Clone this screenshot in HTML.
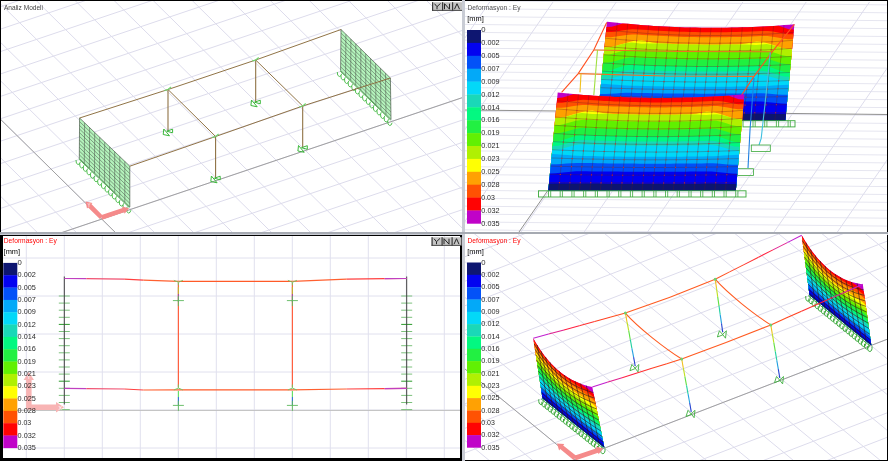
<!DOCTYPE html>
<html><head><meta charset="utf-8"><style>
html,body{margin:0;padding:0;background:#000;}
svg{display:block;}
text{font-family:"Liberation Sans",sans-serif;}
.tx{opacity:0.99;will-change:transform;}
</style></head><body>
<svg width="888" height="461" viewBox="0 0 888 461">
<rect x="0" y="0" width="888" height="461" fill="#000"/>
<rect x="462" y="0" width="3" height="461" fill="#c9ccd4"/>
<rect x="0" y="232" width="888" height="2" fill="#a6aab2"/>
<rect x="0" y="234" width="888" height="1" fill="#c9ccd4"/>
<rect x="1" y="1" width="461" height="231" fill="#fff"/>
<rect x="465" y="1" width="422" height="231" fill="#fff"/>
<rect x="3" y="236" width="457" height="222" fill="#fff"/>
<rect x="465" y="234" width="422" height="226" fill="#fff"/>
<defs><clipPath id="cTL"><rect x="1" y="1" width="461" height="231"/></clipPath><clipPath id="cTR"><rect x="465" y="1" width="422" height="231"/></clipPath><clipPath id="cBL"><rect x="3" y="236" width="457" height="222"/></clipPath><clipPath id="cBR"><rect x="465" y="234" width="422" height="226"/></clipPath></defs>
<g clip-path="url(#cTL)">
<line x1="-819" y1="81.1" x2="-141" y2="749.1" stroke="#dddcec" stroke-width="1" />
<line x1="-789.9" y1="71.3" x2="-111.9" y2="739.3" stroke="#dddcec" stroke-width="1" />
<line x1="-760.8" y1="61.5" x2="-82.8" y2="729.5" stroke="#dddcec" stroke-width="1" />
<line x1="-731.7" y1="51.7" x2="-53.7" y2="719.7" stroke="#dddcec" stroke-width="1" />
<line x1="-702.6" y1="41.9" x2="-24.6" y2="709.9" stroke="#dddcec" stroke-width="1" />
<line x1="-673.5" y1="32.1" x2="4.4" y2="700.1" stroke="#dddcec" stroke-width="1" />
<line x1="-644.5" y1="22.3" x2="33.5" y2="690.3" stroke="#dddcec" stroke-width="1" />
<line x1="-615.4" y1="12.5" x2="62.6" y2="680.5" stroke="#dddcec" stroke-width="1" />
<line x1="-586.3" y1="2.7" x2="91.7" y2="670.7" stroke="#dddcec" stroke-width="1" />
<line x1="-557.2" y1="-7.1" x2="120.8" y2="660.9" stroke="#dddcec" stroke-width="1" />
<line x1="-528.1" y1="-16.9" x2="149.9" y2="651.1" stroke="#dddcec" stroke-width="1" />
<line x1="-499" y1="-26.7" x2="179" y2="641.3" stroke="#dddcec" stroke-width="1" />
<line x1="-469.9" y1="-36.5" x2="208.1" y2="631.5" stroke="#dddcec" stroke-width="1" />
<line x1="-440.8" y1="-46.3" x2="237.2" y2="621.7" stroke="#dddcec" stroke-width="1" />
<line x1="-411.7" y1="-56.1" x2="266.3" y2="611.9" stroke="#dddcec" stroke-width="1" />
<line x1="-382.6" y1="-65.9" x2="295.4" y2="602.1" stroke="#dddcec" stroke-width="1" />
<line x1="-353.6" y1="-75.7" x2="324.4" y2="592.3" stroke="#dddcec" stroke-width="1" />
<line x1="-324.5" y1="-85.5" x2="353.5" y2="582.5" stroke="#dddcec" stroke-width="1" />
<line x1="-295.4" y1="-95.3" x2="382.6" y2="572.7" stroke="#dddcec" stroke-width="1" />
<line x1="-266.3" y1="-105.1" x2="411.7" y2="562.9" stroke="#dddcec" stroke-width="1" />
<line x1="-237.2" y1="-114.9" x2="440.8" y2="553.1" stroke="#dddcec" stroke-width="1" />
<line x1="-208.1" y1="-124.7" x2="469.9" y2="543.3" stroke="#dddcec" stroke-width="1" />
<line x1="-179" y1="-134.5" x2="499" y2="533.5" stroke="#dddcec" stroke-width="1" />
<line x1="-149.9" y1="-144.3" x2="528.1" y2="523.7" stroke="#dddcec" stroke-width="1" />
<line x1="-120.8" y1="-154.1" x2="557.2" y2="513.9" stroke="#dddcec" stroke-width="1" />
<line x1="-91.8" y1="-163.9" x2="586.2" y2="504.1" stroke="#dddcec" stroke-width="1" />
<line x1="-62.7" y1="-173.7" x2="615.3" y2="494.3" stroke="#dddcec" stroke-width="1" />
<line x1="-33.6" y1="-183.5" x2="644.4" y2="484.5" stroke="#dddcec" stroke-width="1" />
<line x1="-4.5" y1="-193.3" x2="673.5" y2="474.7" stroke="#dddcec" stroke-width="1" />
<line x1="24.6" y1="-203.1" x2="702.6" y2="464.9" stroke="#dddcec" stroke-width="1" />
<line x1="53.7" y1="-212.9" x2="731.7" y2="455.1" stroke="#dddcec" stroke-width="1" />
<line x1="82.8" y1="-222.7" x2="760.8" y2="445.3" stroke="#dddcec" stroke-width="1" />
<line x1="111.9" y1="-232.5" x2="789.9" y2="435.5" stroke="#dddcec" stroke-width="1" />
<line x1="141" y1="-242.3" x2="819" y2="425.7" stroke="#dddcec" stroke-width="1" />
<line x1="170.1" y1="-252.1" x2="848.1" y2="415.9" stroke="#dddcec" stroke-width="1" />
<line x1="199.1" y1="-261.9" x2="877.1" y2="406.1" stroke="#dddcec" stroke-width="1" />
<line x1="228.2" y1="-271.7" x2="906.2" y2="396.3" stroke="#dddcec" stroke-width="1" />
<line x1="257.3" y1="-281.5" x2="935.3" y2="386.5" stroke="#dddcec" stroke-width="1" />
<line x1="286.4" y1="-291.3" x2="964.4" y2="376.7" stroke="#dddcec" stroke-width="1" />
<line x1="315.5" y1="-301.1" x2="993.5" y2="366.9" stroke="#dddcec" stroke-width="1" />
<line x1="344.6" y1="-310.9" x2="1022.6" y2="357.1" stroke="#dddcec" stroke-width="1" />
<line x1="373.7" y1="-320.7" x2="1051.7" y2="347.3" stroke="#dddcec" stroke-width="1" />
<line x1="402.8" y1="-330.5" x2="1080.8" y2="337.5" stroke="#dddcec" stroke-width="1" />
<line x1="431.9" y1="-340.3" x2="1109.9" y2="327.7" stroke="#dddcec" stroke-width="1" />
<line x1="461" y1="-350.1" x2="1139" y2="317.9" stroke="#dddcec" stroke-width="1" />
<line x1="490" y1="-359.9" x2="1168" y2="308.1" stroke="#dddcec" stroke-width="1" />
<line x1="519.1" y1="-369.7" x2="1197.1" y2="298.3" stroke="#dddcec" stroke-width="1" />
<line x1="548.2" y1="-379.5" x2="1226.2" y2="288.5" stroke="#dddcec" stroke-width="1" />
<line x1="577.3" y1="-389.3" x2="1255.3" y2="278.7" stroke="#dddcec" stroke-width="1" />
<line x1="606.4" y1="-399.1" x2="1284.4" y2="268.9" stroke="#dddcec" stroke-width="1" />
<line x1="-988.5" y1="-85.9" x2="466" y2="-575.9" stroke="#dddcec" stroke-width="1" />
<line x1="-971.5" y1="-69.2" x2="483" y2="-559.2" stroke="#dddcec" stroke-width="1" />
<line x1="-954.6" y1="-52.5" x2="499.9" y2="-542.5" stroke="#dddcec" stroke-width="1" />
<line x1="-937.6" y1="-35.8" x2="516.9" y2="-525.8" stroke="#dddcec" stroke-width="1" />
<line x1="-920.7" y1="-19.1" x2="533.8" y2="-509.1" stroke="#dddcec" stroke-width="1" />
<line x1="-903.8" y1="-2.4" x2="550.8" y2="-492.4" stroke="#dddcec" stroke-width="1" />
<line x1="-886.8" y1="14.3" x2="567.7" y2="-475.7" stroke="#dddcec" stroke-width="1" />
<line x1="-869.8" y1="31" x2="584.7" y2="-459" stroke="#dddcec" stroke-width="1" />
<line x1="-852.9" y1="47.7" x2="601.6" y2="-442.3" stroke="#dddcec" stroke-width="1" />
<line x1="-835.9" y1="64.4" x2="618.5" y2="-425.6" stroke="#dddcec" stroke-width="1" />
<line x1="-819" y1="81.1" x2="635.5" y2="-408.9" stroke="#dddcec" stroke-width="1" />
<line x1="-802" y1="97.8" x2="652.5" y2="-392.2" stroke="#dddcec" stroke-width="1" />
<line x1="-785.1" y1="114.5" x2="669.4" y2="-375.5" stroke="#dddcec" stroke-width="1" />
<line x1="-768.1" y1="131.2" x2="686.4" y2="-358.8" stroke="#dddcec" stroke-width="1" />
<line x1="-751.2" y1="147.9" x2="703.3" y2="-342.1" stroke="#dddcec" stroke-width="1" />
<line x1="-734.2" y1="164.6" x2="720.2" y2="-325.4" stroke="#dddcec" stroke-width="1" />
<line x1="-717.3" y1="181.3" x2="737.2" y2="-308.7" stroke="#dddcec" stroke-width="1" />
<line x1="-700.3" y1="198" x2="754.1" y2="-292" stroke="#dddcec" stroke-width="1" />
<line x1="-683.4" y1="214.7" x2="771.1" y2="-275.3" stroke="#dddcec" stroke-width="1" />
<line x1="-666.4" y1="231.4" x2="788" y2="-258.6" stroke="#dddcec" stroke-width="1" />
<line x1="-649.5" y1="248.1" x2="805" y2="-241.9" stroke="#dddcec" stroke-width="1" />
<line x1="-632.5" y1="264.8" x2="822" y2="-225.2" stroke="#dddcec" stroke-width="1" />
<line x1="-615.6" y1="281.5" x2="838.9" y2="-208.5" stroke="#dddcec" stroke-width="1" />
<line x1="-598.6" y1="298.2" x2="855.9" y2="-191.8" stroke="#dddcec" stroke-width="1" />
<line x1="-581.7" y1="314.9" x2="872.8" y2="-175.1" stroke="#dddcec" stroke-width="1" />
<line x1="-564.8" y1="331.6" x2="889.8" y2="-158.4" stroke="#dddcec" stroke-width="1" />
<line x1="-547.8" y1="348.3" x2="906.7" y2="-141.7" stroke="#dddcec" stroke-width="1" />
<line x1="-530.8" y1="365" x2="923.6" y2="-125" stroke="#dddcec" stroke-width="1" />
<line x1="-513.9" y1="381.7" x2="940.6" y2="-108.3" stroke="#dddcec" stroke-width="1" />
<line x1="-496.9" y1="398.4" x2="957.5" y2="-91.6" stroke="#dddcec" stroke-width="1" />
<line x1="-480" y1="415.1" x2="974.5" y2="-74.9" stroke="#dddcec" stroke-width="1" />
<line x1="-463" y1="431.8" x2="991.5" y2="-58.2" stroke="#dddcec" stroke-width="1" />
<line x1="-446.1" y1="448.5" x2="1008.4" y2="-41.5" stroke="#dddcec" stroke-width="1" />
<line x1="-429.1" y1="465.2" x2="1025.3" y2="-24.8" stroke="#dddcec" stroke-width="1" />
<line x1="-412.2" y1="481.9" x2="1042.3" y2="-8.1" stroke="#dddcec" stroke-width="1" />
<line x1="-395.2" y1="498.6" x2="1059.2" y2="8.6" stroke="#dddcec" stroke-width="1" />
<line x1="-378.3" y1="515.3" x2="1076.2" y2="25.3" stroke="#dddcec" stroke-width="1" />
<line x1="-361.3" y1="532" x2="1093.2" y2="42" stroke="#dddcec" stroke-width="1" />
<line x1="-344.4" y1="548.7" x2="1110.1" y2="58.7" stroke="#dddcec" stroke-width="1" />
<line x1="-327.4" y1="565.4" x2="1127" y2="75.4" stroke="#dddcec" stroke-width="1" />
<line x1="-310.5" y1="582.1" x2="1144" y2="92.1" stroke="#dddcec" stroke-width="1" />
<line x1="-293.5" y1="598.8" x2="1161" y2="108.8" stroke="#dddcec" stroke-width="1" />
<line x1="-276.6" y1="615.5" x2="1177.9" y2="125.5" stroke="#dddcec" stroke-width="1" />
<line x1="-259.6" y1="632.2" x2="1194.8" y2="142.2" stroke="#dddcec" stroke-width="1" />
<line x1="-242.7" y1="648.9" x2="1211.8" y2="158.9" stroke="#dddcec" stroke-width="1" />
<line x1="-225.7" y1="665.6" x2="1228.8" y2="175.6" stroke="#dddcec" stroke-width="1" />
<line x1="-208.8" y1="682.3" x2="1245.7" y2="192.3" stroke="#dddcec" stroke-width="1" />
<line x1="-191.8" y1="699" x2="1262.7" y2="209" stroke="#dddcec" stroke-width="1" />
<line x1="-174.9" y1="715.7" x2="1279.6" y2="225.7" stroke="#dddcec" stroke-width="1" />
<line x1="-157.9" y1="732.4" x2="1296.5" y2="242.4" stroke="#dddcec" stroke-width="1" />
<line x1="-141" y1="749.1" x2="1313.5" y2="259.1" stroke="#dddcec" stroke-width="1" />
<line x1="-124" y1="765.8" x2="1330.5" y2="275.8" stroke="#dddcec" stroke-width="1" />
<line x1="-107.1" y1="782.5" x2="1347.4" y2="292.5" stroke="#dddcec" stroke-width="1" />
<line x1="-90.1" y1="799.2" x2="1364.3" y2="309.2" stroke="#dddcec" stroke-width="1" />
<line x1="-73.2" y1="815.9" x2="1381.3" y2="325.9" stroke="#dddcec" stroke-width="1" />
<line x1="-56.2" y1="832.6" x2="1398.2" y2="342.6" stroke="#dddcec" stroke-width="1" />
<line x1="-39.3" y1="849.3" x2="1415.2" y2="359.3" stroke="#dddcec" stroke-width="1" />
<line x1="-22.3" y1="866" x2="1432.2" y2="376" stroke="#dddcec" stroke-width="1" />
<line x1="-5.4" y1="882.7" x2="1449.1" y2="392.7" stroke="#dddcec" stroke-width="1" />
<line x1="11.6" y1="899.4" x2="1466" y2="409.4" stroke="#dddcec" stroke-width="1" />
<line x1="-480" y1="415.1" x2="974.5" y2="-74.9" stroke="#a0a0a0" stroke-width="1" />
<line x1="-237.2" y1="-114.9" x2="440.8" y2="553.1" stroke="#a0a0a0" stroke-width="1" />
<polygon points="79.6,118 129.8,166.2 129.8,207 79.3,158.5" fill="#b4f4bc" stroke="none" stroke-width="1" />
<path d="M79.6,121.7L129.8,169.9M79.5,125.4L129.8,173.6M79.5,129L129.8,177.3M79.5,132.7L129.8,181M79.5,136.4L129.8,184.7M79.4,140.1L129.8,188.5M79.4,143.8L129.8,192.2M79.4,147.5L129.8,195.9M79.4,151.1L129.8,199.6M79.3,154.8L129.8,203.3M84.6,122.8L84.3,163.3M89.6,127.6L89.4,168.2M94.7,132.5L94.5,173.1M99.7,137.3L99.5,177.9M104.7,142.1L104.6,182.8M109.7,146.9L109.6,187.6M114.7,151.7L114.7,192.4M119.8,156.6L119.7,197.3M124.8,161.4L124.8,202.2" stroke="#4a544a" stroke-width="0.6" fill="none" opacity="0.9"/>
<polygon points="79.6,118 129.8,166.2 129.8,207 79.3,158.5" fill="none" stroke="#4a5a4a" stroke-width="0.7" />
<path d="M76,160q-0.2,4.2 2,4.5q1.8,0.2 2.4,-2.8M79.6,163.5q-0.2,4.2 2,4.5q1.8,0.2 2.4,-2.8M83.2,166.9q-0.2,4.2 2,4.5q1.8,0.2 2.4,-2.8M86.8,170.4q-0.2,4.2 2,4.5q1.8,0.2 2.4,-2.8M90.4,173.9q-0.2,4.2 2,4.5q1.8,0.2 2.4,-2.8M94,177.3q-0.2,4.2 2,4.5q1.8,0.2 2.4,-2.8M97.6,180.8q-0.2,4.2 2,4.5q1.8,0.2 2.4,-2.8M101.3,184.2q-0.2,4.2 2,4.5q1.8,0.2 2.4,-2.8M104.9,187.7q-0.2,4.2 2,4.5q1.8,0.2 2.4,-2.8M108.5,191.2q-0.2,4.2 2,4.5q1.8,0.2 2.4,-2.8M112.1,194.6q-0.2,4.2 2,4.5q1.8,0.2 2.4,-2.8M115.7,198.1q-0.2,4.2 2,4.5q1.8,0.2 2.4,-2.8M119.3,201.6q-0.2,4.2 2,4.5q1.8,0.2 2.4,-2.8M122.9,205q-0.2,4.2 2,4.5q1.8,0.2 2.4,-2.8M126.5,208.5q-0.2,4.2 2,4.5q1.8,0.2 2.4,-2.8" stroke="#40b840" stroke-width="0.9" fill="none"/>
<line x1="78.8" y1="159" x2="129.3" y2="207.5" stroke="#40b840" stroke-width="0.9" />
<polygon points="341,29.5 390.4,78 391,119.5 340.6,70.5" fill="#b4f4bc" stroke="none" stroke-width="1" />
<path d="M341,33.2L390.5,81.8M340.9,37L390.5,85.5M340.9,40.7L390.6,89.3M340.9,44.4L390.6,93.1M340.8,48.1L390.7,96.9M340.8,51.9L390.7,100.6M340.7,55.6L390.8,104.4M340.7,59.3L390.8,108.2M340.7,63L390.9,112M340.6,66.8L390.9,115.7M345.9,34.4L345.6,75.4M350.9,39.2L350.7,80.3M355.8,44L355.7,85.2M360.8,48.9L360.8,90.1M365.7,53.8L365.8,95M370.6,58.6L370.8,99.9M375.6,63.4L375.9,104.8M380.5,68.3L380.9,109.7M385.5,73.2L386,114.6" stroke="#4a544a" stroke-width="0.6" fill="none" opacity="0.9"/>
<polygon points="341,29.5 390.4,78 391,119.5 340.6,70.5" fill="none" stroke="#4a5a4a" stroke-width="0.7" />
<path d="M337.3,72q-0.2,4.2 2,4.5q1.8,0.2 2.4,-2.8M340.9,75.5q-0.2,4.2 2,4.5q1.8,0.2 2.4,-2.8M344.5,79q-0.2,4.2 2,4.5q1.8,0.2 2.4,-2.8M348.1,82.5q-0.2,4.2 2,4.5q1.8,0.2 2.4,-2.8M351.7,86q-0.2,4.2 2,4.5q1.8,0.2 2.4,-2.8M355.3,89.5q-0.2,4.2 2,4.5q1.8,0.2 2.4,-2.8M358.9,93q-0.2,4.2 2,4.5q1.8,0.2 2.4,-2.8M362.5,96.5q-0.2,4.2 2,4.5q1.8,0.2 2.4,-2.8M366.1,100q-0.2,4.2 2,4.5q1.8,0.2 2.4,-2.8M369.7,103.5q-0.2,4.2 2,4.5q1.8,0.2 2.4,-2.8M373.3,107q-0.2,4.2 2,4.5q1.8,0.2 2.4,-2.8M376.9,110.5q-0.2,4.2 2,4.5q1.8,0.2 2.4,-2.8M380.5,114q-0.2,4.2 2,4.5q1.8,0.2 2.4,-2.8M384.1,117.5q-0.2,4.2 2,4.5q1.8,0.2 2.4,-2.8M387.7,121q-0.2,4.2 2,4.5q1.8,0.2 2.4,-2.8" stroke="#40b840" stroke-width="0.9" fill="none"/>
<line x1="340.1" y1="71" x2="390.5" y2="120" stroke="#40b840" stroke-width="0.9" />
<polyline points="79.6,118 168,89.5 255.7,60 341,29.5" fill="none" stroke="#8a6c3c" stroke-width="0.95" />
<polyline points="129.8,166.2 215.6,136.5 302.7,106 390.4,78" fill="none" stroke="#8a6c3c" stroke-width="0.95" />
<line x1="168" y1="89.5" x2="215.6" y2="136.5" stroke="#8a6c3c" stroke-width="0.95" />
<line x1="255.7" y1="60" x2="302.7" y2="106" stroke="#8a6c3c" stroke-width="0.95" />
<line x1="168" y1="89.5" x2="168" y2="131" stroke="#8a6c3c" stroke-width="1.05" />
<polygon points="163.8,129 163.2,134.5 169.5,135.8" fill="none" stroke="#3cb83c" stroke-width="1.0" />
<polygon points="172.6,129.2 172.6,132.8 166.8,131.2" fill="none" stroke="#3cb83c" stroke-width="1.0" />
<path d="M164.5,90.5 L168,89.5 L171,87" stroke="#70d870" stroke-width="1.2" fill="none"/>
<line x1="215.6" y1="136.5" x2="215.6" y2="178" stroke="#8a6c3c" stroke-width="1.05" />
<polygon points="211.4,176 210.8,181.5 217.1,182.8" fill="none" stroke="#3cb83c" stroke-width="1.0" />
<polygon points="220.2,176.2 220.2,179.8 214.4,178.2" fill="none" stroke="#3cb83c" stroke-width="1.0" />
<path d="M212.1,137.5 L215.6,136.5 L218.6,134" stroke="#70d870" stroke-width="1.2" fill="none"/>
<line x1="255.7" y1="60" x2="255.7" y2="102" stroke="#8a6c3c" stroke-width="1.05" />
<polygon points="251.5,100 250.9,105.5 257.2,106.8" fill="none" stroke="#3cb83c" stroke-width="1.0" />
<polygon points="260.3,100.2 260.3,103.8 254.5,102.2" fill="none" stroke="#3cb83c" stroke-width="1.0" />
<path d="M252.2,61 L255.7,60 L258.7,57.5" stroke="#70d870" stroke-width="1.2" fill="none"/>
<line x1="302.7" y1="106" x2="302.7" y2="147.5" stroke="#8a6c3c" stroke-width="1.05" />
<polygon points="298.5,145.5 297.9,151 304.2,152.3" fill="none" stroke="#3cb83c" stroke-width="1.0" />
<polygon points="307.3,145.7 307.3,149.3 301.5,147.7" fill="none" stroke="#3cb83c" stroke-width="1.0" />
<path d="M299.2,107 L302.7,106 L305.7,103.5" stroke="#70d870" stroke-width="1.2" fill="none"/>
<polygon points="102.2,219.7 124.1,212.3 124.6,213.8 129,208.2 122.1,206.4 122.6,207.9 100.8,215.3" fill="#f58a8a" stroke="none" stroke-width="1" />
<polygon points="103.1,215.9 91.4,204.1 92.5,203 85.5,201.5 87,208.5 88.1,207.4 99.9,219.1" fill="#f58a8a" stroke="none" stroke-width="1" />
<text x="87.6" y="206.5" font-size="4.5" fill="#ffffff" text-anchor="start" font-weight="normal">Y</text>
</g>
<g clip-path="url(#cTR)">
<line x1="464" y1="-7.2" x2="888" y2="-3" stroke="#e6e6f0" stroke-width="1" />
<line x1="464" y1="0.7" x2="888" y2="4.9" stroke="#e6e6f0" stroke-width="1" />
<line x1="464" y1="8.6" x2="888" y2="12.8" stroke="#e6e6f0" stroke-width="1" />
<line x1="464" y1="16.5" x2="888" y2="20.7" stroke="#e6e6f0" stroke-width="1" />
<line x1="464" y1="24.4" x2="888" y2="28.6" stroke="#e6e6f0" stroke-width="1" />
<line x1="464" y1="32.3" x2="888" y2="36.5" stroke="#e6e6f0" stroke-width="1" />
<line x1="464" y1="40.2" x2="888" y2="44.4" stroke="#e6e6f0" stroke-width="1" />
<line x1="464" y1="48.1" x2="888" y2="52.3" stroke="#e6e6f0" stroke-width="1" />
<line x1="464" y1="56" x2="888" y2="60.2" stroke="#e6e6f0" stroke-width="1" />
<line x1="464" y1="63.9" x2="888" y2="68.1" stroke="#e6e6f0" stroke-width="1" />
<line x1="464" y1="71.8" x2="888" y2="76" stroke="#e6e6f0" stroke-width="1" />
<line x1="464" y1="79.7" x2="888" y2="83.9" stroke="#e6e6f0" stroke-width="1" />
<line x1="464" y1="87.6" x2="888" y2="91.8" stroke="#e6e6f0" stroke-width="1" />
<line x1="464" y1="95.5" x2="888" y2="99.7" stroke="#e6e6f0" stroke-width="1" />
<line x1="464" y1="103.4" x2="888" y2="107.6" stroke="#e6e6f0" stroke-width="1" />
<line x1="464" y1="111.3" x2="888" y2="115.5" stroke="#e6e6f0" stroke-width="1" />
<line x1="464" y1="119.2" x2="888" y2="123.4" stroke="#e6e6f0" stroke-width="1" />
<line x1="464" y1="127.1" x2="888" y2="131.3" stroke="#e6e6f0" stroke-width="1" />
<line x1="464" y1="135" x2="888" y2="139.2" stroke="#e6e6f0" stroke-width="1" />
<line x1="464" y1="142.9" x2="888" y2="147.1" stroke="#e6e6f0" stroke-width="1" />
<line x1="464" y1="150.8" x2="888" y2="155" stroke="#e6e6f0" stroke-width="1" />
<line x1="464" y1="158.7" x2="888" y2="162.9" stroke="#e6e6f0" stroke-width="1" />
<line x1="464" y1="166.6" x2="888" y2="170.8" stroke="#e6e6f0" stroke-width="1" />
<line x1="464" y1="174.5" x2="888" y2="178.7" stroke="#e6e6f0" stroke-width="1" />
<line x1="464" y1="182.4" x2="888" y2="186.6" stroke="#e6e6f0" stroke-width="1" />
<line x1="464" y1="190.3" x2="888" y2="194.5" stroke="#e6e6f0" stroke-width="1" />
<line x1="464" y1="198.2" x2="888" y2="202.4" stroke="#e6e6f0" stroke-width="1" />
<line x1="464" y1="206.1" x2="888" y2="210.3" stroke="#e6e6f0" stroke-width="1" />
<line x1="464" y1="214" x2="888" y2="218.2" stroke="#e6e6f0" stroke-width="1" />
<line x1="464" y1="221.9" x2="888" y2="226.1" stroke="#e6e6f0" stroke-width="1" />
<line x1="464" y1="229.8" x2="888" y2="234" stroke="#e6e6f0" stroke-width="1" />
<line x1="464" y1="237.7" x2="888" y2="241.9" stroke="#e6e6f0" stroke-width="1" />
<line x1="464" y1="245.6" x2="888" y2="249.8" stroke="#e6e6f0" stroke-width="1" />
<line x1="464" y1="253.5" x2="888" y2="257.7" stroke="#e6e6f0" stroke-width="1" />
<line x1="173.2" y1="2" x2="14.5" y2="232" stroke="#dddcec" stroke-width="1" />
<line x1="236.5" y1="2" x2="77.8" y2="232" stroke="#dddcec" stroke-width="1" />
<line x1="299.8" y1="2" x2="141.1" y2="232" stroke="#dddcec" stroke-width="1" />
<line x1="363.1" y1="2" x2="204.4" y2="232" stroke="#dddcec" stroke-width="1" />
<line x1="426.4" y1="2" x2="267.7" y2="232" stroke="#dddcec" stroke-width="1" />
<line x1="489.7" y1="2" x2="331" y2="232" stroke="#dddcec" stroke-width="1" />
<line x1="553" y1="2" x2="394.3" y2="232" stroke="#dddcec" stroke-width="1" />
<line x1="616.3" y1="2" x2="457.6" y2="232" stroke="#dddcec" stroke-width="1" />
<line x1="679.6" y1="2" x2="520.9" y2="232" stroke="#dddcec" stroke-width="1" />
<line x1="742.9" y1="2" x2="584.2" y2="232" stroke="#dddcec" stroke-width="1" />
<line x1="806.2" y1="2" x2="647.5" y2="232" stroke="#dddcec" stroke-width="1" />
<line x1="869.5" y1="2" x2="710.8" y2="232" stroke="#dddcec" stroke-width="1" />
<line x1="932.8" y1="2" x2="774.1" y2="232" stroke="#dddcec" stroke-width="1" />
<line x1="996.1" y1="2" x2="837.4" y2="232" stroke="#dddcec" stroke-width="1" />
<line x1="464" y1="110" x2="888" y2="114.5" stroke="#909090" stroke-width="1" />
<line x1="547.6" y1="190.8" x2="519" y2="232" stroke="#909090" stroke-width="1" />
<polygon points="606.9,21.7 612.1,22.3 617.3,22.8 622.5,23.4 627.7,23.8 632.9,24.3 638.1,24.7 643.4,25.2 648.6,25.5 653.8,25.9 659,26.2 664.2,26.5 669.4,26.7 674.6,27 679.8,27.2 685,27.4 690.2,27.5 695.4,27.6 700.6,27.7 705.9,27.8 711.1,27.8 716.3,27.8 721.5,27.8 726.7,27.7 731.9,27.6 737.1,27.5 742.3,27.3 747.5,27.2 752.7,27 757.9,26.7 763.1,26.5 768.4,26.2 773.6,25.9 778.8,25.5 784,25.1 789.2,24.7 794.4,24.3 785.3,120.7 780.1,120.7 774.9,120.7 769.6,120.7 764.4,120.7 759.2,120.7 754,120.7 748.8,120.7 743.6,120.7 738.3,120.7 733.1,120.7 727.9,120.7 722.7,120.7 717.5,120.7 712.3,120.7 707,120.7 701.8,120.7 696.6,120.7 691.4,120.7 686.2,120.7 681,120.7 675.8,120.7 670.5,120.7 665.3,120.7 660.1,120.7 654.9,120.7 649.7,120.7 644.5,120.7 639.2,120.7 634,120.7 628.8,120.7 623.6,120.7 618.4,120.7 613.1,120.7 607.9,120.7 602.7,120.7 597.5,120.7" fill="#c000c8" stroke="none" stroke-width="1" />
<polygon points="606.4,27.1 611.7,26.8 617.1,25.3 622.5,23.6 627.7,23.8 632.9,24.3 638.1,24.7 643.4,25.2 648.6,25.5 653.8,25.9 659,26.2 664.2,26.5 669.4,26.7 674.6,27 679.8,27.2 685,27.4 690.2,27.5 695.4,27.6 700.6,27.7 705.9,27.8 711.1,27.8 716.3,27.8 721.5,27.8 726.7,27.7 731.9,27.6 737.1,27.5 742.3,27.3 747.5,27.2 752.7,27 757.9,26.7 763.1,26.5 768.4,26.2 773.6,25.9 778.8,25.7 783.7,27.6 788.8,29.2 793.9,29.6 785.3,120.7 780.1,120.7 774.9,120.7 769.6,120.7 764.4,120.7 759.2,120.7 754,120.7 748.8,120.7 743.6,120.7 738.3,120.7 733.1,120.7 727.9,120.7 722.7,120.7 717.5,120.7 712.3,120.7 707,120.7 701.8,120.7 696.6,120.7 691.4,120.7 686.2,120.7 681,120.7 675.8,120.7 670.5,120.7 665.3,120.7 660.1,120.7 654.9,120.7 649.7,120.7 644.5,120.7 639.2,120.7 634,120.7 628.8,120.7 623.6,120.7 618.4,120.7 613.1,120.7 607.9,120.7 602.7,120.7 597.5,120.7" fill="#ff0000" stroke="none" stroke-width="1" />
<polygon points="605.9,32 611.2,32.1 616.5,31.5 621.8,30.6 627.2,29.7 632.5,29.2 637.7,29.4 642.9,29.7 648.1,30.1 653.3,30.4 658.5,30.7 663.7,31 669,31.3 674.2,31.5 679.4,31.7 684.6,31.8 689.8,32 695,32.1 700.2,32.2 705.4,32.2 710.6,32.2 715.8,32.2 721,32.2 726.2,32.2 731.5,32.1 736.7,32 741.9,31.8 747.1,31.7 752.3,31.5 757.5,31.2 762.7,31 767.9,31 773,31.6 778.1,32.6 783.2,33.6 788.3,34.3 793.5,34.3 785.3,120.7 780.1,120.7 774.9,120.7 769.6,120.7 764.4,120.7 759.2,120.7 754,120.7 748.8,120.7 743.6,120.7 738.3,120.7 733.1,120.7 727.9,120.7 722.7,120.7 717.5,120.7 712.3,120.7 707,120.7 701.8,120.7 696.6,120.7 691.4,120.7 686.2,120.7 681,120.7 675.8,120.7 670.5,120.7 665.3,120.7 660.1,120.7 654.9,120.7 649.7,120.7 644.5,120.7 639.2,120.7 634,120.7 628.8,120.7 623.6,120.7 618.4,120.7 613.1,120.7 607.9,120.7 602.7,120.7 597.5,120.7" fill="#ff5000" stroke="none" stroke-width="1" />
<polygon points="605.4,37.1 610.7,37.2 616,36.6 621.3,35.7 626.7,34.9 632,34.4 637.2,34.5 642.4,34.9 647.6,35.2 652.8,35.5 658,35.8 663.2,36.1 668.5,36.3 673.7,36.5 678.9,36.7 684.1,36.9 689.3,37 694.5,37.1 699.7,37.2 704.9,37.2 710.1,37.3 715.3,37.3 720.5,37.2 725.8,37.2 731,37.1 736.2,37 741.4,36.9 746.6,36.7 751.8,36.5 757,36.3 762.2,36.1 767.4,36.1 772.5,36.7 777.6,37.6 782.7,38.6 787.8,39.3 793,39.3 785.3,120.7 780.1,120.7 774.9,120.7 769.6,120.7 764.4,120.7 759.2,120.7 754,120.7 748.8,120.7 743.6,120.7 738.3,120.7 733.1,120.7 727.9,120.7 722.7,120.7 717.5,120.7 712.3,120.7 707,120.7 701.8,120.7 696.6,120.7 691.4,120.7 686.2,120.7 681,120.7 675.8,120.7 670.5,120.7 665.3,120.7 660.1,120.7 654.9,120.7 649.7,120.7 644.5,120.7 639.2,120.7 634,120.7 628.8,120.7 623.6,120.7 618.4,120.7 613.1,120.7 607.9,120.7 602.7,120.7 597.5,120.7" fill="#ffa000" stroke="none" stroke-width="1" />
<polygon points="604.5,47.4 609.7,47.3 615.1,46.2 620.5,44.6 625.9,43 631.3,41.4 636.6,40.3 641.9,40.2 647,41.3 652.1,42.6 657.3,43.3 662.5,43.6 667.7,43.8 672.9,44 678.1,44.2 683.3,44.3 688.5,44.5 693.8,44.6 699,44.6 704.2,44.7 709.4,44.7 714.6,44.7 719.8,44.7 725,44.6 730.2,44.6 735.4,44.4 740.7,44.2 745.9,43.6 751.2,42.5 756.5,41.5 761.7,41.7 766.7,42.9 771.8,44.6 776.8,46.3 781.8,47.9 786.9,49.1 792,49.4 785.3,120.7 780.1,120.7 774.9,120.7 769.6,120.7 764.4,120.7 759.2,120.7 754,120.7 748.8,120.7 743.6,120.7 738.3,120.7 733.1,120.7 727.9,120.7 722.7,120.7 717.5,120.7 712.3,120.7 707,120.7 701.8,120.7 696.6,120.7 691.4,120.7 686.2,120.7 681,120.7 675.8,120.7 670.5,120.7 665.3,120.7 660.1,120.7 654.9,120.7 649.7,120.7 644.5,120.7 639.2,120.7 634,120.7 628.8,120.7 623.6,120.7 618.4,120.7 613.1,120.7 607.9,120.7 602.7,120.7 597.5,120.7" fill="#ffff00" stroke="none" stroke-width="1" />
<polygon points="604.5,47.4 609.7,47.3 615.1,46.2 620.5,44.6 625.9,43.3 631.2,42.6 636.4,43.1 641.5,43.7 646.8,43.6 652.1,43.4 657.3,43.4 662.5,43.6 667.7,43.8 672.9,44 678.1,44.2 683.3,44.3 688.5,44.5 693.8,44.6 699,44.6 704.2,44.7 709.4,44.7 714.6,44.7 719.8,44.7 725,44.6 730.2,44.6 735.4,44.5 740.6,44.4 745.8,44.5 751,44.8 756.2,45 761.4,44.5 766.6,44.1 771.7,44.9 776.8,46.3 781.8,47.9 786.9,49.1 792,49.4 785.3,120.7 780.1,120.7 774.9,120.7 769.6,120.7 764.4,120.7 759.2,120.7 754,120.7 748.8,120.7 743.6,120.7 738.3,120.7 733.1,120.7 727.9,120.7 722.7,120.7 717.5,120.7 712.3,120.7 707,120.7 701.8,120.7 696.6,120.7 691.4,120.7 686.2,120.7 681,120.7 675.8,120.7 670.5,120.7 665.3,120.7 660.1,120.7 654.9,120.7 649.7,120.7 644.5,120.7 639.2,120.7 634,120.7 628.8,120.7 623.6,120.7 618.4,120.7 613.1,120.7 607.9,120.7 602.7,120.7 597.5,120.7" fill="#b0f000" stroke="none" stroke-width="1" />
<polygon points="603.8,54.6 609,54.4 614.4,53.3 619.8,51.8 625.2,50.4 630.5,49.4 635.7,49.4 641,49.7 646.2,50 651.4,50.2 656.6,50.5 661.8,50.7 667,50.9 672.2,51.1 677.4,51.2 682.6,51.3 687.9,51.5 693.1,51.5 698.3,51.6 703.5,51.6 708.7,51.7 713.9,51.7 719.1,51.6 724.3,51.6 729.5,51.5 734.7,51.4 740,51.3 745.2,51.2 750.4,51.1 755.6,50.9 760.8,50.7 766,50.8 771.1,51.8 776.1,53.3 781.1,54.9 786.2,56 791.4,56.3 785.3,120.7 780.1,120.7 774.9,120.7 769.6,120.7 764.4,120.7 759.2,120.7 754,120.7 748.8,120.7 743.6,120.7 738.3,120.7 733.1,120.7 727.9,120.7 722.7,120.7 717.5,120.7 712.3,120.7 707,120.7 701.8,120.7 696.6,120.7 691.4,120.7 686.2,120.7 681,120.7 675.8,120.7 670.5,120.7 665.3,120.7 660.1,120.7 654.9,120.7 649.7,120.7 644.5,120.7 639.2,120.7 634,120.7 628.8,120.7 623.6,120.7 618.4,120.7 613.1,120.7 607.9,120.7 602.7,120.7 597.5,120.7" fill="#60f000" stroke="none" stroke-width="1" />
<polygon points="603,62.8 608.3,62.5 613.6,61.5 619,60 624.4,58.5 629.7,57.6 635,57.6 640.2,57.8 645.4,58.1 650.6,58.3 655.8,58.5 661,58.7 666.2,58.9 671.4,59 676.6,59.2 681.9,59.3 687.1,59.4 692.3,59.4 697.5,59.5 702.7,59.5 707.9,59.6 713.1,59.6 718.3,59.5 723.5,59.5 728.8,59.4 734,59.4 739.2,59.3 744.4,59.2 749.6,59 754.8,58.9 760,58.7 765.2,58.8 770.3,59.8 775.3,61.3 780.4,62.9 785.5,64 790.6,64.3 785.3,120.7 780.1,120.7 774.9,120.7 769.6,120.7 764.4,120.7 759.2,120.7 754,120.7 748.8,120.7 743.6,120.7 738.3,120.7 733.1,120.7 727.9,120.7 722.7,120.7 717.5,120.7 712.3,120.7 707,120.7 701.8,120.7 696.6,120.7 691.4,120.7 686.2,120.7 681,120.7 675.8,120.7 670.5,120.7 665.3,120.7 660.1,120.7 654.9,120.7 649.7,120.7 644.5,120.7 639.2,120.7 634,120.7 628.8,120.7 623.6,120.7 618.4,120.7 613.1,120.7 607.9,120.7 602.7,120.7 597.5,120.7" fill="#20f040" stroke="none" stroke-width="1" />
<polygon points="602.2,71 607.5,70.7 612.9,69.4 618.3,67.6 623.7,66 629,64.9 634.3,64.8 639.5,65 644.7,65.2 649.9,65.4 655.1,65.6 660.3,65.8 665.5,65.9 670.7,66.1 675.9,66.2 681.2,66.3 686.4,66.4 691.6,66.4 696.8,66.5 702,66.5 707.2,66.5 712.4,66.5 717.6,66.5 722.9,66.5 728.1,66.4 733.3,66.4 738.5,66.3 743.7,66.2 748.9,66.1 754.1,65.9 759.3,65.8 764.5,66 769.6,67.1 774.6,68.8 779.6,70.6 784.7,71.9 789.9,72.3 785.3,120.7 780.1,120.7 774.9,120.7 769.6,120.7 764.4,120.7 759.2,120.7 754,120.7 748.8,120.7 743.6,120.7 738.3,120.7 733.1,120.7 727.9,120.7 722.7,120.7 717.5,120.7 712.3,120.7 707,120.7 701.8,120.7 696.6,120.7 691.4,120.7 686.2,120.7 681,120.7 675.8,120.7 670.5,120.7 665.3,120.7 660.1,120.7 654.9,120.7 649.7,120.7 644.5,120.7 639.2,120.7 634,120.7 628.8,120.7 623.6,120.7 618.4,120.7 613.1,120.7 607.9,120.7 602.7,120.7 597.5,120.7" fill="#00f880" stroke="none" stroke-width="1" />
<polygon points="601.8,75.7 607,75.3 612.4,74.1 617.8,72.5 623.2,71 628.5,70 633.8,69.8 639,70.1 644.2,70.3 649.4,70.4 654.6,70.6 659.8,70.8 665,70.9 670.2,71 675.5,71.1 680.7,71.2 685.9,71.3 691.1,71.4 696.3,71.4 701.5,71.4 706.7,71.5 711.9,71.5 717.2,71.4 722.4,71.4 727.6,71.4 732.8,71.3 738,71.2 743.2,71.1 748.4,71 753.6,70.9 758.8,70.8 764,70.9 769.1,72 774.2,73.6 779.2,75.2 784.3,76.5 789.4,76.8 785.3,120.7 780.1,120.7 774.9,120.7 769.6,120.7 764.4,120.7 759.2,120.7 754,120.7 748.8,120.7 743.6,120.7 738.3,120.7 733.1,120.7 727.9,120.7 722.7,120.7 717.5,120.7 712.3,120.7 707,120.7 701.8,120.7 696.6,120.7 691.4,120.7 686.2,120.7 681,120.7 675.8,120.7 670.5,120.7 665.3,120.7 660.1,120.7 654.9,120.7 649.7,120.7 644.5,120.7 639.2,120.7 634,120.7 628.8,120.7 623.6,120.7 618.4,120.7 613.1,120.7 607.9,120.7 602.7,120.7 597.5,120.7" fill="#18d8b8" stroke="none" stroke-width="1" />
<polygon points="601.4,79.6 606.7,79.3 612,78.2 617.4,76.7 622.8,75.3 628.1,74.4 633.3,74.3 638.5,74.5 643.8,74.6 649,74.8 654.2,75 659.4,75.1 664.6,75.2 669.8,75.3 675,75.4 680.2,75.5 685.5,75.6 690.7,75.6 695.9,75.7 701.1,75.7 706.3,75.7 711.5,75.7 716.7,75.7 721.9,75.7 727.2,75.6 732.4,75.6 737.6,75.5 742.8,75.4 748,75.3 753.2,75.2 758.4,75.1 763.6,75.3 768.7,76.3 773.8,77.7 778.8,79.2 783.9,80.3 789.1,80.7 785.3,120.7 780.1,120.7 774.9,120.7 769.6,120.7 764.4,120.7 759.2,120.7 754,120.7 748.8,120.7 743.6,120.7 738.3,120.7 733.1,120.7 727.9,120.7 722.7,120.7 717.5,120.7 712.3,120.7 707,120.7 701.8,120.7 696.6,120.7 691.4,120.7 686.2,120.7 681,120.7 675.8,120.7 670.5,120.7 665.3,120.7 660.1,120.7 654.9,120.7 649.7,120.7 644.5,120.7 639.2,120.7 634,120.7 628.8,120.7 623.6,120.7 618.4,120.7 613.1,120.7 607.9,120.7 602.7,120.7 597.5,120.7" fill="#00d8f8" stroke="none" stroke-width="1" />
<polygon points="601,83.8 606.2,84.1 611.4,84.4 616.6,84.8 621.8,85.2 627,85.5 632.2,85.7 637.4,85.8 642.6,86 647.9,86.1 653.1,86.2 658.3,86.3 663.5,86.4 668.7,86.5 673.9,86.6 679.1,86.6 684.3,86.7 689.6,86.7 694.8,86.8 700,86.8 705.2,86.8 710.4,86.8 715.6,86.8 720.8,86.8 726.1,86.7 731.3,86.7 736.5,86.6 741.7,86.6 746.9,86.5 752.1,86.4 757.3,86.3 762.6,86.2 767.8,85.9 773,85.6 778.2,85.3 783.5,85 788.7,84.7 785.3,120.7 780.1,120.7 774.9,120.7 769.6,120.7 764.4,120.7 759.2,120.7 754,120.7 748.8,120.7 743.6,120.7 738.3,120.7 733.1,120.7 727.9,120.7 722.7,120.7 717.5,120.7 712.3,120.7 707,120.7 701.8,120.7 696.6,120.7 691.4,120.7 686.2,120.7 681,120.7 675.8,120.7 670.5,120.7 665.3,120.7 660.1,120.7 654.9,120.7 649.7,120.7 644.5,120.7 639.2,120.7 634,120.7 628.8,120.7 623.6,120.7 618.4,120.7 613.1,120.7 607.9,120.7 602.7,120.7 597.5,120.7" fill="#00a8f8" stroke="none" stroke-width="1" />
<polygon points="600,94.1 605.3,94.1 610.5,93.8 615.8,93.4 621,93 626.3,92.8 631.5,92.8 636.7,92.9 641.9,93 647.2,93.1 652.4,93.2 657.6,93.3 662.8,93.4 668,93.4 673.2,93.5 678.4,93.5 683.7,93.6 688.9,93.6 694.1,93.6 699.3,93.7 704.5,93.7 709.7,93.7 714.9,93.7 720.2,93.6 725.4,93.6 730.6,93.6 735.8,93.5 741,93.5 746.2,93.4 751.4,93.4 756.7,93.3 761.9,93.3 767,93.6 772.2,94 777.4,94.4 782.5,94.7 787.7,94.8 785.3,120.7 780.1,120.7 774.9,120.7 769.6,120.7 764.4,120.7 759.2,120.7 754,120.7 748.8,120.7 743.6,120.7 738.3,120.7 733.1,120.7 727.9,120.7 722.7,120.7 717.5,120.7 712.3,120.7 707,120.7 701.8,120.7 696.6,120.7 691.4,120.7 686.2,120.7 681,120.7 675.8,120.7 670.5,120.7 665.3,120.7 660.1,120.7 654.9,120.7 649.7,120.7 644.5,120.7 639.2,120.7 634,120.7 628.8,120.7 623.6,120.7 618.4,120.7 613.1,120.7 607.9,120.7 602.7,120.7 597.5,120.7" fill="#0050f8" stroke="none" stroke-width="1" />
<polygon points="599.2,103.3 604.4,103.2 609.7,102.7 614.9,102.1 620.2,101.5 625.5,101.2 630.7,101.1 635.9,101.2 641.1,101.3 646.4,101.4 651.6,101.4 656.8,101.5 662,101.5 667.2,101.6 672.4,101.6 677.6,101.7 682.9,101.7 688.1,101.7 693.3,101.7 698.5,101.7 703.7,101.7 708.9,101.7 714.1,101.7 719.4,101.7 724.6,101.7 729.8,101.7 735,101.7 740.2,101.6 745.4,101.6 750.7,101.5 755.9,101.5 761.1,101.5 766.2,101.9 771.4,102.5 776.5,103.1 781.7,103.6 786.9,103.7 785.3,120.7 780.1,120.7 774.9,120.7 769.6,120.7 764.4,120.7 759.2,120.7 754,120.7 748.8,120.7 743.6,120.7 738.3,120.7 733.1,120.7 727.9,120.7 722.7,120.7 717.5,120.7 712.3,120.7 707,120.7 701.8,120.7 696.6,120.7 691.4,120.7 686.2,120.7 681,120.7 675.8,120.7 670.5,120.7 665.3,120.7 660.1,120.7 654.9,120.7 649.7,120.7 644.5,120.7 639.2,120.7 634,120.7 628.8,120.7 623.6,120.7 618.4,120.7 613.1,120.7 607.9,120.7 602.7,120.7 597.5,120.7" fill="#0000f0" stroke="none" stroke-width="1" />
<polygon points="598.2,113.5 603.4,113.5 608.6,113.5 613.8,113.5 619.1,113.5 624.3,113.5 629.5,113.5 634.7,113.5 639.9,113.6 645.1,113.6 650.4,113.6 655.6,113.6 660.8,113.7 666,113.7 671.2,113.7 676.4,113.7 681.7,113.7 686.9,113.7 692.1,113.7 697.3,113.7 702.5,113.7 707.7,113.7 713,113.7 718.2,113.7 723.4,113.7 728.6,113.7 733.8,113.7 739,113.7 744.3,113.7 749.5,113.7 754.7,113.6 759.9,113.6 765.1,113.6 770.3,113.7 775.5,113.7 780.7,113.7 786,113.7 785.3,120.7 780.1,120.7 774.9,120.7 769.6,120.7 764.4,120.7 759.2,120.7 754,120.7 748.8,120.7 743.6,120.7 738.3,120.7 733.1,120.7 727.9,120.7 722.7,120.7 717.5,120.7 712.3,120.7 707,120.7 701.8,120.7 696.6,120.7 691.4,120.7 686.2,120.7 681,120.7 675.8,120.7 670.5,120.7 665.3,120.7 660.1,120.7 654.9,120.7 649.7,120.7 644.5,120.7 639.2,120.7 634,120.7 628.8,120.7 623.6,120.7 618.4,120.7 613.1,120.7 607.9,120.7 602.7,120.7 597.5,120.7" fill="#0c1470" stroke="none" stroke-width="1" />
<polyline points="617.3,22.8 616.8,27.7 616.4,32.6 615.9,37.5 615.4,42.4 615,47.3 614.5,52.2 614,57.1 613.6,62 613.1,66.9 612.6,71.8 612.2,76.7 611.7,81.6 611.2,86.4 610.7,91.3 610.3,96.2 609.8,101.1 609.3,106 608.9,110.9 608.4,115.8 607.9,120.7" fill="none" stroke="#5a1a1a" stroke-width="0.5" opacity="0.6"/>
<polyline points="627.7,23.8 627.3,28.7 626.8,33.5 626.3,38.4 625.9,43.2 625.4,48.1 624.9,52.9 624.5,57.7 624,62.6 623.5,67.4 623,72.3 622.6,77.1 622.1,82 621.6,86.8 621.2,91.6 620.7,96.5 620.2,101.3 619.8,106.2 619.3,111 618.8,115.9 618.4,120.7" fill="none" stroke="#5a1a1a" stroke-width="0.5" opacity="0.6"/>
<polyline points="638.1,24.7 637.7,29.5 637.2,34.3 636.7,39.1 636.3,43.9 635.8,48.7 635.3,53.5 634.9,58.3 634.4,63.1 633.9,67.9 633.5,72.7 633,77.5 632.5,82.3 632.1,87.1 631.6,91.9 631.1,96.7 630.7,101.5 630.2,106.3 629.7,111.1 629.3,115.9 628.8,120.7" fill="none" stroke="#5a1a1a" stroke-width="0.5" opacity="0.6"/>
<polyline points="648.6,25.5 648.1,30.3 647.6,35 647.2,39.8 646.7,44.6 646.2,49.3 645.8,54.1 645.3,58.8 644.8,63.6 644.4,68.4 643.9,73.1 643.4,77.9 643,82.6 642.5,87.4 642,92.1 641.6,96.9 641.1,101.7 640.6,106.4 640.2,111.2 639.7,115.9 639.2,120.7" fill="none" stroke="#5a1a1a" stroke-width="0.5" opacity="0.6"/>
<polyline points="659,26.2 658.5,30.9 658.1,35.6 657.6,40.4 657.1,45.1 656.7,49.8 656.2,54.5 655.7,59.3 655.3,64 654.8,68.7 654.3,73.4 653.9,78.2 653.4,82.9 652.9,87.6 652.5,92.3 652,97.1 651.5,101.8 651.1,106.5 650.6,111.2 650.1,116 649.7,120.7" fill="none" stroke="#5a1a1a" stroke-width="0.5" opacity="0.6"/>
<polyline points="669.4,26.7 668.9,31.4 668.5,36.1 668,40.8 667.5,45.5 667.1,50.2 666.6,54.9 666.1,59.6 665.7,64.3 665.2,69 664.8,73.7 664.3,78.4 663.8,83.1 663.4,87.8 662.9,92.5 662.4,97.2 662,101.9 661.5,106.6 661,111.3 660.6,116 660.1,120.7" fill="none" stroke="#5a1a1a" stroke-width="0.5" opacity="0.6"/>
<polyline points="679.8,27.2 679.4,31.9 678.9,36.5 678.4,41.2 678,45.9 677.5,50.6 677,55.2 676.6,59.9 676.1,64.6 675.6,69.3 675.2,73.9 674.7,78.6 674.2,83.3 673.8,88 673.3,92.6 672.9,97.3 672.4,102 671.9,106.7 671.5,111.3 671,116 670.5,120.7" fill="none" stroke="#5a1a1a" stroke-width="0.5" opacity="0.6"/>
<polyline points="690.2,27.5 689.8,32.2 689.3,36.8 688.8,41.5 688.4,46.1 687.9,50.8 687.5,55.5 687,60.1 686.5,64.8 686.1,69.4 685.6,74.1 685.1,78.8 684.7,83.4 684.2,88.1 683.7,92.7 683.3,97.4 682.8,102.1 682.4,106.7 681.9,111.4 681.4,116 681,120.7" fill="none" stroke="#5a1a1a" stroke-width="0.5" opacity="0.6"/>
<polyline points="700.6,27.7 700.2,32.4 699.7,37 699.3,41.6 698.8,46.3 698.3,51 697.9,55.6 697.4,60.2 696.9,64.9 696.5,69.5 696,74.2 695.6,78.9 695.1,83.5 694.6,88.2 694.2,92.8 693.7,97.5 693.2,102.1 692.8,106.8 692.3,111.4 691.9,116 691.4,120.7" fill="none" stroke="#5a1a1a" stroke-width="0.5" opacity="0.6"/>
<polyline points="711.1,27.8 710.6,32.4 710.1,37.1 709.7,41.7 709.2,46.4 708.8,51 708.3,55.7 707.8,60.3 707.4,65 706.9,69.6 706.4,74.2 706,78.9 705.5,83.5 705.1,88.2 704.6,92.8 704.1,97.5 703.7,102.1 703.2,106.8 702.8,111.4 702.3,116.1 701.8,120.7" fill="none" stroke="#5a1a1a" stroke-width="0.5" opacity="0.6"/>
<polyline points="721.5,27.8 721,32.4 720.6,37.1 720.1,41.7 719.6,46.3 719.2,51 718.7,55.6 718.3,60.3 717.8,64.9 717.3,69.6 716.9,74.2 716.4,78.9 716,83.5 715.5,88.2 715,92.8 714.6,97.5 714.1,102.1 713.6,106.8 713.2,111.4 712.7,116.1 712.3,120.7" fill="none" stroke="#5a1a1a" stroke-width="0.5" opacity="0.6"/>
<polyline points="731.9,27.6 731.4,32.3 731,36.9 730.5,41.6 730.1,46.2 729.6,50.9 729.1,55.5 728.7,60.2 728.2,64.8 727.8,69.5 727.3,74.2 726.8,78.8 726.4,83.5 725.9,88.1 725.5,92.8 725,97.4 724.5,102.1 724.1,106.7 723.6,111.4 723.2,116 722.7,120.7" fill="none" stroke="#5a1a1a" stroke-width="0.5" opacity="0.6"/>
<polyline points="742.3,27.3 741.9,32 741.4,36.7 740.9,41.4 740.5,46 740,50.7 739.6,55.4 739.1,60 738.6,64.7 738.2,69.4 737.7,74 737.3,78.7 736.8,83.4 736.3,88 735.9,92.7 735.4,97.4 735,102 734.5,106.7 734.1,111.4 733.6,116 733.1,120.7" fill="none" stroke="#5a1a1a" stroke-width="0.5" opacity="0.6"/>
<polyline points="752.7,27 752.3,31.7 751.8,36.3 751.4,41 750.9,45.7 750.4,50.4 750,55.1 749.5,59.8 749.1,64.5 748.6,69.1 748.1,73.8 747.7,78.5 747.2,83.2 746.8,87.9 746.3,92.6 745.9,97.3 745.4,102 744.9,106.6 744.5,111.3 744,116 743.6,120.7" fill="none" stroke="#5a1a1a" stroke-width="0.5" opacity="0.6"/>
<polyline points="763.1,26.5 762.7,31.2 762.2,35.9 761.8,40.6 761.3,45.3 760.9,50 760.4,54.7 759.9,59.5 759.5,64.2 759,68.9 758.6,73.6 758.1,78.3 757.7,83 757.2,87.7 756.7,92.4 756.3,97.1 755.8,101.9 755.4,106.6 754.9,111.3 754.5,116 754,120.7" fill="none" stroke="#5a1a1a" stroke-width="0.5" opacity="0.6"/>
<polyline points="773.6,25.9 773.1,30.6 772.7,35.4 772.2,40.1 771.7,44.8 771.3,49.6 770.8,54.3 770.4,59.1 769.9,63.8 769.5,68.5 769,73.3 768.5,78 768.1,82.8 767.6,87.5 767.2,92.3 766.7,97 766.3,101.7 765.8,106.5 765.3,111.2 764.9,116 764.4,120.7" fill="none" stroke="#5a1a1a" stroke-width="0.5" opacity="0.6"/>
<polyline points="784,25.1 783.5,29.9 783.1,34.7 782.6,39.5 782.2,44.3 781.7,49 781.2,53.8 780.8,58.6 780.3,63.4 779.9,68.1 779.4,72.9 779,77.7 778.5,82.5 778.1,87.3 777.6,92 777.1,96.8 776.7,101.6 776.2,106.4 775.8,111.1 775.3,115.9 774.9,120.7" fill="none" stroke="#5a1a1a" stroke-width="0.5" opacity="0.6"/>
<polyline points="606.1,29.9 611.3,30.5 616.5,31 621.7,31.5 627,31.9 632.2,32.3 637.4,32.7 642.6,33.1 647.8,33.5 653,33.8 658.2,34.1 663.4,34.3 668.6,34.6 673.8,34.8 679,35 684.3,35.1 689.5,35.3 694.7,35.4 699.9,35.5 705.1,35.5 710.3,35.5 715.5,35.5 720.7,35.5 725.9,35.4 731.1,35.4 736.3,35.3 741.6,35.1 746.8,35 752,34.8 757.2,34.6 762.4,34.3 767.6,34.1 772.8,33.8 778,33.5 783.2,33.1 788.4,32.7 793.6,32.3" fill="none" stroke="#5a1a1a" stroke-width="0.5" opacity="0.6"/>
<polyline points="605.3,38.2 610.5,38.7 615.8,39.1 621,39.6 626.2,40 631.4,40.4 636.6,40.7 641.8,41.1 647,41.4 652.2,41.7 657.4,41.9 662.6,42.2 667.9,42.4 673.1,42.6 678.3,42.8 683.5,42.9 688.7,43 693.9,43.1 699.1,43.2 704.3,43.2 709.5,43.3 714.7,43.3 719.9,43.2 725.2,43.2 730.4,43.1 735.6,43 740.8,42.9 746,42.8 751.2,42.6 756.4,42.4 761.6,42.2 766.8,41.9 772,41.7 777.3,41.4 782.5,41.1 787.7,40.7 792.9,40.4" fill="none" stroke="#5a1a1a" stroke-width="0.5" opacity="0.6"/>
<polyline points="604.5,46.5 609.8,46.9 615,47.3 620.2,47.7 625.4,48.1 630.6,48.4 635.8,48.7 641,49 646.2,49.3 651.4,49.6 656.7,49.8 661.9,50 667.1,50.2 672.3,50.4 677.5,50.6 682.7,50.7 687.9,50.8 693.1,50.9 698.3,51 703.5,51 708.8,51 714,51 719.2,51 724.4,50.9 729.6,50.9 734.8,50.8 740,50.7 745.2,50.6 750.4,50.4 755.7,50.2 760.9,50 766.1,49.8 771.3,49.6 776.5,49.3 781.7,49 786.9,48.7 792.1,48.4" fill="none" stroke="#5a1a1a" stroke-width="0.5" opacity="0.6"/>
<polyline points="603.8,54.7 609,55.1 614.2,55.5 619.4,55.8 624.6,56.1 629.8,56.4 635,56.7 640.2,57 645.5,57.3 650.7,57.5 655.9,57.7 661.1,57.9 666.3,58.1 671.5,58.2 676.7,58.4 681.9,58.5 687.1,58.6 692.4,58.6 697.6,58.7 702.8,58.7 708,58.8 713.2,58.8 718.4,58.7 723.6,58.7 728.8,58.6 734,58.6 739.3,58.5 744.5,58.3 749.7,58.2 754.9,58.1 760.1,57.9 765.3,57.7 770.5,57.5 775.7,57.2 780.9,57 786.2,56.7 791.4,56.4" fill="none" stroke="#5a1a1a" stroke-width="0.5" opacity="0.6"/>
<polyline points="603,63 608.2,63.3 613.4,63.6 618.6,63.9 623.8,64.2 629,64.5 634.3,64.7 639.5,65 644.7,65.2 649.9,65.4 655.1,65.6 660.3,65.7 665.5,65.9 670.7,66 675.9,66.1 681.2,66.2 686.4,66.3 691.6,66.4 696.8,66.5 702,66.5 707.2,66.5 712.4,66.5 717.6,66.5 722.9,66.4 728.1,66.4 733.3,66.3 738.5,66.2 743.7,66.1 748.9,66 754.1,65.9 759.3,65.7 764.5,65.6 769.8,65.4 775,65.2 780.2,65 785.4,64.7 790.6,64.5" fill="none" stroke="#5a1a1a" stroke-width="0.5" opacity="0.6"/>
<polyline points="602.2,71.2 607.4,71.5 612.6,71.8 617.8,72 623,72.3 628.3,72.5 633.5,72.7 638.7,72.9 643.9,73.1 649.1,73.3 654.3,73.4 659.5,73.6 664.8,73.7 670,73.8 675.2,73.9 680.4,74 685.6,74.1 690.8,74.2 696,74.2 701.2,74.2 706.4,74.2 711.7,74.2 716.9,74.2 722.1,74.2 727.3,74.2 732.5,74.1 737.7,74 742.9,73.9 748.1,73.8 753.4,73.7 758.6,73.6 763.8,73.4 769,73.3 774.2,73.1 779.4,72.9 784.6,72.7 789.8,72.5" fill="none" stroke="#5a1a1a" stroke-width="0.5" opacity="0.6"/>
<polyline points="601.4,79.5 606.6,79.7 611.8,79.9 617.1,80.1 622.3,80.3 627.5,80.5 632.7,80.7 637.9,80.9 643.1,81 648.3,81.2 653.5,81.3 658.8,81.4 664,81.6 669.2,81.6 674.4,81.7 679.6,81.8 684.8,81.9 690,81.9 695.3,82 700.5,82 705.7,82 710.9,82 716.1,82 721.3,81.9 726.5,81.9 731.7,81.9 737,81.8 742.2,81.7 747.4,81.6 752.6,81.5 757.8,81.4 763,81.3 768.2,81.2 773.5,81 778.7,80.9 783.9,80.7 789.1,80.5" fill="none" stroke="#5a1a1a" stroke-width="0.5" opacity="0.6"/>
<polyline points="600.6,87.7 605.8,87.9 611.1,88.1 616.3,88.3 621.5,88.4 626.7,88.6 631.9,88.7 637.1,88.9 642.3,89 647.6,89.1 652.8,89.2 658,89.3 663.2,89.4 668.4,89.5 673.6,89.5 678.8,89.6 684.1,89.6 689.3,89.7 694.5,89.7 699.7,89.7 704.9,89.7 710.1,89.7 715.3,89.7 720.6,89.7 725.8,89.7 731,89.6 736.2,89.6 741.4,89.5 746.6,89.5 751.8,89.4 757,89.3 762.3,89.2 767.5,89.1 772.7,89 777.9,88.8 783.1,88.7 788.3,88.6" fill="none" stroke="#5a1a1a" stroke-width="0.5" opacity="0.6"/>
<polyline points="599.9,96 605.1,96.1 610.3,96.2 615.5,96.4 620.7,96.5 625.9,96.6 631.1,96.7 636.4,96.8 641.6,96.9 646.8,97 652,97.1 657.2,97.1 662.4,97.2 667.6,97.3 672.9,97.3 678.1,97.4 683.3,97.4 688.5,97.4 693.7,97.5 698.9,97.5 704.1,97.5 709.4,97.5 714.6,97.5 719.8,97.4 725,97.4 730.2,97.4 735.4,97.4 740.6,97.3 745.9,97.3 751.1,97.2 756.3,97.1 761.5,97.1 766.7,97 771.9,96.9 777.1,96.8 782.4,96.7 787.6,96.6" fill="none" stroke="#5a1a1a" stroke-width="0.5" opacity="0.6"/>
<polyline points="599.1,104.2 604.3,104.3 609.5,104.4 614.7,104.5 619.9,104.6 625.1,104.6 630.4,104.7 635.6,104.8 640.8,104.8 646,104.9 651.2,104.9 656.4,105 661.6,105 666.9,105.1 672.1,105.1 677.3,105.1 682.5,105.2 687.7,105.2 692.9,105.2 698.2,105.2 703.4,105.2 708.6,105.2 713.8,105.2 719,105.2 724.2,105.2 729.4,105.2 734.7,105.1 739.9,105.1 745.1,105.1 750.3,105 755.5,105 760.7,104.9 766,104.9 771.2,104.8 776.4,104.8 781.6,104.7 786.8,104.6" fill="none" stroke="#5a1a1a" stroke-width="0.5" opacity="0.6"/>
<polyline points="598.3,112.5 603.5,112.5 608.7,112.5 613.9,112.6 619.1,112.6 624.4,112.7 629.6,112.7 634.8,112.7 640,112.8 645.2,112.8 650.4,112.8 655.7,112.8 660.9,112.9 666.1,112.9 671.3,112.9 676.5,112.9 681.7,112.9 687,112.9 692.2,113 697.4,113 702.6,113 707.8,113 713,113 718.3,112.9 723.5,112.9 728.7,112.9 733.9,112.9 739.1,112.9 744.3,112.9 749.5,112.9 754.8,112.8 760,112.8 765.2,112.8 770.4,112.8 775.6,112.7 780.8,112.7 786.1,112.7" fill="none" stroke="#5a1a1a" stroke-width="0.5" opacity="0.6"/>
<path d="M615.9,31h1.2M615.2,39.1h1.2M614.4,47.3h1.2M613.6,55.5h1.2M612.8,63.6h1.2M612,71.8h1.2M611.2,79.9h1.2M610.5,88.1h1.2M609.7,96.2h1.2M608.9,104.4h1.2M608.1,112.5h1.2M626.4,31.9h1.2M625.6,40h1.2M624.8,48.1h1.2M624,56.1h1.2M623.2,64.2h1.2M622.4,72.3h1.2M621.7,80.3h1.2M620.9,88.4h1.2M620.1,96.5h1.2M619.3,104.6h1.2M618.5,112.6h1.2M636.8,32.7h1.2M636,40.7h1.2M635.2,48.7h1.2M634.4,56.7h1.2M633.7,64.7h1.2M632.9,72.7h1.2M632.1,80.7h1.2M631.3,88.7h1.2M630.5,96.7h1.2M629.8,104.7h1.2M629,112.7h1.2M647.2,33.5h1.2M646.4,41.4h1.2M645.6,49.3h1.2M644.9,57.3h1.2M644.1,65.2h1.2M643.3,73.1h1.2M642.5,81h1.2M641.7,89h1.2M641,96.9h1.2M640.2,104.8h1.2M639.4,112.8h1.2M657.6,34.1h1.2M656.8,41.9h1.2M656.1,49.8h1.2M655.3,57.7h1.2M654.5,65.6h1.2M653.7,73.4h1.2M652.9,81.3h1.2M652.2,89.2h1.2M651.4,97.1h1.2M650.6,104.9h1.2M649.8,112.8h1.2M668,34.6h1.2M667.2,42.4h1.2M666.5,50.2h1.2M665.7,58.1h1.2M664.9,65.9h1.2M664.1,73.7h1.2M663.4,81.6h1.2M662.6,89.4h1.2M661.8,97.2h1.2M661,105h1.2M660.3,112.9h1.2M678.4,35h1.2M677.7,42.8h1.2M676.9,50.6h1.2M676.1,58.4h1.2M675.3,66.1h1.2M674.6,73.9h1.2M673.8,81.7h1.2M673,89.5h1.2M672.3,97.3h1.2M671.5,105.1h1.2M670.7,112.9h1.2M688.9,35.3h1.2M688.1,43h1.2M687.3,50.8h1.2M686.5,58.6h1.2M685.8,66.3h1.2M685,74.1h1.2M684.2,81.9h1.2M683.5,89.6h1.2M682.7,97.4h1.2M681.9,105.2h1.2M681.1,112.9h1.2M699.3,35.5h1.2M698.5,43.2h1.2M697.7,51h1.2M697,58.7h1.2M696.2,66.5h1.2M695.4,74.2h1.2M694.7,82h1.2M693.9,89.7h1.2M693.1,97.5h1.2M692.3,105.2h1.2M691.6,113h1.2M709.7,35.5h1.2M708.9,43.3h1.2M708.2,51h1.2M707.4,58.8h1.2M706.6,66.5h1.2M705.8,74.2h1.2M705.1,82h1.2M704.3,89.7h1.2M703.5,97.5h1.2M702.8,105.2h1.2M702,113h1.2M720.1,35.5h1.2M719.3,43.2h1.2M718.6,51h1.2M717.8,58.7h1.2M717,66.5h1.2M716.3,74.2h1.2M715.5,82h1.2M714.7,89.7h1.2M714,97.5h1.2M713.2,105.2h1.2M712.4,113h1.2M730.5,35.4h1.2M729.8,43.1h1.2M729,50.9h1.2M728.2,58.6h1.2M727.5,66.4h1.2M726.7,74.2h1.2M725.9,81.9h1.2M725.2,89.7h1.2M724.4,97.4h1.2M723.6,105.2h1.2M722.9,112.9h1.2M741,35.1h1.2M740.2,42.9h1.2M739.4,50.7h1.2M738.7,58.5h1.2M737.9,66.2h1.2M737.1,74h1.2M736.4,81.8h1.2M735.6,89.6h1.2M734.8,97.4h1.2M734.1,105.1h1.2M733.3,112.9h1.2M751.4,34.8h1.2M750.6,42.6h1.2M749.8,50.4h1.2M749.1,58.2h1.2M748.3,66h1.2M747.5,73.8h1.2M746.8,81.6h1.2M746,89.5h1.2M745.3,97.3h1.2M744.5,105.1h1.2M743.7,112.9h1.2M761.8,34.3h1.2M761,42.2h1.2M760.3,50h1.2M759.5,57.9h1.2M758.7,65.7h1.2M758,73.6h1.2M757.2,81.4h1.2M756.4,89.3h1.2M755.7,97.1h1.2M754.9,105h1.2M754.2,112.8h1.2M772.2,33.8h1.2M771.4,41.7h1.2M770.7,49.6h1.2M769.9,57.5h1.2M769.2,65.4h1.2M768.4,73.3h1.2M767.6,81.2h1.2M766.9,89.1h1.2M766.1,97h1.2M765.4,104.9h1.2M764.6,112.8h1.2M782.6,33.1h1.2M781.9,41.1h1.2M781.1,49h1.2M780.3,57h1.2M779.6,65h1.2M778.8,72.9h1.2M778.1,80.9h1.2M777.3,88.8h1.2M776.5,96.8h1.2M775.8,104.8h1.2M775,112.7h1.2" stroke="#e02828" stroke-width="1.1" fill="none" opacity="0.8"/>
<rect x="743" y="120.7" width="52" height="6.2" fill="none" stroke="#3aa83a" stroke-width="0.9"/>
<path d="M753,120.7v6.2M755.2,120.7v6.2M764.7,120.7v6.2M766.9,120.7v6.2M776.4,120.7v6.2M778.6,120.7v6.2M788.1,120.7v6.2M790.3,120.7v6.2" stroke="#3aa83a" stroke-width="0.8" fill="none"/>
<polyline points="606.7,22.4 593.8,50 578.2,73.6 561.6,92.4" fill="none" stroke="#ff5020" stroke-width="1.1" />
<polyline points="794.4,24.3 772.3,51.7 754,76.4 741,96" fill="none" stroke="#ff5020" stroke-width="1.1" />
<polyline points="593.8,50 680,51.5 772.3,51.7" fill="none" stroke="#f07020" stroke-width="1.1" />
<polyline points="578.2,73.6 665,76 754,76.4" fill="none" stroke="#f07020" stroke-width="1.1" />
<polyline points="597.5,50 593.8,95.2" fill="none" stroke="#a0e040" stroke-width="1.1" />
<polyline points="581,73.6 580,92.4" fill="none" stroke="#f0c020" stroke-width="1.1" />
<polyline points="770.3,52.4 766,95 761.2,138.3 759,145" fill="none" stroke="#40c0e0" stroke-width="1.1" />
<polyline points="754,78 750,130 748,168" fill="none" stroke="#2080e0" stroke-width="1.1" />
<rect x="751.3" y="145" width="19" height="6.5" fill="none" stroke="#3aa83a" stroke-width="0.8"/>
<rect x="737.6" y="168.7" width="16" height="6.7" fill="none" stroke="#3aa83a" stroke-width="0.8"/>
<polygon points="557.7,92.5 562.9,93 568.1,93.5 573.3,94 578.4,94.5 583.6,94.9 588.8,95.3 594,95.7 599.2,96 604.4,96.3 609.6,96.6 614.7,96.9 619.9,97.1 625.1,97.3 630.3,97.5 635.5,97.6 640.7,97.7 645.9,97.8 651,97.9 656.2,97.9 661.4,97.9 666.6,97.9 671.8,97.9 677,97.8 682.2,97.7 687.4,97.6 692.5,97.4 697.7,97.2 702.9,97 708.1,96.8 713.3,96.5 718.5,96.2 723.7,95.9 728.8,95.5 734,95.1 739.2,94.7 744.4,94.3 735.8,190.7 730.6,190.7 725.4,190.7 720.2,190.7 715,190.7 709.8,190.7 704.5,190.7 699.3,190.7 694.1,190.7 688.9,190.7 683.7,190.7 678.5,190.7 673.3,190.7 668.1,190.7 662.9,190.7 657.7,190.7 652.5,190.7 647.3,190.7 642,190.7 636.8,190.7 631.6,190.7 626.4,190.7 621.2,190.7 616,190.7 610.8,190.7 605.6,190.7 600.4,190.7 595.2,190.7 590,190.7 584.8,190.7 579.5,190.7 574.3,190.7 569.1,190.7 563.9,190.7 558.7,190.7 553.5,190.7 548.3,190.7" fill="#c000c8" stroke="none" stroke-width="1" />
<polygon points="557.2,97.9 562.5,97.5 567.8,96 573.2,94.2 578.4,94.5 583.6,94.9 588.8,95.3 594,95.7 599.2,96 604.4,96.3 609.6,96.6 614.7,96.9 619.9,97.1 625.1,97.3 630.3,97.5 635.5,97.6 640.7,97.7 645.9,97.8 651,97.9 656.2,97.9 661.4,97.9 666.6,97.9 671.8,97.9 677,97.8 682.2,97.7 687.4,97.6 692.5,97.4 697.7,97.2 702.9,97 708.1,96.8 713.3,96.5 718.5,96.2 723.7,95.9 728.8,95.7 733.8,97.6 738.8,99.2 743.9,99.6 735.8,190.7 730.6,190.7 725.4,190.7 720.2,190.7 715,190.7 709.8,190.7 704.5,190.7 699.3,190.7 694.1,190.7 688.9,190.7 683.7,190.7 678.5,190.7 673.3,190.7 668.1,190.7 662.9,190.7 657.7,190.7 652.5,190.7 647.3,190.7 642,190.7 636.8,190.7 631.6,190.7 626.4,190.7 621.2,190.7 616,190.7 610.8,190.7 605.6,190.7 600.4,190.7 595.2,190.7 590,190.7 584.8,190.7 579.5,190.7 574.3,190.7 569.1,190.7 563.9,190.7 558.7,190.7 553.5,190.7 548.3,190.7" fill="#ff0000" stroke="none" stroke-width="1" />
<polygon points="556.7,102.7 562,102.8 567.2,102.1 572.6,101.2 577.9,100.3 583.2,99.8 588.4,99.9 593.6,100.2 598.7,100.6 603.9,100.9 609.1,101.1 614.3,101.4 619.5,101.6 624.7,101.8 629.9,102 635.1,102.1 640.2,102.2 645.4,102.3 650.6,102.4 655.8,102.4 661,102.4 666.2,102.4 671.4,102.3 676.6,102.3 681.7,102.2 686.9,102 692.1,101.9 697.3,101.7 702.5,101.5 707.7,101.3 712.9,101 718,101 723.1,101.6 728.2,102.6 733.3,103.6 738.4,104.3 743.5,104.3 735.8,190.7 730.6,190.7 725.4,190.7 720.2,190.7 715,190.7 709.8,190.7 704.5,190.7 699.3,190.7 694.1,190.7 688.9,190.7 683.7,190.7 678.5,190.7 673.3,190.7 668.1,190.7 662.9,190.7 657.7,190.7 652.5,190.7 647.3,190.7 642,190.7 636.8,190.7 631.6,190.7 626.4,190.7 621.2,190.7 616,190.7 610.8,190.7 605.6,190.7 600.4,190.7 595.2,190.7 590,190.7 584.8,190.7 579.5,190.7 574.3,190.7 569.1,190.7 563.9,190.7 558.7,190.7 553.5,190.7 548.3,190.7" fill="#ff5000" stroke="none" stroke-width="1" />
<polygon points="556.2,107.8 561.5,107.8 566.8,107.2 572.1,106.3 577.4,105.5 582.7,104.9 587.9,105 593.1,105.4 598.2,105.7 603.4,106 608.6,106.2 613.8,106.4 619,106.6 624.2,106.8 629.4,107 634.6,107.1 639.8,107.2 644.9,107.3 650.1,107.4 655.3,107.4 660.5,107.4 665.7,107.4 670.9,107.3 676.1,107.3 681.3,107.2 686.5,107.1 691.6,106.9 696.8,106.8 702,106.6 707.2,106.4 712.4,106.1 717.6,106.1 722.7,106.7 727.7,107.6 732.8,108.6 737.9,109.3 743.1,109.3 735.8,190.7 730.6,190.7 725.4,190.7 720.2,190.7 715,190.7 709.8,190.7 704.5,190.7 699.3,190.7 694.1,190.7 688.9,190.7 683.7,190.7 678.5,190.7 673.3,190.7 668.1,190.7 662.9,190.7 657.7,190.7 652.5,190.7 647.3,190.7 642,190.7 636.8,190.7 631.6,190.7 626.4,190.7 621.2,190.7 616,190.7 610.8,190.7 605.6,190.7 600.4,190.7 595.2,190.7 590,190.7 584.8,190.7 579.5,190.7 574.3,190.7 569.1,190.7 563.9,190.7 558.7,190.7 553.5,190.7 548.3,190.7" fill="#ffa000" stroke="none" stroke-width="1" />
<polygon points="555.3,118 560.5,117.8 565.8,116.7 571.2,115.1 576.6,113.5 582,111.9 587.3,110.7 592.5,110.6 597.7,111.7 602.8,112.9 607.9,113.6 613.1,113.9 618.3,114.1 623.5,114.3 628.7,114.4 633.8,114.6 639,114.7 644.2,114.7 649.4,114.8 654.6,114.8 659.8,114.8 665,114.8 670.2,114.8 675.4,114.7 680.6,114.6 685.7,114.5 690.9,114.3 696.2,113.7 701.5,112.5 706.7,111.5 711.9,111.8 716.9,112.9 721.9,114.6 726.9,116.3 732,117.9 737,119.1 742.2,119.4 735.8,190.7 730.6,190.7 725.4,190.7 720.2,190.7 715,190.7 709.8,190.7 704.5,190.7 699.3,190.7 694.1,190.7 688.9,190.7 683.7,190.7 678.5,190.7 673.3,190.7 668.1,190.7 662.9,190.7 657.7,190.7 652.5,190.7 647.3,190.7 642,190.7 636.8,190.7 631.6,190.7 626.4,190.7 621.2,190.7 616,190.7 610.8,190.7 605.6,190.7 600.4,190.7 595.2,190.7 590,190.7 584.8,190.7 579.5,190.7 574.3,190.7 569.1,190.7 563.9,190.7 558.7,190.7 553.5,190.7 548.3,190.7" fill="#ffff00" stroke="none" stroke-width="1" />
<polygon points="555.3,118 560.5,117.8 565.8,116.7 571.2,115.2 576.6,113.8 581.9,113.1 587,113.6 592.2,114.1 597.4,114 602.7,113.8 607.9,113.8 613.1,114 618.3,114.1 623.5,114.3 628.7,114.4 633.8,114.6 639,114.7 644.2,114.7 649.4,114.8 654.6,114.8 659.8,114.8 665,114.8 670.2,114.8 675.4,114.7 680.6,114.6 685.7,114.5 690.9,114.4 696.1,114.5 701.2,114.8 706.4,115 711.6,114.6 716.8,114.2 721.9,114.9 726.9,116.3 732,117.9 737,119.1 742.2,119.4 735.8,190.7 730.6,190.7 725.4,190.7 720.2,190.7 715,190.7 709.8,190.7 704.5,190.7 699.3,190.7 694.1,190.7 688.9,190.7 683.7,190.7 678.5,190.7 673.3,190.7 668.1,190.7 662.9,190.7 657.7,190.7 652.5,190.7 647.3,190.7 642,190.7 636.8,190.7 631.6,190.7 626.4,190.7 621.2,190.7 616,190.7 610.8,190.7 605.6,190.7 600.4,190.7 595.2,190.7 590,190.7 584.8,190.7 579.5,190.7 574.3,190.7 569.1,190.7 563.9,190.7 558.7,190.7 553.5,190.7 548.3,190.7" fill="#b0f000" stroke="none" stroke-width="1" />
<polygon points="554.6,125.1 559.8,124.9 565.2,123.8 570.5,122.3 575.9,120.8 581.2,119.9 586.4,119.8 591.6,120.1 596.8,120.3 602,120.6 607.2,120.8 612.4,121 617.6,121.2 622.8,121.3 628,121.4 633.2,121.5 638.4,121.6 643.5,121.7 648.7,121.7 653.9,121.8 659.1,121.8 664.3,121.8 669.5,121.7 674.7,121.7 679.9,121.6 685.1,121.5 690.3,121.4 695.5,121.2 700.7,121.1 705.8,120.9 711,120.7 716.2,120.8 721.3,121.8 726.3,123.3 731.3,124.9 736.4,126 741.5,126.3 735.8,190.7 730.6,190.7 725.4,190.7 720.2,190.7 715,190.7 709.8,190.7 704.5,190.7 699.3,190.7 694.1,190.7 688.9,190.7 683.7,190.7 678.5,190.7 673.3,190.7 668.1,190.7 662.9,190.7 657.7,190.7 652.5,190.7 647.3,190.7 642,190.7 636.8,190.7 631.6,190.7 626.4,190.7 621.2,190.7 616,190.7 610.8,190.7 605.6,190.7 600.4,190.7 595.2,190.7 590,190.7 584.8,190.7 579.5,190.7 574.3,190.7 569.1,190.7 563.9,190.7 558.7,190.7 553.5,190.7 548.3,190.7" fill="#60f000" stroke="none" stroke-width="1" />
<polygon points="553.8,133.3 559,133 564.4,131.9 569.7,130.4 575.1,129 580.4,128 585.6,127.9 590.8,128.2 596,128.4 601.2,128.6 606.4,128.8 611.6,129 616.8,129.1 622,129.2 627.2,129.4 632.4,129.5 637.6,129.5 642.8,129.6 648,129.6 653.2,129.7 658.4,129.7 663.6,129.7 668.7,129.6 673.9,129.6 679.1,129.5 684.3,129.4 689.5,129.3 694.7,129.2 699.9,129.1 705.1,128.9 710.3,128.7 715.5,128.8 720.5,129.9 725.6,131.3 730.6,132.9 735.7,134 740.8,134.3 735.8,190.7 730.6,190.7 725.4,190.7 720.2,190.7 715,190.7 709.8,190.7 704.5,190.7 699.3,190.7 694.1,190.7 688.9,190.7 683.7,190.7 678.5,190.7 673.3,190.7 668.1,190.7 662.9,190.7 657.7,190.7 652.5,190.7 647.3,190.7 642,190.7 636.8,190.7 631.6,190.7 626.4,190.7 621.2,190.7 616,190.7 610.8,190.7 605.6,190.7 600.4,190.7 595.2,190.7 590,190.7 584.8,190.7 579.5,190.7 574.3,190.7 569.1,190.7 563.9,190.7 558.7,190.7 553.5,190.7 548.3,190.7" fill="#20f040" stroke="none" stroke-width="1" />
<polygon points="553,141.4 558.3,141 563.6,139.7 569,138 574.4,136.3 579.7,135.2 585,135.1 590.1,135.3 595.3,135.5 600.5,135.7 605.7,135.8 610.9,136 616.1,136.1 621.3,136.2 626.5,136.4 631.7,136.4 636.9,136.5 642.1,136.6 647.3,136.6 652.5,136.6 657.7,136.6 662.9,136.6 668.1,136.6 673.3,136.5 678.5,136.5 683.7,136.4 688.9,136.3 694.1,136.2 699.3,136.1 704.4,135.9 709.6,135.8 714.8,136 719.9,137.1 724.9,138.8 729.9,140.6 735,141.9 740.1,142.3 735.8,190.7 730.6,190.7 725.4,190.7 720.2,190.7 715,190.7 709.8,190.7 704.5,190.7 699.3,190.7 694.1,190.7 688.9,190.7 683.7,190.7 678.5,190.7 673.3,190.7 668.1,190.7 662.9,190.7 657.7,190.7 652.5,190.7 647.3,190.7 642,190.7 636.8,190.7 631.6,190.7 626.4,190.7 621.2,190.7 616,190.7 610.8,190.7 605.6,190.7 600.4,190.7 595.2,190.7 590,190.7 584.8,190.7 579.5,190.7 574.3,190.7 569.1,190.7 563.9,190.7 558.7,190.7 553.5,190.7 548.3,190.7" fill="#00f880" stroke="none" stroke-width="1" />
<polygon points="552.6,146 557.8,145.7 563.2,144.5 568.5,142.9 573.9,141.3 579.2,140.3 584.5,140.1 589.7,140.3 594.9,140.5 600.1,140.7 605.2,140.8 610.4,141 615.6,141.1 620.8,141.2 626,141.3 631.2,141.4 636.4,141.4 641.6,141.5 646.8,141.5 652,141.5 657.2,141.5 662.4,141.5 667.6,141.5 672.8,141.5 678,141.4 683.2,141.3 688.4,141.3 693.6,141.2 698.8,141 704,140.9 709.2,140.8 714.3,141 719.4,142 724.5,143.6 729.5,145.2 734.6,146.5 739.7,146.8 735.8,190.7 730.6,190.7 725.4,190.7 720.2,190.7 715,190.7 709.8,190.7 704.5,190.7 699.3,190.7 694.1,190.7 688.9,190.7 683.7,190.7 678.5,190.7 673.3,190.7 668.1,190.7 662.9,190.7 657.7,190.7 652.5,190.7 647.3,190.7 642,190.7 636.8,190.7 631.6,190.7 626.4,190.7 621.2,190.7 616,190.7 610.8,190.7 605.6,190.7 600.4,190.7 595.2,190.7 590,190.7 584.8,190.7 579.5,190.7 574.3,190.7 569.1,190.7 563.9,190.7 558.7,190.7 553.5,190.7 548.3,190.7" fill="#18d8b8" stroke="none" stroke-width="1" />
<polygon points="552.2,149.9 557.5,149.6 562.8,148.5 568.1,147 573.5,145.6 578.8,144.6 584,144.5 589.2,144.7 594.4,144.9 599.6,145 604.8,145.2 610,145.3 615.2,145.4 620.4,145.5 625.6,145.6 630.8,145.7 636,145.7 641.2,145.8 646.4,145.8 651.6,145.8 656.8,145.8 662,145.8 667.2,145.8 672.4,145.7 677.6,145.7 682.8,145.6 688,145.5 693.2,145.5 698.4,145.4 703.6,145.2 708.8,145.1 713.9,145.3 719,146.3 724.1,147.7 729.1,149.2 734.2,150.3 739.4,150.7 735.8,190.7 730.6,190.7 725.4,190.7 720.2,190.7 715,190.7 709.8,190.7 704.5,190.7 699.3,190.7 694.1,190.7 688.9,190.7 683.7,190.7 678.5,190.7 673.3,190.7 668.1,190.7 662.9,190.7 657.7,190.7 652.5,190.7 647.3,190.7 642,190.7 636.8,190.7 631.6,190.7 626.4,190.7 621.2,190.7 616,190.7 610.8,190.7 605.6,190.7 600.4,190.7 595.2,190.7 590,190.7 584.8,190.7 579.5,190.7 574.3,190.7 569.1,190.7 563.9,190.7 558.7,190.7 553.5,190.7 548.3,190.7" fill="#00d8f8" stroke="none" stroke-width="1" />
<polygon points="551.8,154.1 557,154.3 562.2,154.7 567.4,155.1 572.5,155.4 577.7,155.7 582.9,155.9 588.1,156 593.3,156.1 598.5,156.3 603.7,156.4 608.9,156.5 614.1,156.5 619.3,156.6 624.5,156.7 629.7,156.7 634.9,156.8 640.1,156.8 645.3,156.8 650.5,156.8 655.7,156.8 660.9,156.8 666.1,156.8 671.3,156.8 676.5,156.8 681.7,156.7 686.9,156.6 692.1,156.6 697.3,156.5 702.5,156.4 707.7,156.3 712.9,156.2 718.2,155.9 723.4,155.6 728.6,155.3 733.8,155 739,154.7 735.8,190.7 730.6,190.7 725.4,190.7 720.2,190.7 715,190.7 709.8,190.7 704.5,190.7 699.3,190.7 694.1,190.7 688.9,190.7 683.7,190.7 678.5,190.7 673.3,190.7 668.1,190.7 662.9,190.7 657.7,190.7 652.5,190.7 647.3,190.7 642,190.7 636.8,190.7 631.6,190.7 626.4,190.7 621.2,190.7 616,190.7 610.8,190.7 605.6,190.7 600.4,190.7 595.2,190.7 590,190.7 584.8,190.7 579.5,190.7 574.3,190.7 569.1,190.7 563.9,190.7 558.7,190.7 553.5,190.7 548.3,190.7" fill="#00a8f8" stroke="none" stroke-width="1" />
<polygon points="550.8,164.3 556,164.3 561.3,164 566.5,163.6 571.8,163.2 577,162.9 582.2,162.9 587.4,163 592.7,163.1 597.9,163.2 603.1,163.3 608.3,163.4 613.5,163.5 618.7,163.5 623.9,163.6 629.1,163.6 634.3,163.6 639.5,163.7 644.7,163.7 649.9,163.7 655.1,163.7 660.3,163.7 665.5,163.7 670.7,163.7 675.9,163.6 681.1,163.6 686.3,163.6 691.5,163.5 696.7,163.4 701.9,163.4 707.1,163.3 712.3,163.3 717.5,163.6 722.6,164 727.8,164.4 732.9,164.7 738.1,164.8 735.8,190.7 730.6,190.7 725.4,190.7 720.2,190.7 715,190.7 709.8,190.7 704.5,190.7 699.3,190.7 694.1,190.7 688.9,190.7 683.7,190.7 678.5,190.7 673.3,190.7 668.1,190.7 662.9,190.7 657.7,190.7 652.5,190.7 647.3,190.7 642,190.7 636.8,190.7 631.6,190.7 626.4,190.7 621.2,190.7 616,190.7 610.8,190.7 605.6,190.7 600.4,190.7 595.2,190.7 590,190.7 584.8,190.7 579.5,190.7 574.3,190.7 569.1,190.7 563.9,190.7 558.7,190.7 553.5,190.7 548.3,190.7" fill="#0050f8" stroke="none" stroke-width="1" />
<polygon points="550,173.4 555.2,173.3 560.4,172.8 565.7,172.2 571,171.7 576.2,171.3 581.4,171.2 586.6,171.3 591.8,171.4 597.1,171.4 602.3,171.5 607.5,171.6 612.7,171.6 617.9,171.6 623.1,171.7 628.3,171.7 633.5,171.7 638.7,171.8 643.9,171.8 649.1,171.8 654.3,171.8 659.5,171.8 664.7,171.8 669.9,171.7 675.1,171.7 680.3,171.7 685.5,171.7 690.7,171.6 695.9,171.6 701.1,171.5 706.3,171.5 711.5,171.5 716.7,171.9 721.8,172.5 727,173.1 732.1,173.6 737.3,173.7 735.8,190.7 730.6,190.7 725.4,190.7 720.2,190.7 715,190.7 709.8,190.7 704.5,190.7 699.3,190.7 694.1,190.7 688.9,190.7 683.7,190.7 678.5,190.7 673.3,190.7 668.1,190.7 662.9,190.7 657.7,190.7 652.5,190.7 647.3,190.7 642,190.7 636.8,190.7 631.6,190.7 626.4,190.7 621.2,190.7 616,190.7 610.8,190.7 605.6,190.7 600.4,190.7 595.2,190.7 590,190.7 584.8,190.7 579.5,190.7 574.3,190.7 569.1,190.7 563.9,190.7 558.7,190.7 553.5,190.7 548.3,190.7" fill="#0000f0" stroke="none" stroke-width="1" />
<polygon points="549,183.5 554.2,183.6 559.4,183.6 564.6,183.5 569.8,183.5 575,183.5 580.2,183.5 585.5,183.6 590.7,183.6 595.9,183.6 601.1,183.6 606.3,183.7 611.5,183.7 616.7,183.7 621.9,183.7 627.1,183.7 632.3,183.7 637.5,183.7 642.7,183.7 647.9,183.7 653.1,183.7 658.3,183.7 663.6,183.7 668.8,183.7 674,183.7 679.2,183.7 684.4,183.7 689.6,183.7 694.8,183.7 700,183.7 705.2,183.6 710.4,183.6 715.6,183.6 720.8,183.7 726,183.7 731.2,183.7 736.4,183.7 735.8,190.7 730.6,190.7 725.4,190.7 720.2,190.7 715,190.7 709.8,190.7 704.5,190.7 699.3,190.7 694.1,190.7 688.9,190.7 683.7,190.7 678.5,190.7 673.3,190.7 668.1,190.7 662.9,190.7 657.7,190.7 652.5,190.7 647.3,190.7 642,190.7 636.8,190.7 631.6,190.7 626.4,190.7 621.2,190.7 616,190.7 610.8,190.7 605.6,190.7 600.4,190.7 595.2,190.7 590,190.7 584.8,190.7 579.5,190.7 574.3,190.7 569.1,190.7 563.9,190.7 558.7,190.7 553.5,190.7 548.3,190.7" fill="#0c1470" stroke="none" stroke-width="1" />
<polyline points="568.1,93.5 567.6,98.4 567.1,103.3 566.7,108.1 566.2,113 565.7,117.8 565.3,122.7 564.8,127.5 564.3,132.4 563.9,137.3 563.4,142.1 562.9,147 562.5,151.8 562,156.7 561.5,161.6 561.1,166.4 560.6,171.3 560.1,176.1 559.7,181 559.2,185.8 558.7,190.7" fill="none" stroke="#5a1a1a" stroke-width="0.5" opacity="0.6"/>
<polyline points="578.4,94.5 578,99.3 577.5,104.1 577,108.9 576.6,113.7 576.1,118.5 575.7,123.3 575.2,128.2 574.7,133 574.3,137.8 573.8,142.6 573.3,147.4 572.9,152.2 572.4,157 571.9,161.8 571.5,166.6 571,171.5 570.5,176.3 570.1,181.1 569.6,185.9 569.1,190.7" fill="none" stroke="#5a1a1a" stroke-width="0.5" opacity="0.6"/>
<polyline points="588.8,95.3 588.4,100.1 587.9,104.8 587.4,109.6 587,114.4 586.5,119.1 586,123.9 585.6,128.7 585.1,133.5 584.6,138.2 584.2,143 583.7,147.8 583.3,152.5 582.8,157.3 582.3,162.1 581.9,166.8 581.4,171.6 580.9,176.4 580.5,181.2 580,185.9 579.5,190.7" fill="none" stroke="#5a1a1a" stroke-width="0.5" opacity="0.6"/>
<polyline points="599.2,96 598.7,100.7 598.3,105.5 597.8,110.2 597.3,114.9 596.9,119.7 596.4,124.4 596,129.2 595.5,133.9 595,138.6 594.6,143.4 594.1,148.1 593.7,152.8 593.2,157.6 592.7,162.3 592.3,167 591.8,171.8 591.3,176.5 590.9,181.2 590.4,186 590,190.7" fill="none" stroke="#5a1a1a" stroke-width="0.5" opacity="0.6"/>
<polyline points="609.6,96.6 609.1,101.3 608.6,106 608.2,110.7 607.7,115.4 607.3,120.1 606.8,124.8 606.3,129.5 605.9,134.2 605.4,139 605,143.7 604.5,148.4 604.1,153.1 603.6,157.8 603.1,162.5 602.7,167.2 602.2,171.9 601.8,176.6 601.3,181.3 600.8,186 600.4,190.7" fill="none" stroke="#5a1a1a" stroke-width="0.5" opacity="0.6"/>
<polyline points="619.9,97.1 619.5,101.8 619,106.5 618.6,111.1 618.1,115.8 617.7,120.5 617.2,125.2 616.7,129.9 616.3,134.5 615.8,139.2 615.4,143.9 614.9,148.6 614.5,153.3 614,157.9 613.5,162.6 613.1,167.3 612.6,172 612.2,176.7 611.7,181.3 611.3,186 610.8,190.7" fill="none" stroke="#5a1a1a" stroke-width="0.5" opacity="0.6"/>
<polyline points="630.3,97.5 629.9,102.1 629.4,106.8 628.9,111.5 628.5,116.1 628,120.8 627.6,125.4 627.1,130.1 626.7,134.8 626.2,139.4 625.8,144.1 625.3,148.8 624.9,153.4 624.4,158.1 623.9,162.7 623.5,167.4 623,172.1 622.6,176.7 622.1,181.4 621.7,186 621.2,190.7" fill="none" stroke="#5a1a1a" stroke-width="0.5" opacity="0.6"/>
<polyline points="640.7,97.7 640.2,102.4 639.8,107 639.3,111.7 638.9,116.3 638.4,121 638,125.6 637.5,130.3 637.1,134.9 636.6,139.6 636.2,144.2 635.7,148.9 635.3,153.5 634.8,158.2 634.3,162.8 633.9,167.5 633.4,172.1 633,176.8 632.5,181.4 632.1,186.1 631.6,190.7" fill="none" stroke="#5a1a1a" stroke-width="0.5" opacity="0.6"/>
<polyline points="651,97.9 650.6,102.5 650.1,107.2 649.7,111.8 649.2,116.5 648.8,121.1 648.3,125.7 647.9,130.4 647.4,135 647,139.7 646.5,144.3 646.1,148.9 645.6,153.6 645.2,158.2 644.8,162.9 644.3,167.5 643.8,172.1 643.4,176.8 642.9,181.4 642.5,186.1 642,190.7" fill="none" stroke="#5a1a1a" stroke-width="0.5" opacity="0.6"/>
<polyline points="661.4,97.9 661,102.6 660.5,107.2 660.1,111.9 659.6,116.5 659.2,121.1 658.7,125.8 658.3,130.4 657.8,135 657.4,139.7 656.9,144.3 656.5,149 656,153.6 655.6,158.2 655.2,162.9 654.7,167.5 654.3,172.1 653.8,176.8 653.4,181.4 652.9,186.1 652.5,190.7" fill="none" stroke="#5a1a1a" stroke-width="0.5" opacity="0.6"/>
<polyline points="671.8,97.9 671.3,102.5 670.9,107.2 670.5,111.8 670,116.4 669.6,121.1 669.1,125.7 668.7,130.4 668.2,135 667.8,139.6 667.3,144.3 666.9,148.9 666.4,153.6 666,158.2 665.6,162.9 665.1,167.5 664.7,172.1 664.2,176.8 663.8,181.4 663.3,186.1 662.9,190.7" fill="none" stroke="#5a1a1a" stroke-width="0.5" opacity="0.6"/>
<polyline points="682.2,97.7 681.7,102.4 681.3,107 680.8,111.7 680.4,116.3 679.9,121 679.5,125.6 679.1,130.2 678.6,134.9 678.2,139.6 677.7,144.2 677.3,148.8 676.8,153.5 676.4,158.2 676,162.8 675.5,167.4 675.1,172.1 674.6,176.8 674.2,181.4 673.7,186 673.3,190.7" fill="none" stroke="#5a1a1a" stroke-width="0.5" opacity="0.6"/>
<polyline points="692.5,97.4 692.1,102.1 691.7,106.7 691.2,111.4 690.8,116.1 690.3,120.7 689.9,125.4 689.5,130.1 689,134.7 688.6,139.4 688.1,144.1 687.7,148.7 687.2,153.4 686.8,158 686.4,162.7 685.9,167.4 685.5,172 685,176.7 684.6,181.4 684.2,186 683.7,190.7" fill="none" stroke="#5a1a1a" stroke-width="0.5" opacity="0.6"/>
<polyline points="702.9,97 702.5,101.7 702,106.4 701.6,111.1 701.2,115.7 700.7,120.4 700.3,125.1 699.8,129.8 699.4,134.5 699,139.2 698.5,143.9 698.1,148.5 697.6,153.2 697.2,157.9 696.8,162.6 696.3,167.3 695.9,172 695.4,176.6 695,181.3 694.6,186 694.1,190.7" fill="none" stroke="#5a1a1a" stroke-width="0.5" opacity="0.6"/>
<polyline points="713.3,96.5 712.8,101.2 712.4,105.9 712,110.6 711.5,115.3 711.1,120 710.7,124.8 710.2,129.5 709.8,134.2 709.4,138.9 708.9,143.6 708.5,148.3 708,153 707.6,157.7 707.2,162.4 706.7,167.1 706.3,171.9 705.9,176.6 705.4,181.3 705,186 704.5,190.7" fill="none" stroke="#5a1a1a" stroke-width="0.5" opacity="0.6"/>
<polyline points="723.7,95.9 723.2,100.6 722.8,105.4 722.4,110.1 721.9,114.8 721.5,119.6 721,124.3 720.6,129.1 720.2,133.8 719.7,138.5 719.3,143.3 718.9,148 718.4,152.8 718,157.5 717.6,162.3 717.1,167 716.7,171.7 716.3,176.5 715.8,181.2 715.4,186 715,190.7" fill="none" stroke="#5a1a1a" stroke-width="0.5" opacity="0.6"/>
<polyline points="734,95.1 733.6,99.9 733.2,104.7 732.7,109.5 732.3,114.3 731.9,119 731.4,123.8 731,128.6 730.6,133.4 730.1,138.1 729.7,142.9 729.3,147.7 728.8,152.5 728.4,157.3 728,162 727.5,166.8 727.1,171.6 726.7,176.4 726.2,181.1 725.8,185.9 725.4,190.7" fill="none" stroke="#5a1a1a" stroke-width="0.5" opacity="0.6"/>
<polyline points="556.9,100.7 562.1,101.2 567.3,101.6 572.5,102.1 577.7,102.5 582.9,102.9 588,103.2 593.2,103.6 598.4,103.9 603.6,104.2 608.8,104.5 614,104.7 619.2,104.9 624.4,105.1 629.5,105.2 634.7,105.4 639.9,105.5 645.1,105.6 650.3,105.6 655.5,105.7 660.7,105.7 665.9,105.7 671.1,105.6 676.2,105.5 681.4,105.5 686.6,105.3 691.8,105.2 697,105 702.2,104.8 707.4,104.6 712.6,104.3 717.7,104.1 722.9,103.8 728.1,103.5 733.3,103.1 738.5,102.7 743.7,102.3" fill="none" stroke="#5a1a1a" stroke-width="0.5" opacity="0.6"/>
<polyline points="556.1,108.9 561.3,109.3 566.5,109.7 571.7,110.1 576.9,110.5 582.1,110.9 587.3,111.2 592.5,111.5 597.7,111.8 602.8,112.1 608,112.3 613.2,112.5 618.4,112.7 623.6,112.9 628.8,113 634,113.1 639.2,113.2 644.4,113.3 649.5,113.4 654.7,113.4 659.9,113.4 665.1,113.4 670.3,113.3 675.5,113.3 680.7,113.2 685.9,113.1 691.1,113 696.3,112.8 701.4,112.6 706.6,112.4 711.8,112.2 717,112 722.2,111.7 727.4,111.4 732.6,111.1 737.8,110.7 743,110.4" fill="none" stroke="#5a1a1a" stroke-width="0.5" opacity="0.6"/>
<polyline points="555.4,117 560.5,117.5 565.7,117.8 570.9,118.2 576.1,118.5 581.3,118.9 586.5,119.1 591.7,119.4 596.9,119.7 602.1,119.9 607.3,120.1 612.5,120.3 617.7,120.5 622.8,120.7 628,120.8 633.2,120.9 638.4,121 643.6,121.1 648.8,121.1 654,121.1 659.2,121.1 664.4,121.1 669.6,121.1 674.8,121 679.9,121 685.1,120.9 690.3,120.7 695.5,120.6 700.7,120.4 705.9,120.3 711.1,120 716.3,119.8 721.5,119.6 726.7,119.3 731.9,119 737.1,118.7 742.2,118.4" fill="none" stroke="#5a1a1a" stroke-width="0.5" opacity="0.6"/>
<polyline points="554.6,125.2 559.8,125.6 565,125.9 570.1,126.2 575.3,126.6 580.5,126.8 585.7,127.1 590.9,127.3 596.1,127.6 601.3,127.8 606.5,128 611.7,128.1 616.9,128.3 622.1,128.4 627.3,128.6 632.5,128.7 637.7,128.7 642.9,128.8 648,128.8 653.2,128.9 658.4,128.9 663.6,128.8 668.8,128.8 674,128.8 679.2,128.7 684.4,128.6 689.6,128.5 694.8,128.4 700,128.2 705.2,128.1 710.4,127.9 715.6,127.7 720.8,127.5 726,127.2 731.1,127 736.3,126.7 741.5,126.4" fill="none" stroke="#5a1a1a" stroke-width="0.5" opacity="0.6"/>
<polyline points="553.8,133.4 559,133.7 564.2,134 569.4,134.3 574.6,134.6 579.8,134.8 585,135.1 590.2,135.3 595.3,135.5 600.5,135.6 605.7,135.8 610.9,136 616.1,136.1 621.3,136.2 626.5,136.3 631.7,136.4 636.9,136.5 642.1,136.5 647.3,136.6 652.5,136.6 657.7,136.6 662.9,136.6 668.1,136.6 673.3,136.5 678.5,136.4 683.7,136.4 688.9,136.3 694.1,136.2 699.3,136 704.4,135.9 709.6,135.8 714.8,135.6 720,135.4 725.2,135.2 730.4,135 735.6,134.7 740.8,134.5" fill="none" stroke="#5a1a1a" stroke-width="0.5" opacity="0.6"/>
<polyline points="553,141.6 558.2,141.9 563.4,142.1 568.6,142.4 573.8,142.6 579,142.8 584.2,143 589.4,143.2 594.6,143.4 599.8,143.5 605,143.7 610.2,143.8 615.4,143.9 620.6,144 625.8,144.1 631,144.2 636.2,144.2 641.4,144.3 646.5,144.3 651.7,144.3 656.9,144.3 662.1,144.3 667.3,144.3 672.5,144.3 677.7,144.2 682.9,144.1 688.1,144.1 693.3,144 698.5,143.9 703.7,143.7 708.9,143.6 714.1,143.5 719.3,143.3 724.5,143.1 729.7,142.9 734.9,142.7 740.1,142.5" fill="none" stroke="#5a1a1a" stroke-width="0.5" opacity="0.6"/>
<polyline points="552.2,149.8 557.4,150 562.6,150.2 567.8,150.4 573,150.6 578.2,150.8 583.4,150.9 588.6,151.1 593.8,151.2 599,151.4 604.2,151.5 609.4,151.6 614.6,151.7 619.8,151.8 625,151.9 630.2,151.9 635.4,152 640.6,152 645.8,152 651,152 656.2,152.1 661.4,152 666.6,152 671.8,152 677,151.9 682.2,151.9 687.4,151.8 692.6,151.8 697.8,151.7 703,151.6 708.2,151.4 713.4,151.3 718.6,151.2 723.8,151 729,150.9 734.2,150.7 739.4,150.5" fill="none" stroke="#5a1a1a" stroke-width="0.5" opacity="0.6"/>
<polyline points="551.4,158 556.6,158.1 561.8,158.3 567,158.5 572.2,158.6 577.4,158.8 582.6,158.9 587.8,159 593,159.1 598.2,159.2 603.4,159.3 608.6,159.4 613.8,159.5 619,159.6 624.2,159.6 629.4,159.7 634.6,159.7 639.8,159.7 645,159.8 650.3,159.8 655.5,159.8 660.7,159.8 665.9,159.8 671.1,159.7 676.3,159.7 681.5,159.7 686.7,159.6 691.9,159.5 697.1,159.5 702.3,159.4 707.5,159.3 712.7,159.2 717.9,159.1 723.1,159 728.3,158.8 733.5,158.7 738.7,158.6" fill="none" stroke="#5a1a1a" stroke-width="0.5" opacity="0.6"/>
<polyline points="550.6,166.1 555.9,166.3 561.1,166.4 566.3,166.5 571.5,166.6 576.7,166.8 581.9,166.8 587.1,166.9 592.3,167 597.5,167.1 602.7,167.2 607.9,167.2 613.1,167.3 618.3,167.4 623.5,167.4 628.7,167.4 633.9,167.5 639.1,167.5 644.3,167.5 649.5,167.5 654.7,167.5 659.9,167.5 665.1,167.5 670.3,167.5 675.5,167.4 680.7,167.4 685.9,167.4 691.1,167.3 696.3,167.3 701.5,167.2 706.7,167.1 711.9,167.1 717.1,167 722.3,166.9 727.5,166.8 732.7,166.7 737.9,166.6" fill="none" stroke="#5a1a1a" stroke-width="0.5" opacity="0.6"/>
<polyline points="549.9,174.3 555.1,174.4 560.3,174.5 565.5,174.6 570.7,174.7 575.9,174.7 581.1,174.8 586.3,174.9 591.5,174.9 596.7,175 601.9,175 607.1,175.1 612.3,175.1 617.5,175.1 622.7,175.2 627.9,175.2 633.1,175.2 638.3,175.2 643.5,175.2 648.8,175.2 654,175.2 659.2,175.2 664.4,175.2 669.6,175.2 674.8,175.2 680,175.2 685.2,175.2 690.4,175.1 695.6,175.1 700.8,175 706,175 711.2,175 716.4,174.9 721.6,174.8 726.8,174.8 732,174.7 737.2,174.6" fill="none" stroke="#5a1a1a" stroke-width="0.5" opacity="0.6"/>
<polyline points="549.1,182.5 554.3,182.6 559.5,182.6 564.7,182.6 569.9,182.7 575.1,182.7 580.3,182.8 585.5,182.8 590.7,182.8 595.9,182.8 601.1,182.9 606.4,182.9 611.6,182.9 616.8,182.9 622,182.9 627.2,182.9 632.4,183 637.6,183 642.8,183 648,183 653.2,183 658.4,183 663.6,183 668.8,183 674,182.9 679.2,182.9 684.5,182.9 689.7,182.9 694.9,182.9 700.1,182.9 705.3,182.8 710.5,182.8 715.7,182.8 720.9,182.8 726.1,182.7 731.3,182.7 736.5,182.7" fill="none" stroke="#5a1a1a" stroke-width="0.5" opacity="0.6"/>
<path d="M566.7,101.6h1.2M565.9,109.7h1.2M565.1,117.8h1.2M564.4,125.9h1.2M563.6,134h1.2M562.8,142.1h1.2M562,150.2h1.2M561.2,158.3h1.2M560.5,166.4h1.2M559.7,174.5h1.2M558.9,182.6h1.2M577.1,102.5h1.2M576.3,110.5h1.2M575.5,118.5h1.2M574.7,126.6h1.2M574,134.6h1.2M573.2,142.6h1.2M572.4,150.6h1.2M571.6,158.6h1.2M570.9,166.6h1.2M570.1,174.7h1.2M569.3,182.7h1.2M587.4,103.2h1.2M586.7,111.2h1.2M585.9,119.1h1.2M585.1,127.1h1.2M584.4,135.1h1.2M583.6,143h1.2M582.8,150.9h1.2M582,158.9h1.2M581.3,166.8h1.2M580.5,174.8h1.2M579.7,182.8h1.2M597.8,103.9h1.2M597.1,111.8h1.2M596.3,119.7h1.2M595.5,127.6h1.2M594.7,135.5h1.2M594,143.4h1.2M593.2,151.2h1.2M592.4,159.1h1.2M591.7,167h1.2M590.9,174.9h1.2M590.1,182.8h1.2M608.2,104.5h1.2M607.4,112.3h1.2M606.7,120.1h1.2M605.9,128h1.2M605.1,135.8h1.2M604.4,143.7h1.2M603.6,151.5h1.2M602.8,159.3h1.2M602.1,167.2h1.2M601.3,175h1.2M600.5,182.9h1.2M618.6,104.9h1.2M617.8,112.7h1.2M617.1,120.5h1.2M616.3,128.3h1.2M615.5,136.1h1.2M614.8,143.9h1.2M614,151.7h1.2M613.2,159.5h1.2M612.5,167.3h1.2M611.7,175.1h1.2M611,182.9h1.2M628.9,105.2h1.2M628.2,113h1.2M627.4,120.8h1.2M626.7,128.6h1.2M625.9,136.3h1.2M625.2,144.1h1.2M624.4,151.9h1.2M623.6,159.6h1.2M622.9,167.4h1.2M622.1,175.2h1.2M621.4,182.9h1.2M639.3,105.5h1.2M638.6,113.2h1.2M637.8,121h1.2M637.1,128.7h1.2M636.3,136.5h1.2M635.6,144.2h1.2M634.8,152h1.2M634,159.7h1.2M633.3,167.5h1.2M632.5,175.2h1.2M631.8,183h1.2M649.7,105.6h1.2M648.9,113.4h1.2M648.2,121.1h1.2M647.4,128.8h1.2M646.7,136.6h1.2M645.9,144.3h1.2M645.2,152h1.2M644.4,159.8h1.2M643.7,167.5h1.2M642.9,175.2h1.2M642.2,183h1.2M660.1,105.7h1.2M659.3,113.4h1.2M658.6,121.1h1.2M657.8,128.9h1.2M657.1,136.6h1.2M656.3,144.3h1.2M655.6,152.1h1.2M654.9,159.8h1.2M654.1,167.5h1.2M653.4,175.2h1.2M652.6,183h1.2M670.5,105.6h1.2M669.7,113.3h1.2M669,121.1h1.2M668.2,128.8h1.2M667.5,136.6h1.2M666.7,144.3h1.2M666,152h1.2M665.3,159.8h1.2M664.5,167.5h1.2M663.8,175.2h1.2M663,183h1.2M680.8,105.5h1.2M680.1,113.2h1.2M679.3,121h1.2M678.6,128.7h1.2M677.9,136.4h1.2M677.1,144.2h1.2M676.4,151.9h1.2M675.7,159.7h1.2M674.9,167.4h1.2M674.2,175.2h1.2M673.4,182.9h1.2M691.2,105.2h1.2M690.5,113h1.2M689.7,120.7h1.2M689,128.5h1.2M688.3,136.3h1.2M687.5,144.1h1.2M686.8,151.8h1.2M686.1,159.6h1.2M685.3,167.4h1.2M684.6,175.2h1.2M683.9,182.9h1.2M701.6,104.8h1.2M700.8,112.6h1.2M700.1,120.4h1.2M699.4,128.2h1.2M698.7,136h1.2M697.9,143.9h1.2M697.2,151.7h1.2M696.5,159.5h1.2M695.7,167.3h1.2M695,175.1h1.2M694.3,182.9h1.2M712,104.3h1.2M711.2,112.2h1.2M710.5,120h1.2M709.8,127.9h1.2M709,135.8h1.2M708.3,143.6h1.2M707.6,151.4h1.2M706.9,159.3h1.2M706.1,167.1h1.2M705.4,175h1.2M704.7,182.8h1.2M722.3,103.8h1.2M721.6,111.7h1.2M720.9,119.6h1.2M720.2,127.5h1.2M719.4,135.4h1.2M718.7,143.3h1.2M718,151.2h1.2M717.3,159.1h1.2M716.5,167h1.2M715.8,174.9h1.2M715.1,182.8h1.2M732.7,103.1h1.2M732,111.1h1.2M731.3,119h1.2M730.5,127h1.2M729.8,135h1.2M729.1,142.9h1.2M728.4,150.9h1.2M727.7,158.8h1.2M726.9,166.8h1.2M726.2,174.8h1.2M725.5,182.7h1.2" stroke="#e02828" stroke-width="1.1" fill="none" opacity="0.8"/>
<rect x="538.5" y="190.8" width="207.5" height="6.2" fill="none" stroke="#3aa83a" stroke-width="0.9"/>
<path d="M548.5,190.8v6.2M550.7,190.8v6.2M560.2,190.8v6.2M562.4,190.8v6.2M571.9,190.8v6.2M574.1,190.8v6.2M583.6,190.8v6.2M585.8,190.8v6.2M595.3,190.8v6.2M597.5,190.8v6.2M607,190.8v6.2M609.2,190.8v6.2M618.7,190.8v6.2M620.9,190.8v6.2M630.4,190.8v6.2M632.6,190.8v6.2M642.1,190.8v6.2M644.3,190.8v6.2M653.8,190.8v6.2M656,190.8v6.2M665.5,190.8v6.2M667.7,190.8v6.2M677.2,190.8v6.2M679.4,190.8v6.2M688.9,190.8v6.2M691.1,190.8v6.2M700.6,190.8v6.2M702.8,190.8v6.2M712.3,190.8v6.2M714.5,190.8v6.2M724,190.8v6.2M726.2,190.8v6.2M735.7,190.8v6.2M737.9,190.8v6.2" stroke="#3aa83a" stroke-width="0.8" fill="none"/>
</g>
<g clip-path="url(#cBL)">
<line x1="26.3" y1="236" x2="26.3" y2="458" stroke="#e0e0ee" stroke-width="1" />
<line x1="64.3" y1="236" x2="64.3" y2="458" stroke="#e0e0ee" stroke-width="1" />
<line x1="102.3" y1="236" x2="102.3" y2="458" stroke="#e0e0ee" stroke-width="1" />
<line x1="140.3" y1="236" x2="140.3" y2="458" stroke="#e0e0ee" stroke-width="1" />
<line x1="178.3" y1="236" x2="178.3" y2="458" stroke="#e0e0ee" stroke-width="1" />
<line x1="216.3" y1="236" x2="216.3" y2="458" stroke="#e0e0ee" stroke-width="1" />
<line x1="254.3" y1="236" x2="254.3" y2="458" stroke="#e0e0ee" stroke-width="1" />
<line x1="292.3" y1="236" x2="292.3" y2="458" stroke="#e0e0ee" stroke-width="1" />
<line x1="330.3" y1="236" x2="330.3" y2="458" stroke="#e0e0ee" stroke-width="1" />
<line x1="368.3" y1="236" x2="368.3" y2="458" stroke="#e0e0ee" stroke-width="1" />
<line x1="406.3" y1="236" x2="406.3" y2="458" stroke="#e0e0ee" stroke-width="1" />
<line x1="444.3" y1="236" x2="444.3" y2="458" stroke="#e0e0ee" stroke-width="1" />
<line x1="482.3" y1="236" x2="482.3" y2="458" stroke="#e0e0ee" stroke-width="1" />
<line x1="3" y1="220" x2="460" y2="220" stroke="#e0e0ee" stroke-width="1" />
<line x1="3" y1="258" x2="460" y2="258" stroke="#e0e0ee" stroke-width="1" />
<line x1="3" y1="296" x2="460" y2="296" stroke="#e0e0ee" stroke-width="1" />
<line x1="3" y1="334" x2="460" y2="334" stroke="#e0e0ee" stroke-width="1" />
<line x1="3" y1="372" x2="460" y2="372" stroke="#e0e0ee" stroke-width="1" />
<line x1="3" y1="410" x2="460" y2="410" stroke="#e0e0ee" stroke-width="1" />
<line x1="3" y1="448" x2="460" y2="448" stroke="#e0e0ee" stroke-width="1" />
<line x1="3" y1="410.4" x2="460" y2="410.4" stroke="#c0c0c0" stroke-width="1" />
<line x1="58.8" y1="296" x2="69.8" y2="296" stroke="#7cc07c" stroke-width="1" />
<line x1="58.8" y1="303.1" x2="69.8" y2="303.1" stroke="#7cc07c" stroke-width="1" />
<line x1="58.8" y1="310.2" x2="69.8" y2="310.2" stroke="#7cc07c" stroke-width="1" />
<line x1="58.8" y1="317.3" x2="69.8" y2="317.3" stroke="#7cc07c" stroke-width="1" />
<line x1="58.8" y1="324.4" x2="69.8" y2="324.4" stroke="#2a9a2a" stroke-width="1" />
<line x1="58.8" y1="331.5" x2="69.8" y2="331.5" stroke="#7cc07c" stroke-width="1" />
<line x1="58.8" y1="338.6" x2="69.8" y2="338.6" stroke="#7cc07c" stroke-width="1" />
<line x1="58.8" y1="345.7" x2="69.8" y2="345.7" stroke="#7cc07c" stroke-width="1" />
<line x1="58.8" y1="352.8" x2="69.8" y2="352.8" stroke="#7cc07c" stroke-width="1" />
<line x1="58.8" y1="359.9" x2="69.8" y2="359.9" stroke="#7cc07c" stroke-width="1" />
<line x1="58.8" y1="367" x2="69.8" y2="367" stroke="#7cc07c" stroke-width="1" />
<line x1="58.8" y1="374.1" x2="69.8" y2="374.1" stroke="#7cc07c" stroke-width="1" />
<line x1="58.8" y1="381.2" x2="69.8" y2="381.2" stroke="#2a9a2a" stroke-width="1" />
<line x1="58.8" y1="388.3" x2="69.8" y2="388.3" stroke="#7cc07c" stroke-width="1" />
<line x1="58.8" y1="395.4" x2="69.8" y2="395.4" stroke="#7cc07c" stroke-width="1" />
<line x1="58.8" y1="402.5" x2="69.8" y2="402.5" stroke="#7cc07c" stroke-width="1" />
<line x1="58.8" y1="409.6" x2="69.8" y2="409.6" stroke="#7cc07c" stroke-width="1" />
<line x1="64.3" y1="276.5" x2="64.3" y2="404.5" stroke="#404040" stroke-width="1" />
<line x1="401.2" y1="296" x2="412.2" y2="296" stroke="#7cc07c" stroke-width="1" />
<line x1="401.2" y1="303.1" x2="412.2" y2="303.1" stroke="#7cc07c" stroke-width="1" />
<line x1="401.2" y1="310.2" x2="412.2" y2="310.2" stroke="#7cc07c" stroke-width="1" />
<line x1="401.2" y1="317.3" x2="412.2" y2="317.3" stroke="#7cc07c" stroke-width="1" />
<line x1="401.2" y1="324.4" x2="412.2" y2="324.4" stroke="#2a9a2a" stroke-width="1" />
<line x1="401.2" y1="331.5" x2="412.2" y2="331.5" stroke="#7cc07c" stroke-width="1" />
<line x1="401.2" y1="338.6" x2="412.2" y2="338.6" stroke="#7cc07c" stroke-width="1" />
<line x1="401.2" y1="345.7" x2="412.2" y2="345.7" stroke="#7cc07c" stroke-width="1" />
<line x1="401.2" y1="352.8" x2="412.2" y2="352.8" stroke="#7cc07c" stroke-width="1" />
<line x1="401.2" y1="359.9" x2="412.2" y2="359.9" stroke="#7cc07c" stroke-width="1" />
<line x1="401.2" y1="367" x2="412.2" y2="367" stroke="#7cc07c" stroke-width="1" />
<line x1="401.2" y1="374.1" x2="412.2" y2="374.1" stroke="#7cc07c" stroke-width="1" />
<line x1="401.2" y1="381.2" x2="412.2" y2="381.2" stroke="#2a9a2a" stroke-width="1" />
<line x1="401.2" y1="388.3" x2="412.2" y2="388.3" stroke="#7cc07c" stroke-width="1" />
<line x1="401.2" y1="395.4" x2="412.2" y2="395.4" stroke="#7cc07c" stroke-width="1" />
<line x1="401.2" y1="402.5" x2="412.2" y2="402.5" stroke="#7cc07c" stroke-width="1" />
<line x1="401.2" y1="409.6" x2="412.2" y2="409.6" stroke="#7cc07c" stroke-width="1" />
<line x1="406.7" y1="276.5" x2="406.7" y2="404.5" stroke="#404040" stroke-width="1" />
<line x1="64.3" y1="278.5" x2="86.3" y2="278.7" stroke="#c040c0" stroke-width="1.2" />
<line x1="86.3" y1="278.7" x2="124.3" y2="279.1" stroke="#f05070" stroke-width="1.2" />
<line x1="124.3" y1="279.1" x2="143.4" y2="280.1" stroke="#ff4040" stroke-width="1.2" />
<line x1="143.4" y1="280.1" x2="178.4" y2="281.3" stroke="#ff6030" stroke-width="1.2" />
<line x1="178.4" y1="281.3" x2="292.4" y2="281.3" stroke="#ff5a28" stroke-width="1.2" />
<line x1="292.4" y1="281.3" x2="346.7" y2="279.1" stroke="#ff6030" stroke-width="1.2" />
<line x1="346.7" y1="279.1" x2="384.7" y2="278.7" stroke="#ff4040" stroke-width="1.2" />
<line x1="384.7" y1="278.7" x2="406.7" y2="278.5" stroke="#f05070" stroke-width="1.2" />
<line x1="384.7" y1="278.7" x2="406.7" y2="278.5" stroke="#c040c0" stroke-width="1.2" />
<line x1="64.3" y1="388.4" x2="86.3" y2="388.6" stroke="#c040c0" stroke-width="1.2" />
<line x1="86.3" y1="388.6" x2="124.3" y2="389" stroke="#f05070" stroke-width="1.2" />
<line x1="124.3" y1="389" x2="143.4" y2="390" stroke="#ff4040" stroke-width="1.2" />
<line x1="143.4" y1="390" x2="178.4" y2="389.8" stroke="#ff6030" stroke-width="1.2" />
<line x1="178.4" y1="389.8" x2="292.4" y2="389.8" stroke="#ff5a28" stroke-width="1.2" />
<line x1="292.4" y1="389.8" x2="346.7" y2="389" stroke="#ff6030" stroke-width="1.2" />
<line x1="346.7" y1="389" x2="384.7" y2="388.6" stroke="#ff4040" stroke-width="1.2" />
<line x1="384.7" y1="388.6" x2="406.7" y2="388.4" stroke="#f05070" stroke-width="1.2" />
<line x1="384.7" y1="388.6" x2="406.7" y2="388.4" stroke="#c040c0" stroke-width="1.2" />
<line x1="178.4" y1="283" x2="178.4" y2="387" stroke="#ff6040" stroke-width="1.2" />
<path d="M173.9,280.3 L178.4,282.3 L182.9,280.3 M178.4,282.3 L178.4,285.3" stroke="#70c860" stroke-width="0.9" fill="none"/>
<path d="M173.9,390 L178.4,388 L182.9,390 M178.4,388 L178.4,384.5" stroke="#70c860" stroke-width="0.9" fill="none"/>
<line x1="178.4" y1="287" x2="178.4" y2="294" stroke="#c0b030" stroke-width="1.1" />
<line x1="178.4" y1="294" x2="178.4" y2="302" stroke="#a050a0" stroke-width="1.1" />
<line x1="172.9" y1="300.6" x2="183.9" y2="300.6" stroke="#5cb85c" stroke-width="0.9" />
<line x1="178.4" y1="296.1" x2="178.4" y2="306.1" stroke="#5cb85c" stroke-width="0.9" />
<line x1="178.4" y1="391" x2="178.4" y2="397" stroke="#60e060" stroke-width="1.1" />
<line x1="178.4" y1="397" x2="178.4" y2="405" stroke="#3070d0" stroke-width="1.1" />
<line x1="172.9" y1="405.4" x2="183.9" y2="405.4" stroke="#5cb85c" stroke-width="0.9" />
<line x1="178.4" y1="400.9" x2="178.4" y2="410.9" stroke="#5cb85c" stroke-width="0.9" />
<line x1="292.4" y1="283" x2="292.4" y2="387" stroke="#ff6040" stroke-width="1.2" />
<path d="M287.9,280.3 L292.4,282.3 L296.9,280.3 M292.4,282.3 L292.4,285.3" stroke="#70c860" stroke-width="0.9" fill="none"/>
<path d="M287.9,390 L292.4,388 L296.9,390 M292.4,388 L292.4,384.5" stroke="#70c860" stroke-width="0.9" fill="none"/>
<line x1="292.4" y1="287" x2="292.4" y2="294" stroke="#c0b030" stroke-width="1.1" />
<line x1="292.4" y1="294" x2="292.4" y2="302" stroke="#a050a0" stroke-width="1.1" />
<line x1="286.9" y1="300.6" x2="297.9" y2="300.6" stroke="#5cb85c" stroke-width="0.9" />
<line x1="292.4" y1="296.1" x2="292.4" y2="306.1" stroke="#5cb85c" stroke-width="0.9" />
<line x1="292.4" y1="391" x2="292.4" y2="397" stroke="#60e060" stroke-width="1.1" />
<line x1="292.4" y1="397" x2="292.4" y2="405" stroke="#3070d0" stroke-width="1.1" />
<line x1="286.9" y1="405.4" x2="297.9" y2="405.4" stroke="#5cb85c" stroke-width="0.9" />
<line x1="292.4" y1="400.9" x2="292.4" y2="410.9" stroke="#5cb85c" stroke-width="0.9" />
<line x1="27" y1="372" x2="27" y2="411" stroke="#fff" stroke-width="0" />
<polygon points="28.8,409.9 56,409.9 56,412.4 64,407.2 56,402 56,404.4 28.8,404.4" fill="#f8b4b4" stroke="none" stroke-width="1" />
<polygon points="31.6,409.5 31.6,380 34,380 28.8,372 23.6,380 26.1,380 26.1,409.5" fill="#f8b4b4" stroke="none" stroke-width="1" />
<text x="58.5" y="409.6" font-size="5.5" fill="#ffffff" text-anchor="start" font-weight="normal">X</text>
<text x="27" y="379" font-size="5.5" fill="#ffffff" text-anchor="start" font-weight="normal">Y</text>
</g>
<g clip-path="url(#cBR)">
<line x1="-524.5" y1="270" x2="389" y2="1021.5" stroke="#dddcec" stroke-width="1" />
<line x1="-494.9" y1="258.6" x2="418.6" y2="1010.1" stroke="#dddcec" stroke-width="1" />
<line x1="-465.3" y1="247.2" x2="448.2" y2="998.7" stroke="#dddcec" stroke-width="1" />
<line x1="-435.7" y1="235.8" x2="477.8" y2="987.3" stroke="#dddcec" stroke-width="1" />
<line x1="-406.1" y1="224.4" x2="507.4" y2="975.9" stroke="#dddcec" stroke-width="1" />
<line x1="-376.5" y1="213" x2="537" y2="964.5" stroke="#dddcec" stroke-width="1" />
<line x1="-346.9" y1="201.6" x2="566.6" y2="953.1" stroke="#dddcec" stroke-width="1" />
<line x1="-317.3" y1="190.2" x2="596.2" y2="941.7" stroke="#dddcec" stroke-width="1" />
<line x1="-287.7" y1="178.8" x2="625.8" y2="930.3" stroke="#dddcec" stroke-width="1" />
<line x1="-258.1" y1="167.4" x2="655.4" y2="918.9" stroke="#dddcec" stroke-width="1" />
<line x1="-228.5" y1="156" x2="685" y2="907.5" stroke="#dddcec" stroke-width="1" />
<line x1="-198.9" y1="144.6" x2="714.6" y2="896.1" stroke="#dddcec" stroke-width="1" />
<line x1="-169.3" y1="133.2" x2="744.2" y2="884.7" stroke="#dddcec" stroke-width="1" />
<line x1="-139.7" y1="121.8" x2="773.8" y2="873.3" stroke="#dddcec" stroke-width="1" />
<line x1="-110.1" y1="110.4" x2="803.4" y2="861.9" stroke="#dddcec" stroke-width="1" />
<line x1="-80.5" y1="99" x2="833" y2="850.5" stroke="#dddcec" stroke-width="1" />
<line x1="-50.9" y1="87.6" x2="862.6" y2="839.1" stroke="#dddcec" stroke-width="1" />
<line x1="-21.3" y1="76.2" x2="892.2" y2="827.7" stroke="#dddcec" stroke-width="1" />
<line x1="8.3" y1="64.8" x2="921.8" y2="816.3" stroke="#dddcec" stroke-width="1" />
<line x1="37.9" y1="53.4" x2="951.4" y2="804.9" stroke="#dddcec" stroke-width="1" />
<line x1="67.5" y1="42" x2="981" y2="793.5" stroke="#dddcec" stroke-width="1" />
<line x1="97.1" y1="30.6" x2="1010.6" y2="782.1" stroke="#dddcec" stroke-width="1" />
<line x1="126.7" y1="19.2" x2="1040.2" y2="770.7" stroke="#dddcec" stroke-width="1" />
<line x1="156.3" y1="7.8" x2="1069.8" y2="759.3" stroke="#dddcec" stroke-width="1" />
<line x1="185.9" y1="-3.6" x2="1099.4" y2="747.9" stroke="#dddcec" stroke-width="1" />
<line x1="215.5" y1="-15" x2="1129" y2="736.5" stroke="#dddcec" stroke-width="1" />
<line x1="245.1" y1="-26.4" x2="1158.6" y2="725.1" stroke="#dddcec" stroke-width="1" />
<line x1="274.7" y1="-37.8" x2="1188.2" y2="713.7" stroke="#dddcec" stroke-width="1" />
<line x1="304.3" y1="-49.2" x2="1217.8" y2="702.3" stroke="#dddcec" stroke-width="1" />
<line x1="333.9" y1="-60.6" x2="1247.4" y2="690.9" stroke="#dddcec" stroke-width="1" />
<line x1="363.5" y1="-72" x2="1277" y2="679.5" stroke="#dddcec" stroke-width="1" />
<line x1="393.1" y1="-83.4" x2="1306.6" y2="668.1" stroke="#dddcec" stroke-width="1" />
<line x1="422.7" y1="-94.8" x2="1336.2" y2="656.7" stroke="#dddcec" stroke-width="1" />
<line x1="452.3" y1="-106.2" x2="1365.8" y2="645.3" stroke="#dddcec" stroke-width="1" />
<line x1="481.9" y1="-117.6" x2="1395.4" y2="633.9" stroke="#dddcec" stroke-width="1" />
<line x1="511.5" y1="-129" x2="1425" y2="622.5" stroke="#dddcec" stroke-width="1" />
<line x1="541.1" y1="-140.4" x2="1454.6" y2="611.1" stroke="#dddcec" stroke-width="1" />
<line x1="570.7" y1="-151.8" x2="1484.2" y2="599.7" stroke="#dddcec" stroke-width="1" />
<line x1="600.3" y1="-163.2" x2="1513.8" y2="588.3" stroke="#dddcec" stroke-width="1" />
<line x1="629.9" y1="-174.6" x2="1543.4" y2="576.9" stroke="#dddcec" stroke-width="1" />
<line x1="659.5" y1="-186" x2="1573" y2="565.5" stroke="#dddcec" stroke-width="1" />
<line x1="689.1" y1="-197.4" x2="1602.6" y2="554.1" stroke="#dddcec" stroke-width="1" />
<line x1="718.7" y1="-208.8" x2="1632.2" y2="542.7" stroke="#dddcec" stroke-width="1" />
<line x1="748.3" y1="-220.2" x2="1661.8" y2="531.3" stroke="#dddcec" stroke-width="1" />
<line x1="777.9" y1="-231.6" x2="1691.4" y2="519.9" stroke="#dddcec" stroke-width="1" />
<line x1="807.5" y1="-243" x2="1721" y2="508.5" stroke="#dddcec" stroke-width="1" />
<line x1="837.1" y1="-254.4" x2="1750.6" y2="497.1" stroke="#dddcec" stroke-width="1" />
<line x1="866.7" y1="-265.8" x2="1780.2" y2="485.7" stroke="#dddcec" stroke-width="1" />
<line x1="896.3" y1="-277.2" x2="1809.8" y2="474.3" stroke="#dddcec" stroke-width="1" />
<line x1="925.9" y1="-288.6" x2="1839.4" y2="462.9" stroke="#dddcec" stroke-width="1" />
<line x1="-626" y1="186.5" x2="854" y2="-383.5" stroke="#dddcec" stroke-width="1" />
<line x1="-605.7" y1="203.2" x2="874.3" y2="-366.8" stroke="#dddcec" stroke-width="1" />
<line x1="-585.4" y1="219.9" x2="894.6" y2="-350.1" stroke="#dddcec" stroke-width="1" />
<line x1="-565.1" y1="236.6" x2="914.9" y2="-333.4" stroke="#dddcec" stroke-width="1" />
<line x1="-544.8" y1="253.3" x2="935.2" y2="-316.7" stroke="#dddcec" stroke-width="1" />
<line x1="-524.5" y1="270" x2="955.5" y2="-300" stroke="#dddcec" stroke-width="1" />
<line x1="-504.2" y1="286.7" x2="975.8" y2="-283.3" stroke="#dddcec" stroke-width="1" />
<line x1="-483.9" y1="303.4" x2="996.1" y2="-266.6" stroke="#dddcec" stroke-width="1" />
<line x1="-463.6" y1="320.1" x2="1016.4" y2="-249.9" stroke="#dddcec" stroke-width="1" />
<line x1="-443.3" y1="336.8" x2="1036.7" y2="-233.2" stroke="#dddcec" stroke-width="1" />
<line x1="-423" y1="353.5" x2="1057" y2="-216.5" stroke="#dddcec" stroke-width="1" />
<line x1="-402.7" y1="370.2" x2="1077.3" y2="-199.8" stroke="#dddcec" stroke-width="1" />
<line x1="-382.4" y1="386.9" x2="1097.6" y2="-183.1" stroke="#dddcec" stroke-width="1" />
<line x1="-362.1" y1="403.6" x2="1117.9" y2="-166.4" stroke="#dddcec" stroke-width="1" />
<line x1="-341.8" y1="420.3" x2="1138.2" y2="-149.7" stroke="#dddcec" stroke-width="1" />
<line x1="-321.5" y1="437" x2="1158.5" y2="-133" stroke="#dddcec" stroke-width="1" />
<line x1="-301.2" y1="453.7" x2="1178.8" y2="-116.3" stroke="#dddcec" stroke-width="1" />
<line x1="-280.9" y1="470.4" x2="1199.1" y2="-99.6" stroke="#dddcec" stroke-width="1" />
<line x1="-260.6" y1="487.1" x2="1219.4" y2="-82.9" stroke="#dddcec" stroke-width="1" />
<line x1="-240.3" y1="503.8" x2="1239.7" y2="-66.2" stroke="#dddcec" stroke-width="1" />
<line x1="-220" y1="520.5" x2="1260" y2="-49.5" stroke="#dddcec" stroke-width="1" />
<line x1="-199.7" y1="537.2" x2="1280.3" y2="-32.8" stroke="#dddcec" stroke-width="1" />
<line x1="-179.4" y1="553.9" x2="1300.6" y2="-16.1" stroke="#dddcec" stroke-width="1" />
<line x1="-159.1" y1="570.6" x2="1320.9" y2="0.6" stroke="#dddcec" stroke-width="1" />
<line x1="-138.8" y1="587.3" x2="1341.2" y2="17.3" stroke="#dddcec" stroke-width="1" />
<line x1="-118.5" y1="604" x2="1361.5" y2="34" stroke="#dddcec" stroke-width="1" />
<line x1="-98.2" y1="620.7" x2="1381.8" y2="50.7" stroke="#dddcec" stroke-width="1" />
<line x1="-77.9" y1="637.4" x2="1402.1" y2="67.4" stroke="#dddcec" stroke-width="1" />
<line x1="-57.6" y1="654.1" x2="1422.4" y2="84.1" stroke="#dddcec" stroke-width="1" />
<line x1="-37.3" y1="670.8" x2="1442.7" y2="100.8" stroke="#dddcec" stroke-width="1" />
<line x1="-17" y1="687.5" x2="1463" y2="117.5" stroke="#dddcec" stroke-width="1" />
<line x1="3.3" y1="704.2" x2="1483.3" y2="134.2" stroke="#dddcec" stroke-width="1" />
<line x1="23.6" y1="720.9" x2="1503.6" y2="150.9" stroke="#dddcec" stroke-width="1" />
<line x1="43.9" y1="737.6" x2="1523.9" y2="167.6" stroke="#dddcec" stroke-width="1" />
<line x1="64.2" y1="754.3" x2="1544.2" y2="184.3" stroke="#dddcec" stroke-width="1" />
<line x1="84.5" y1="771" x2="1564.5" y2="201" stroke="#dddcec" stroke-width="1" />
<line x1="104.8" y1="787.7" x2="1584.8" y2="217.7" stroke="#dddcec" stroke-width="1" />
<line x1="125.1" y1="804.4" x2="1605.1" y2="234.4" stroke="#dddcec" stroke-width="1" />
<line x1="145.4" y1="821.1" x2="1625.4" y2="251.1" stroke="#dddcec" stroke-width="1" />
<line x1="165.7" y1="837.8" x2="1645.7" y2="267.8" stroke="#dddcec" stroke-width="1" />
<line x1="186" y1="854.5" x2="1666" y2="284.5" stroke="#dddcec" stroke-width="1" />
<line x1="206.3" y1="871.2" x2="1686.3" y2="301.2" stroke="#dddcec" stroke-width="1" />
<line x1="226.6" y1="887.9" x2="1706.6" y2="317.9" stroke="#dddcec" stroke-width="1" />
<line x1="246.9" y1="904.6" x2="1726.9" y2="334.6" stroke="#dddcec" stroke-width="1" />
<line x1="267.2" y1="921.3" x2="1747.2" y2="351.3" stroke="#dddcec" stroke-width="1" />
<line x1="287.5" y1="938" x2="1767.5" y2="368" stroke="#dddcec" stroke-width="1" />
<line x1="307.8" y1="954.7" x2="1787.8" y2="384.7" stroke="#dddcec" stroke-width="1" />
<line x1="328.1" y1="971.4" x2="1808.1" y2="401.4" stroke="#dddcec" stroke-width="1" />
<line x1="348.4" y1="988.1" x2="1828.4" y2="418.1" stroke="#dddcec" stroke-width="1" />
<line x1="368.7" y1="1004.8" x2="1848.7" y2="434.8" stroke="#dddcec" stroke-width="1" />
<line x1="389" y1="1021.5" x2="1869" y2="451.5" stroke="#dddcec" stroke-width="1" />
<line x1="409.3" y1="1038.2" x2="1889.3" y2="468.2" stroke="#dddcec" stroke-width="1" />
<line x1="429.6" y1="1054.9" x2="1909.6" y2="484.9" stroke="#dddcec" stroke-width="1" />
<line x1="449.9" y1="1071.6" x2="1929.9" y2="501.6" stroke="#dddcec" stroke-width="1" />
<line x1="470.2" y1="1088.3" x2="1950.2" y2="518.3" stroke="#dddcec" stroke-width="1" />
<line x1="490.5" y1="1105" x2="1970.5" y2="535" stroke="#dddcec" stroke-width="1" />
<line x1="510.8" y1="1121.7" x2="1990.8" y2="551.7" stroke="#dddcec" stroke-width="1" />
<line x1="531.1" y1="1138.4" x2="2011.1" y2="568.4" stroke="#dddcec" stroke-width="1" />
<line x1="551.4" y1="1155.1" x2="2031.4" y2="585.1" stroke="#dddcec" stroke-width="1" />
<line x1="571.7" y1="1171.8" x2="2051.7" y2="601.8" stroke="#dddcec" stroke-width="1" />
<line x1="-17" y1="687.5" x2="1463" y2="117.5" stroke="#a0a0a0" stroke-width="1" />
<line x1="169" y1="125.5" x2="981" y2="793.5" stroke="#a0a0a0" stroke-width="1" />
<path d="M538.8,399.3q-0.4,5 2.2,5.2q2.6,-0.2 2.2,-5.2M541.9,401.8q-0.4,5 2.2,5.2q2.6,-0.2 2.2,-5.2M545,404.2q-0.4,5 2.2,5.2q2.6,-0.2 2.2,-5.2M548.1,406.7q-0.4,5 2.2,5.2q2.6,-0.2 2.2,-5.2M551.2,409.1q-0.4,5 2.2,5.2q2.6,-0.2 2.2,-5.2M554.2,411.6q-0.4,5 2.2,5.2q2.6,-0.2 2.2,-5.2M557.3,414.1q-0.4,5 2.2,5.2q2.6,-0.2 2.2,-5.2M560.4,416.5q-0.4,5 2.2,5.2q2.6,-0.2 2.2,-5.2M563.5,419q-0.4,5 2.2,5.2q2.6,-0.2 2.2,-5.2M566.6,421.4q-0.4,5 2.2,5.2q2.6,-0.2 2.2,-5.2M569.7,423.9q-0.4,5 2.2,5.2q2.6,-0.2 2.2,-5.2M572.8,426.4q-0.4,5 2.2,5.2q2.6,-0.2 2.2,-5.2M575.9,428.8q-0.4,5 2.2,5.2q2.6,-0.2 2.2,-5.2M579,431.3q-0.4,5 2.2,5.2q2.6,-0.2 2.2,-5.2M582.1,433.7q-0.4,5 2.2,5.2q2.6,-0.2 2.2,-5.2M585.1,436.2q-0.4,5 2.2,5.2q2.6,-0.2 2.2,-5.2M588.2,438.7q-0.4,5 2.2,5.2q2.6,-0.2 2.2,-5.2M591.3,441.1q-0.4,5 2.2,5.2q2.6,-0.2 2.2,-5.2M594.4,443.6q-0.4,5 2.2,5.2q2.6,-0.2 2.2,-5.2M597.5,446q-0.4,5 2.2,5.2q2.6,-0.2 2.2,-5.2M600.6,448.5q-0.4,5 2.2,5.2q2.6,-0.2 2.2,-5.2" stroke="#38a838" stroke-width="1" fill="none"/>
<line x1="541" y1="398.8" x2="602.8" y2="448" stroke="#38a838" stroke-width="0.9" />
<polygon points="533.3,338.3 534.8,341 536.4,343.7 538,346.3 539.6,348.8 541.2,351.2 542.9,353.6 544.6,355.9 546.4,358.1 548.1,360.2 549.9,362.2 551.8,364.2 553.6,366.1 555.5,367.9 557.4,369.7 559.4,371.3 561.4,372.9 563.4,374.4 565.4,375.8 567.5,377.2 569.6,378.5 571.7,379.7 573.9,380.8 576.1,381.8 578.3,382.8 580.6,383.7 582.9,384.5 585.2,385.3 587.5,385.9 589.9,386.5 592.3,387 604.3,447.5 602.2,445.9 600.2,444.2 598.1,442.6 596.1,440.9 594,439.3 591.9,437.7 589.9,436 587.8,434.4 585.8,432.7 583.7,431.1 581.6,429.5 579.6,427.8 577.5,426.2 575.5,424.5 573.4,422.9 571.3,421.3 569.3,419.6 567.2,418 565.2,416.3 563.1,414.7 561,413.1 559,411.4 556.9,409.8 554.9,408.1 552.8,406.5 550.7,404.9 548.7,403.2 546.6,401.6 544.6,399.9 542.5,398.3" fill="#c000c8" stroke="none" stroke-width="1" />
<polygon points="533.3,338.3 534.8,341 536.4,343.7 538,346.3 539.6,348.8 541.2,351.2 542.9,353.6 544.6,355.9 546.4,358.1 548.1,360.2 549.9,362.2 551.8,364.2 553.6,366.1 555.5,367.9 557.4,369.7 559.4,371.3 561.4,372.9 563.4,374.4 565.4,375.8 567.5,377.2 569.6,378.5 571.7,379.7 573.9,380.8 576.1,381.8 578.3,382.8 580.6,383.8 583.1,385.4 585.6,387.2 588.2,389.1 590.9,391.4 593.7,394 604.3,447.5 602.2,445.9 600.2,444.2 598.1,442.6 596.1,440.9 594,439.3 591.9,437.7 589.9,436 587.8,434.4 585.8,432.7 583.7,431.1 581.6,429.5 579.6,427.8 577.5,426.2 575.5,424.5 573.4,422.9 571.3,421.3 569.3,419.6 567.2,418 565.2,416.3 563.1,414.7 561,413.1 559,411.4 556.9,409.8 554.9,408.1 552.8,406.5 550.7,404.9 548.7,403.2 546.6,401.6 544.6,399.9 542.5,398.3" fill="#ff0000" stroke="none" stroke-width="1" />
<polygon points="533.6,340.6 535.2,343.3 536.8,345.9 538.4,348.4 540,350.9 541.7,353.3 543.4,355.7 545.1,357.9 546.9,360.1 548.6,362.2 550.4,364.2 552.3,366.2 554.2,368.1 556.1,369.9 558,371.6 559.9,373.3 561.9,374.9 564,376.5 566,378 568.1,379.4 570.2,380.8 572.4,382.2 574.6,383.6 576.9,384.9 579.2,386.4 581.6,387.9 584,389.5 586.5,391.2 589.1,393.2 591.7,395.4 594.5,397.9 604.3,447.5 602.2,445.9 600.2,444.2 598.1,442.6 596.1,440.9 594,439.3 591.9,437.7 589.9,436 587.8,434.4 585.8,432.7 583.7,431.1 581.6,429.5 579.6,427.8 577.5,426.2 575.5,424.5 573.4,422.9 571.3,421.3 569.3,419.6 567.2,418 565.2,416.3 563.1,414.7 561,413.1 559,411.4 556.9,409.8 554.9,408.1 552.8,406.5 550.7,404.9 548.7,403.2 546.6,401.6 544.6,399.9 542.5,398.3" fill="#ff5000" stroke="none" stroke-width="1" />
<polygon points="534.3,345.1 535.9,347.7 537.5,350.2 539.2,352.7 540.9,355.1 542.5,357.5 544.3,359.7 546,362 547.8,364.1 549.6,366.2 551.4,368.2 553.3,370.1 555.2,372 557.1,373.8 559,375.5 561,377.2 563,378.8 565,380.3 567.1,381.8 569.2,383.3 571.3,384.7 573.4,386.1 575.7,387.5 577.9,388.9 580.2,390.4 582.5,391.9 585,393.5 587.4,395.2 590,397.2 592.6,399.3 595.2,401.7 604.3,447.5 602.2,445.9 600.2,444.2 598.1,442.6 596.1,440.9 594,439.3 591.9,437.7 589.9,436 587.8,434.4 585.8,432.7 583.7,431.1 581.6,429.5 579.6,427.8 577.5,426.2 575.5,424.5 573.4,422.9 571.3,421.3 569.3,419.6 567.2,418 565.2,416.3 563.1,414.7 561,413.1 559,411.4 556.9,409.8 554.9,408.1 552.8,406.5 550.7,404.9 548.7,403.2 546.6,401.6 544.6,399.9 542.5,398.3" fill="#ffa000" stroke="none" stroke-width="1" />
<polygon points="535.4,351.7 537,354.2 538.7,356.6 540.4,359 542.1,361.3 543.8,363.6 545.6,365.8 547.4,367.9 549.2,370 551,372 552.9,374 554.8,375.9 556.7,377.7 558.6,379.5 560.6,381.2 562.5,382.9 564.5,384.5 566.6,386.1 568.6,387.6 570.7,389.1 572.8,390.5 575,391.9 577.2,393.4 579.4,394.8 581.7,396.3 584,397.8 586.3,399.4 588.8,401.1 591.2,403 593.8,405.1 596.4,407.5 604.3,447.5 602.2,445.9 600.2,444.2 598.1,442.6 596.1,440.9 594,439.3 591.9,437.7 589.9,436 587.8,434.4 585.8,432.7 583.7,431.1 581.6,429.5 579.6,427.8 577.5,426.2 575.5,424.5 573.4,422.9 571.3,421.3 569.3,419.6 567.2,418 565.2,416.3 563.1,414.7 561,413.1 559,411.4 556.9,409.8 554.9,408.1 552.8,406.5 550.7,404.9 548.7,403.2 546.6,401.6 544.6,399.9 542.5,398.3" fill="#ffff00" stroke="none" stroke-width="1" />
<polygon points="536,356.1 537.7,358.5 539.4,360.8 541.1,363.2 542.9,365.4 544.7,367.6 546.5,369.7 548.3,371.8 550.1,373.9 552,375.9 553.8,377.8 555.7,379.7 557.7,381.5 559.6,383.2 561.6,385 563.6,386.6 565.6,388.2 567.6,389.8 569.7,391.3 571.7,392.8 573.8,394.3 576,395.8 578.2,397.2 580.4,398.7 582.6,400.1 584.9,401.7 587.3,403.3 589.6,405 592.1,406.9 594.6,408.9 597.1,411.2 604.3,447.5 602.2,445.9 600.2,444.2 598.1,442.6 596.1,440.9 594,439.3 591.9,437.7 589.9,436 587.8,434.4 585.8,432.7 583.7,431.1 581.6,429.5 579.6,427.8 577.5,426.2 575.5,424.5 573.4,422.9 571.3,421.3 569.3,419.6 567.2,418 565.2,416.3 563.1,414.7 561,413.1 559,411.4 556.9,409.8 554.9,408.1 552.8,406.5 550.7,404.9 548.7,403.2 546.6,401.6 544.6,399.9 542.5,398.3" fill="#b0f000" stroke="none" stroke-width="1" />
<polygon points="536.7,360.4 538.4,362.7 540.1,365 541.9,367.2 543.7,369.4 545.5,371.5 547.3,373.6 549.1,375.7 551,377.7 552.9,379.6 554.8,381.5 556.7,383.4 558.6,385.2 560.6,386.9 562.6,388.6 564.6,390.3 566.6,391.9 568.6,393.5 570.7,395 572.7,396.6 574.8,398 577,399.5 579.1,401 581.3,402.4 583.6,403.9 585.8,405.5 588.1,407.1 590.5,408.8 592.9,410.7 595.3,412.7 597.8,414.9 604.3,447.5 602.2,445.9 600.2,444.2 598.1,442.6 596.1,440.9 594,439.3 591.9,437.7 589.9,436 587.8,434.4 585.8,432.7 583.7,431.1 581.6,429.5 579.6,427.8 577.5,426.2 575.5,424.5 573.4,422.9 571.3,421.3 569.3,419.6 567.2,418 565.2,416.3 563.1,414.7 561,413.1 559,411.4 556.9,409.8 554.9,408.1 552.8,406.5 550.7,404.9 548.7,403.2 546.6,401.6 544.6,399.9 542.5,398.3" fill="#60f000" stroke="none" stroke-width="1" />
<polygon points="537.3,364.6 539.1,366.8 540.9,369 542.7,371.2 544.5,373.3 546.3,375.4 548.1,377.5 550,379.5 551.9,381.4 553.8,383.3 555.7,385.2 557.6,387 559.6,388.8 561.6,390.6 563.5,392.3 565.5,393.9 567.6,395.5 569.6,397.1 571.7,398.7 573.7,400.2 575.8,401.7 578,403.2 580.1,404.7 582.3,406.2 584.5,407.7 586.7,409.2 589,410.9 591.3,412.6 593.7,414.4 596.1,416.4 598.5,418.5 604.3,447.5 602.2,445.9 600.2,444.2 598.1,442.6 596.1,440.9 594,439.3 591.9,437.7 589.9,436 587.8,434.4 585.8,432.7 583.7,431.1 581.6,429.5 579.6,427.8 577.5,426.2 575.5,424.5 573.4,422.9 571.3,421.3 569.3,419.6 567.2,418 565.2,416.3 563.1,414.7 561,413.1 559,411.4 556.9,409.8 554.9,408.1 552.8,406.5 550.7,404.9 548.7,403.2 546.6,401.6 544.6,399.9 542.5,398.3" fill="#20f040" stroke="none" stroke-width="1" />
<polygon points="538.3,370.7 540.1,372.9 541.9,375 543.8,377.1 545.6,379.1 547.5,381.1 549.4,383.1 551.3,385 553.2,386.9 555.1,388.8 557.1,390.6 559,392.4 561,394.2 563,395.9 565,397.6 567,399.2 569,400.9 571,402.5 573.1,404 575.2,405.6 577.3,407.1 579.4,408.6 581.5,410.1 583.7,411.6 585.9,413.2 588.1,414.7 590.3,416.4 592.6,418.1 594.9,419.9 597.2,421.8 599.6,423.8 604.3,447.5 602.2,445.9 600.2,444.2 598.1,442.6 596.1,440.9 594,439.3 591.9,437.7 589.9,436 587.8,434.4 585.8,432.7 583.7,431.1 581.6,429.5 579.6,427.8 577.5,426.2 575.5,424.5 573.4,422.9 571.3,421.3 569.3,419.6 567.2,418 565.2,416.3 563.1,414.7 561,413.1 559,411.4 556.9,409.8 554.9,408.1 552.8,406.5 550.7,404.9 548.7,403.2 546.6,401.6 544.6,399.9 542.5,398.3" fill="#00f880" stroke="none" stroke-width="1" />
<polygon points="538.9,374.7 540.7,376.8 542.6,378.9 544.5,380.9 546.4,382.9 548.3,384.8 550.2,386.7 552.1,388.6 554,390.5 556,392.3 557.9,394.1 559.9,395.9 561.9,397.6 563.9,399.3 565.9,401 567.9,402.7 569.9,404.3 572,405.9 574,407.5 576.1,409 578.2,410.6 580.3,412.1 582.4,413.6 584.6,415.2 586.7,416.7 588.9,418.3 591.1,419.9 593.4,421.6 595.7,423.4 598,425.3 600.3,427.3 604.3,447.5 602.2,445.9 600.2,444.2 598.1,442.6 596.1,440.9 594,439.3 591.9,437.7 589.9,436 587.8,434.4 585.8,432.7 583.7,431.1 581.6,429.5 579.6,427.8 577.5,426.2 575.5,424.5 573.4,422.9 571.3,421.3 569.3,419.6 567.2,418 565.2,416.3 563.1,414.7 561,413.1 559,411.4 556.9,409.8 554.9,408.1 552.8,406.5 550.7,404.9 548.7,403.2 546.6,401.6 544.6,399.9 542.5,398.3" fill="#18d8b8" stroke="none" stroke-width="1" />
<polygon points="539.5,378.7 541.4,380.7 543.3,382.6 545.2,384.6 547.1,386.5 549,388.4 551,390.3 552.9,392.1 554.9,394 556.8,395.8 558.8,397.5 560.8,399.3 562.8,401 564.8,402.7 566.8,404.4 568.8,406 570.9,407.7 572.9,409.3 575,410.9 577,412.4 579.1,414 581.2,415.5 583.3,417.1 585.5,418.6 587.6,420.2 589.8,421.8 592,423.4 594.2,425.1 596.4,426.9 598.7,428.7 601,430.6 604.3,447.5 602.2,445.9 600.2,444.2 598.1,442.6 596.1,440.9 594,439.3 591.9,437.7 589.9,436 587.8,434.4 585.8,432.7 583.7,431.1 581.6,429.5 579.6,427.8 577.5,426.2 575.5,424.5 573.4,422.9 571.3,421.3 569.3,419.6 567.2,418 565.2,416.3 563.1,414.7 561,413.1 559,411.4 556.9,409.8 554.9,408.1 552.8,406.5 550.7,404.9 548.7,403.2 546.6,401.6 544.6,399.9 542.5,398.3" fill="#00d8f8" stroke="none" stroke-width="1" />
<polygon points="540.4,384.3 542.3,386.2 544.2,388.1 546.2,389.9 548.1,391.8 550.1,393.6 552.1,395.4 554.1,397.2 556,399 558,400.7 560,402.5 562,404.2 564,405.9 566.1,407.6 568.1,409.2 570.1,410.9 572.2,412.5 574.2,414.1 576.3,415.7 578.4,417.3 580.4,418.9 582.5,420.5 584.6,422.1 586.7,423.6 588.9,425.2 591,426.8 593.1,428.5 595.3,430.1 597.5,431.8 599.7,433.6 601.9,435.5 604.3,447.5 602.2,445.9 600.2,444.2 598.1,442.6 596.1,440.9 594,439.3 591.9,437.7 589.9,436 587.8,434.4 585.8,432.7 583.7,431.1 581.6,429.5 579.6,427.8 577.5,426.2 575.5,424.5 573.4,422.9 571.3,421.3 569.3,419.6 567.2,418 565.2,416.3 563.1,414.7 561,413.1 559,411.4 556.9,409.8 554.9,408.1 552.8,406.5 550.7,404.9 548.7,403.2 546.6,401.6 544.6,399.9 542.5,398.3" fill="#00a8f8" stroke="none" stroke-width="1" />
<polygon points="540.9,387.9 542.9,389.7 544.8,391.5 546.8,393.3 548.8,395.1 550.8,396.9 552.8,398.7 554.8,400.4 556.8,402.2 558.8,403.9 560.8,405.6 562.8,407.3 564.9,409 566.9,410.6 568.9,412.3 571,413.9 573,415.6 575.1,417.2 577.1,418.8 579.2,420.4 581.3,422 583.3,423.6 585.4,425.2 587.5,426.8 589.6,428.4 591.8,430 593.9,431.6 596,433.3 598.2,435 600.3,436.7 602.5,438.5 604.3,447.5 602.2,445.9 600.2,444.2 598.1,442.6 596.1,440.9 594,439.3 591.9,437.7 589.9,436 587.8,434.4 585.8,432.7 583.7,431.1 581.6,429.5 579.6,427.8 577.5,426.2 575.5,424.5 573.4,422.9 571.3,421.3 569.3,419.6 567.2,418 565.2,416.3 563.1,414.7 561,413.1 559,411.4 556.9,409.8 554.9,408.1 552.8,406.5 550.7,404.9 548.7,403.2 546.6,401.6 544.6,399.9 542.5,398.3" fill="#0050f8" stroke="none" stroke-width="1" />
<polygon points="541.4,391.3 543.4,393.1 545.4,394.8 547.4,396.6 549.4,398.3 551.4,400 553.5,401.8 555.5,403.5 557.5,405.2 559.5,406.9 561.6,408.6 563.6,410.2 565.6,411.9 567.7,413.6 569.7,415.2 571.8,416.9 573.8,418.5 575.9,420.1 577.9,421.8 580,423.4 582.1,425 584.1,426.6 586.2,428.2 588.3,429.8 590.4,431.4 592.5,433.1 594.6,434.7 596.7,436.3 598.8,438 601,439.7 603.1,441.5 604.3,447.5 602.2,445.9 600.2,444.2 598.1,442.6 596.1,440.9 594,439.3 591.9,437.7 589.9,436 587.8,434.4 585.8,432.7 583.7,431.1 581.6,429.5 579.6,427.8 577.5,426.2 575.5,424.5 573.4,422.9 571.3,421.3 569.3,419.6 567.2,418 565.2,416.3 563.1,414.7 561,413.1 559,411.4 556.9,409.8 554.9,408.1 552.8,406.5 550.7,404.9 548.7,403.2 546.6,401.6 544.6,399.9 542.5,398.3" fill="#0000f0" stroke="none" stroke-width="1" />
<polygon points="542.1,395.9 544.2,397.6 546.2,399.3 548.3,401 550.3,402.6 552.3,404.3 554.4,406 556.4,407.6 558.5,409.3 560.5,411 562.6,412.6 564.6,414.3 566.7,415.9 568.7,417.6 570.8,419.2 572.8,420.8 574.9,422.5 577,424.1 579,425.8 581.1,427.4 583.1,429 585.2,430.7 587.3,432.3 589.3,433.9 591.4,435.5 593.5,437.2 595.6,438.8 597.6,440.5 599.7,442.1 601.8,443.8 603.9,445.4 604.3,447.5 602.2,445.9 600.2,444.2 598.1,442.6 596.1,440.9 594,439.3 591.9,437.7 589.9,436 587.8,434.4 585.8,432.7 583.7,431.1 581.6,429.5 579.6,427.8 577.5,426.2 575.5,424.5 573.4,422.9 571.3,421.3 569.3,419.6 567.2,418 565.2,416.3 563.1,414.7 561,413.1 559,411.4 556.9,409.8 554.9,408.1 552.8,406.5 550.7,404.9 548.7,403.2 546.6,401.6 544.6,399.9 542.5,398.3" fill="#0c1470" stroke="none" stroke-width="1" />
<polyline points="537.2,345 537.7,347.9 538.2,350.7 538.7,353.6 539.3,356.5 539.8,359.4 540.3,362.2 540.8,365.1 541.4,368 541.9,370.8 542.4,373.7 542.9,376.6 543.5,379.4 544,382.3 544.5,385.2 545,388.1 545.6,390.9 546.1,393.8 546.6,396.7 547.1,399.5 547.6,402.4" fill="none" stroke="#301818" stroke-width="0.75" opacity="0.85"/>
<polyline points="541.2,351.2 541.8,354 542.4,356.8 543,359.5 543.6,362.3 544.1,365.1 544.7,367.8 545.3,370.6 545.9,373.3 546.4,376.1 547,378.9 547.6,381.6 548.2,384.4 548.8,387.2 549.3,389.9 549.9,392.7 550.5,395.4 551.1,398.2 551.6,401 552.2,403.7 552.8,406.5" fill="none" stroke="#301818" stroke-width="0.75" opacity="0.85"/>
<polyline points="545.5,357 546.1,359.7 546.7,362.3 547.4,365 548,367.7 548.6,370.4 549.2,373.1 549.9,375.7 550.5,378.4 551.1,381.1 551.7,383.8 552.3,386.5 553,389.2 553.6,391.8 554.2,394.5 554.8,397.2 555.5,399.9 556.1,402.6 556.7,405.2 557.3,407.9 558,410.6" fill="none" stroke="#301818" stroke-width="0.75" opacity="0.85"/>
<polyline points="549.9,362.2 550.6,364.9 551.3,367.5 551.9,370.1 552.6,372.7 553.2,375.4 553.9,378 554.5,380.6 555.2,383.2 555.9,385.8 556.5,388.5 557.2,391.1 557.8,393.7 558.5,396.3 559.2,399 559.8,401.6 560.5,404.2 561.1,406.8 561.8,409.5 562.4,412.1 563.1,414.7" fill="none" stroke="#301818" stroke-width="0.75" opacity="0.85"/>
<polyline points="554.6,367 555.3,369.6 555.9,372.2 556.6,374.8 557.3,377.4 558,380 558.7,382.6 559.4,385.1 560,387.7 560.7,390.3 561.4,392.9 562.1,395.5 562.8,398.1 563.5,400.7 564.1,403.3 564.8,405.9 565.5,408.4 566.2,411 566.9,413.6 567.6,416.2 568.2,418.8" fill="none" stroke="#301818" stroke-width="0.75" opacity="0.85"/>
<polyline points="559.4,371.3 560.1,373.9 560.8,376.5 561.5,379.1 562.2,381.6 562.9,384.2 563.6,386.8 564.3,389.4 565,392 565.7,394.5 566.4,397.1 567.1,399.7 567.8,402.3 568.5,404.8 569.2,407.4 569.9,410 570.6,412.6 571.3,415.2 572,417.7 572.7,420.3 573.4,422.9" fill="none" stroke="#301818" stroke-width="0.75" opacity="0.85"/>
<polyline points="564.4,375.1 565.1,377.7 565.8,380.3 566.5,382.9 567.2,385.5 567.9,388.1 568.7,390.7 569.4,393.3 570.1,395.9 570.8,398.5 571.5,401.1 572.2,403.7 572.9,406.3 573.6,408.8 574.3,411.4 575,414 575.7,416.6 576.4,419.2 577.1,421.8 577.8,424.4 578.5,427" fill="none" stroke="#301818" stroke-width="0.75" opacity="0.85"/>
<polyline points="569.6,378.5 570.3,381.1 571,383.7 571.7,386.4 572.4,389 573.1,391.6 573.8,394.3 574.5,396.9 575.2,399.5 576,402.2 576.7,404.8 577.4,407.4 578.1,410.1 578.8,412.7 579.5,415.3 580.2,417.9 580.9,420.6 581.6,423.2 582.3,425.8 583,428.5 583.7,431.1" fill="none" stroke="#301818" stroke-width="0.75" opacity="0.85"/>
<polyline points="575,381.3 575.7,384 576.4,386.7 577.1,389.4 577.8,392.1 578.5,394.8 579.2,397.5 579.8,400.2 580.5,402.9 581.2,405.6 581.9,408.3 582.6,411 583.3,413.7 584,416.3 584.7,419 585.4,421.7 586.1,424.4 586.8,427.1 587.5,429.8 588.2,432.5 588.8,435.2" fill="none" stroke="#301818" stroke-width="0.75" opacity="0.85"/>
<polyline points="580.6,383.7 581.2,386.5 581.9,389.3 582.6,392 583.3,394.8 583.9,397.6 584.6,400.4 585.3,403.2 585.9,405.9 586.6,408.7 587.3,411.5 588,414.3 588.6,417.1 589.3,419.8 590,422.6 590.6,425.4 591.3,428.2 592,431 592.7,433.7 593.3,436.5 594,439.3" fill="none" stroke="#301818" stroke-width="0.75" opacity="0.85"/>
<polyline points="586.3,385.6 587,388.5 587.6,391.4 588.3,394.3 588.9,397.2 589.5,400 590.2,402.9 590.8,405.8 591.5,408.7 592.1,411.6 592.7,414.5 593.4,417.4 594,420.3 594.7,423.2 595.3,426.1 595.9,428.9 596.6,431.8 597.2,434.7 597.9,437.6 598.5,440.5 599.1,443.4" fill="none" stroke="#301818" stroke-width="0.75" opacity="0.85"/>
<polyline points="534.1,343.8 535.7,346.4 537.3,349 538.9,351.5 540.6,353.9 542.3,356.3 544,358.6 545.8,360.8 547.5,362.9 549.3,365 551.1,367 553,369 554.9,370.8 556.8,372.6 558.7,374.4 560.7,376 562.7,377.6 564.7,379.1 566.7,380.6 568.8,382 570.9,383.3 573,384.5 575.2,385.7 577.4,386.8 579.6,387.8 581.8,388.8 584.1,389.6 586.4,390.5 588.7,391.2 591,391.9 593.4,392.5" fill="none" stroke="#301818" stroke-width="0.75" opacity="0.85"/>
<polyline points="535,349.2 536.6,351.8 538.2,354.2 539.9,356.6 541.6,359 543.3,361.3 545.1,363.5 546.9,365.7 548.7,367.8 550.5,369.8 552.3,371.8 554.2,373.7 556.1,375.5 558,377.3 560,379 561.9,380.7 563.9,382.3 566,383.8 568,385.3 570.1,386.7 572.2,388 574.3,389.3 576.4,390.5 578.6,391.7 580.8,392.8 583,393.8 585.3,394.8 587.5,395.7 589.8,396.5 592.1,397.3 594.5,398" fill="none" stroke="#301818" stroke-width="0.75" opacity="0.85"/>
<polyline points="535.8,354.7 537.5,357.1 539.2,359.5 540.9,361.8 542.6,364.1 544.4,366.3 546.2,368.5 548,370.6 549.8,372.6 551.7,374.6 553.5,376.6 555.4,378.4 557.3,380.3 559.3,382 561.2,383.7 563.2,385.4 565.2,387 567.2,388.5 569.3,390 571.4,391.5 573.5,392.8 575.6,394.1 577.7,395.4 579.9,396.6 582,397.8 584.2,398.9 586.5,399.9 588.7,400.9 591,401.8 593.3,402.7 595.6,403.5" fill="none" stroke="#301818" stroke-width="0.75" opacity="0.85"/>
<polyline points="536.6,360.1 538.4,362.5 540.1,364.8 541.9,367 543.6,369.2 545.4,371.3 547.3,373.4 549.1,375.5 551,377.5 552.8,379.4 554.7,381.3 556.6,383.2 558.6,385 560.5,386.7 562.5,388.4 564.5,390.1 566.5,391.7 568.5,393.2 570.6,394.7 572.6,396.2 574.7,397.6 576.8,399 579,400.3 581.1,401.5 583.3,402.8 585.5,403.9 587.7,405 589.9,406.1 592.1,407.1 594.4,408.1 596.7,409" fill="none" stroke="#301818" stroke-width="0.75" opacity="0.85"/>
<polyline points="537.5,365.6 539.3,367.8 541,370 542.8,372.2 544.7,374.3 546.5,376.4 548.3,378.4 550.2,380.4 552.1,382.3 554,384.2 555.9,386.1 557.9,387.9 559.8,389.7 561.8,391.4 563.8,393.1 565.8,394.8 567.8,396.4 569.8,397.9 571.9,399.5 573.9,401 576,402.4 578.1,403.8 580.2,405.2 582.4,406.5 584.5,407.7 586.7,409 588.9,410.2 591.1,411.3 593.3,412.4 595.5,413.5 597.8,414.5" fill="none" stroke="#301818" stroke-width="0.75" opacity="0.85"/>
<polyline points="538.3,371 540.1,373.2 542,375.3 543.8,377.3 545.7,379.4 547.5,381.4 549.4,383.3 551.3,385.3 553.2,387.2 555.2,389 557.1,390.9 559.1,392.6 561,394.4 563,396.1 565,397.8 567,399.5 569.1,401.1 571.1,402.7 573.2,404.2 575.2,405.7 577.3,407.2 579.4,408.6 581.5,410 583.6,411.4 585.8,412.7 587.9,414 590.1,415.3 592.2,416.5 594.4,417.7 596.6,418.9 598.8,420" fill="none" stroke="#301818" stroke-width="0.75" opacity="0.85"/>
<polyline points="539.2,376.5 541,378.5 542.9,380.5 544.8,382.5 546.7,384.5 548.6,386.4 550.5,388.3 552.5,390.2 554.4,392 556.4,393.8 558.3,395.6 560.3,397.4 562.3,399.1 564.3,400.8 566.3,402.5 568.3,404.1 570.3,405.8 572.4,407.4 574.4,408.9 576.5,410.5 578.6,412 580.7,413.4 582.8,414.9 584.9,416.3 587,417.7 589.1,419.1 591.3,420.4 593.4,421.7 595.6,423 597.8,424.3 599.9,425.5" fill="none" stroke="#301818" stroke-width="0.75" opacity="0.85"/>
<polyline points="540,381.9 541.9,383.9 543.8,385.8 545.8,387.7 547.7,389.6 549.6,391.4 551.6,393.3 553.6,395.1 555.5,396.9 557.5,398.6 559.5,400.4 561.5,402.1 563.5,403.8 565.5,405.5 567.6,407.2 569.6,408.8 571.6,410.5 573.7,412.1 575.7,413.6 577.8,415.2 579.9,416.7 581.9,418.3 584,419.8 586.1,421.2 588.2,422.7 590.3,424.1 592.5,425.6 594.6,426.9 596.7,428.3 598.9,429.7 601,431" fill="none" stroke="#301818" stroke-width="0.75" opacity="0.85"/>
<polyline points="540.8,387.4 542.8,389.2 544.8,391.1 546.7,392.9 548.7,394.7 550.7,396.5 552.7,398.2 554.7,400 556.7,401.7 558.7,403.4 560.7,405.2 562.7,406.9 564.8,408.5 566.8,410.2 568.8,411.9 570.9,413.5 572.9,415.2 575,416.8 577,418.4 579.1,420 581.1,421.5 583.2,423.1 585.3,424.6 587.4,426.2 589.5,427.7 591.6,429.2 593.7,430.7 595.8,432.2 597.9,433.6 600,435.1 602.1,436.5" fill="none" stroke="#301818" stroke-width="0.75" opacity="0.85"/>
<polyline points="541.7,392.8 543.7,394.6 545.7,396.3 547.7,398 549.7,399.8 551.7,401.5 553.8,403.2 555.8,404.9 557.8,406.6 559.9,408.3 561.9,409.9 563.9,411.6 566,413.3 568,414.9 570.1,416.6 572.1,418.2 574.2,419.8 576.2,421.5 578.3,423.1 580.4,424.7 582.4,426.3 584.5,427.9 586.6,429.5 588.6,431.1 590.7,432.7 592.8,434.2 594.9,435.8 596.9,437.4 599,438.9 601.1,440.5 603.2,442" fill="none" stroke="#301818" stroke-width="0.75" opacity="0.85"/>
<path d="M805.8,296q-0.4,5 2.2,5.2q2.6,-0.2 2.2,-5.2M808.9,298.5q-0.4,5 2.2,5.2q2.6,-0.2 2.2,-5.2M812,301q-0.4,5 2.2,5.2q2.6,-0.2 2.2,-5.2M815.1,303.5q-0.4,5 2.2,5.2q2.6,-0.2 2.2,-5.2M818.2,306.1q-0.4,5 2.2,5.2q2.6,-0.2 2.2,-5.2M821.2,308.6q-0.4,5 2.2,5.2q2.6,-0.2 2.2,-5.2M824.3,311.1q-0.4,5 2.2,5.2q2.6,-0.2 2.2,-5.2M827.4,313.6q-0.4,5 2.2,5.2q2.6,-0.2 2.2,-5.2M830.5,316.1q-0.4,5 2.2,5.2q2.6,-0.2 2.2,-5.2M833.6,318.6q-0.4,5 2.2,5.2q2.6,-0.2 2.2,-5.2M836.7,321.1q-0.4,5 2.2,5.2q2.6,-0.2 2.2,-5.2M839.8,323.7q-0.4,5 2.2,5.2q2.6,-0.2 2.2,-5.2M842.9,326.2q-0.4,5 2.2,5.2q2.6,-0.2 2.2,-5.2M846,328.7q-0.4,5 2.2,5.2q2.6,-0.2 2.2,-5.2M849.1,331.2q-0.4,5 2.2,5.2q2.6,-0.2 2.2,-5.2M852.1,333.7q-0.4,5 2.2,5.2q2.6,-0.2 2.2,-5.2M855.2,336.2q-0.4,5 2.2,5.2q2.6,-0.2 2.2,-5.2M858.3,338.8q-0.4,5 2.2,5.2q2.6,-0.2 2.2,-5.2M861.4,341.3q-0.4,5 2.2,5.2q2.6,-0.2 2.2,-5.2M864.5,343.8q-0.4,5 2.2,5.2q2.6,-0.2 2.2,-5.2M867.6,346.3q-0.4,5 2.2,5.2q2.6,-0.2 2.2,-5.2" stroke="#38a838" stroke-width="1" fill="none"/>
<line x1="808" y1="295.5" x2="869.8" y2="345.8" stroke="#38a838" stroke-width="0.9" />
<polygon points="801.7,235.3 803.5,238.3 805.2,241.2 807,244 808.9,246.7 810.7,249.4 812.6,251.9 814.4,254.3 816.3,256.7 818.2,258.9 820.2,261 822.1,263.1 824.1,265.1 826.1,266.9 828.1,268.7 830.1,270.4 832.2,272 834.2,273.4 836.3,274.8 838.4,276.1 840.5,277.3 842.7,278.5 844.8,279.5 847,280.4 849.2,281.2 851.4,282 853.7,282.6 855.9,283.1 858.2,283.6 860.5,283.9 862.8,284.2 871.3,345.3 869.2,343.6 867.2,341.9 865.1,340.3 863.1,338.6 861,336.9 858.9,335.2 856.9,333.6 854.8,331.9 852.8,330.2 850.7,328.5 848.6,326.9 846.6,325.2 844.5,323.5 842.5,321.8 840.4,320.1 838.3,318.5 836.3,316.8 834.2,315.1 832.2,313.4 830.1,311.8 828,310.1 826,308.4 823.9,306.7 821.9,305.1 819.8,303.4 817.7,301.7 815.7,300 813.6,298.4 811.6,296.7 809.5,295" fill="#c000c8" stroke="none" stroke-width="1" />
<polygon points="801.7,235.3 803.5,238.3 805.2,241.2 807,244 808.9,246.7 810.7,249.4 812.6,251.9 814.4,254.3 816.3,256.7 818.2,258.9 820.2,261 822.1,263.1 824.1,265.1 826.1,266.9 828.1,268.7 830.1,270.4 832.2,272 834.2,273.4 836.3,274.8 838.4,276.1 840.5,277.3 842.7,278.5 844.8,279.5 847,280.4 849.2,281.2 851.5,282 853.8,283.5 856.2,285 858.7,286.8 861.2,288.9 863.8,291.2 871.3,345.3 869.2,343.6 867.2,341.9 865.1,340.3 863.1,338.6 861,336.9 858.9,335.2 856.9,333.6 854.8,331.9 852.8,330.2 850.7,328.5 848.6,326.9 846.6,325.2 844.5,323.5 842.5,321.8 840.4,320.1 838.3,318.5 836.3,316.8 834.2,315.1 832.2,313.4 830.1,311.8 828,310.1 826,308.4 823.9,306.7 821.9,305.1 819.8,303.4 817.7,301.7 815.7,300 813.6,298.4 811.6,296.7 809.5,295" fill="#ff0000" stroke="none" stroke-width="1" />
<polygon points="802,237.6 803.8,240.5 805.6,243.4 807.4,246.1 809.2,248.8 811,251.4 812.9,253.9 814.8,256.3 816.7,258.6 818.6,260.8 820.6,263 822.5,265 824.5,267 826.5,268.8 828.5,270.6 830.5,272.3 832.6,273.9 834.6,275.4 836.7,276.9 838.9,278.3 841,279.6 843.2,280.9 845.4,282.2 847.6,283.4 849.8,284.7 852.2,286.1 854.5,287.5 856.9,289.1 859.3,290.9 861.8,292.9 864.3,295.2 871.3,345.3 869.2,343.6 867.2,341.9 865.1,340.3 863.1,338.6 861,336.9 858.9,335.2 856.9,333.6 854.8,331.9 852.8,330.2 850.7,328.5 848.6,326.9 846.6,325.2 844.5,323.5 842.5,321.8 840.4,320.1 838.3,318.5 836.3,316.8 834.2,315.1 832.2,313.4 830.1,311.8 828,310.1 826,308.4 823.9,306.7 821.9,305.1 819.8,303.4 817.7,301.7 815.7,300 813.6,298.4 811.6,296.7 809.5,295" fill="#ff5000" stroke="none" stroke-width="1" />
<polygon points="802.6,242 804.4,244.9 806.2,247.7 808,250.3 809.9,252.9 811.7,255.5 813.6,257.9 815.5,260.2 817.4,262.5 819.4,264.7 821.3,266.8 823.3,268.8 825.2,270.7 827.2,272.6 829.3,274.3 831.3,276 833.3,277.6 835.4,279.2 837.5,280.6 839.6,282.1 841.8,283.4 843.9,284.7 846.1,286 848.3,287.3 850.6,288.7 852.8,290 855.2,291.5 857.5,293.1 859.9,294.8 862.4,296.8 864.9,299.1 871.3,345.3 869.2,343.6 867.2,341.9 865.1,340.3 863.1,338.6 861,336.9 858.9,335.2 856.9,333.6 854.8,331.9 852.8,330.2 850.7,328.5 848.6,326.9 846.6,325.2 844.5,323.5 842.5,321.8 840.4,320.1 838.3,318.5 836.3,316.8 834.2,315.1 832.2,313.4 830.1,311.8 828,310.1 826,308.4 823.9,306.7 821.9,305.1 819.8,303.4 817.7,301.7 815.7,300 813.6,298.4 811.6,296.7 809.5,295" fill="#ffa000" stroke="none" stroke-width="1" />
<polygon points="803.4,248.6 805.3,251.4 807.1,254 809,256.5 810.8,259 812.7,261.4 814.6,263.8 816.6,266 818.5,268.2 820.4,270.3 822.4,272.4 824.4,274.4 826.4,276.3 828.4,278.1 830.4,279.8 832.4,281.5 834.5,283.2 836.5,284.7 838.6,286.2 840.7,287.7 842.9,289.1 845,290.4 847.2,291.8 849.4,293.1 851.6,294.5 853.9,295.9 856.1,297.4 858.5,299 860.8,300.7 863.2,302.7 865.7,304.9 871.3,345.3 869.2,343.6 867.2,341.9 865.1,340.3 863.1,338.6 861,336.9 858.9,335.2 856.9,333.6 854.8,331.9 852.8,330.2 850.7,328.5 848.6,326.9 846.6,325.2 844.5,323.5 842.5,321.8 840.4,320.1 838.3,318.5 836.3,316.8 834.2,315.1 832.2,313.4 830.1,311.8 828,310.1 826,308.4 823.9,306.7 821.9,305.1 819.8,303.4 817.7,301.7 815.7,300 813.6,298.4 811.6,296.7 809.5,295" fill="#ffff00" stroke="none" stroke-width="1" />
<polygon points="804,253 805.9,255.6 807.7,258.1 809.6,260.6 811.5,263 813.4,265.4 815.3,267.6 817.2,269.8 819.2,272 821.1,274.1 823.1,276.1 825.1,278 827.1,279.9 829.1,281.7 831.1,283.5 833.2,285.1 835.2,286.8 837.3,288.3 839.4,289.8 841.5,291.3 843.6,292.7 845.7,294.1 847.9,295.5 850.1,296.9 852.3,298.3 854.5,299.7 856.8,301.2 859.1,302.8 861.4,304.6 863.8,306.5 866.2,308.6 871.3,345.3 869.2,343.6 867.2,341.9 865.1,340.3 863.1,338.6 861,336.9 858.9,335.2 856.9,333.6 854.8,331.9 852.8,330.2 850.7,328.5 848.6,326.9 846.6,325.2 844.5,323.5 842.5,321.8 840.4,320.1 838.3,318.5 836.3,316.8 834.2,315.1 832.2,313.4 830.1,311.8 828,310.1 826,308.4 823.9,306.7 821.9,305.1 819.8,303.4 817.7,301.7 815.7,300 813.6,298.4 811.6,296.7 809.5,295" fill="#b0f000" stroke="none" stroke-width="1" />
<polygon points="804.6,257.2 806.4,259.8 808.3,262.2 810.2,264.6 812.1,266.9 814,269.2 816,271.4 817.9,273.6 819.9,275.7 821.8,277.7 823.8,279.7 825.8,281.6 827.8,283.5 829.8,285.3 831.9,287 833.9,288.7 836,290.3 838,291.9 840.1,293.4 842.2,294.9 844.3,296.4 846.5,297.8 848.6,299.2 850.8,300.6 853,302 855.2,303.5 857.4,305 859.7,306.6 862,308.4 864.3,310.3 866.7,312.4 871.3,345.3 869.2,343.6 867.2,341.9 865.1,340.3 863.1,338.6 861,336.9 858.9,335.2 856.9,333.6 854.8,331.9 852.8,330.2 850.7,328.5 848.6,326.9 846.6,325.2 844.5,323.5 842.5,321.8 840.4,320.1 838.3,318.5 836.3,316.8 834.2,315.1 832.2,313.4 830.1,311.8 828,310.1 826,308.4 823.9,306.7 821.9,305.1 819.8,303.4 817.7,301.7 815.7,300 813.6,298.4 811.6,296.7 809.5,295" fill="#60f000" stroke="none" stroke-width="1" />
<polygon points="805.1,261.4 807,263.9 808.9,266.2 810.8,268.5 812.8,270.8 814.7,273 816.6,275.2 818.6,277.3 820.6,279.3 822.5,281.3 824.5,283.3 826.5,285.1 828.5,287 830.6,288.8 832.6,290.5 834.6,292.2 836.7,293.8 838.7,295.4 840.8,297 842.9,298.5 845,299.9 847.2,301.4 849.3,302.8 851.4,304.3 853.6,305.7 855.8,307.2 858.1,308.7 860.3,310.4 862.6,312.1 864.9,314 867.2,316 871.3,345.3 869.2,343.6 867.2,341.9 865.1,340.3 863.1,338.6 861,336.9 858.9,335.2 856.9,333.6 854.8,331.9 852.8,330.2 850.7,328.5 848.6,326.9 846.6,325.2 844.5,323.5 842.5,321.8 840.4,320.1 838.3,318.5 836.3,316.8 834.2,315.1 832.2,313.4 830.1,311.8 828,310.1 826,308.4 823.9,306.7 821.9,305.1 819.8,303.4 817.7,301.7 815.7,300 813.6,298.4 811.6,296.7 809.5,295" fill="#20f040" stroke="none" stroke-width="1" />
<polygon points="805.9,267.6 807.8,269.9 809.8,272.1 811.7,274.3 813.7,276.5 815.6,278.6 817.6,280.6 819.6,282.7 821.5,284.6 823.5,286.6 825.5,288.5 827.6,290.3 829.6,292.1 831.6,293.9 833.6,295.6 835.7,297.3 837.7,298.9 839.8,300.6 841.9,302.1 844,303.7 846.1,305.2 848.2,306.7 850.3,308.2 852.4,309.6 854.6,311.1 856.8,312.6 859,314.2 861.2,315.8 863.4,317.6 865.7,319.4 868,321.4 871.3,345.3 869.2,343.6 867.2,341.9 865.1,340.3 863.1,338.6 861,336.9 858.9,335.2 856.9,333.6 854.8,331.9 852.8,330.2 850.7,328.5 848.6,326.9 846.6,325.2 844.5,323.5 842.5,321.8 840.4,320.1 838.3,318.5 836.3,316.8 834.2,315.1 832.2,313.4 830.1,311.8 828,310.1 826,308.4 823.9,306.7 821.9,305.1 819.8,303.4 817.7,301.7 815.7,300 813.6,298.4 811.6,296.7 809.5,295" fill="#00f880" stroke="none" stroke-width="1" />
<polygon points="806.4,271.6 808.4,273.8 810.3,275.9 812.3,278 814.3,280.1 816.2,282.2 818.2,284.2 820.2,286.2 822.2,288.1 824.2,290 826.2,291.9 828.2,293.7 830.2,295.5 832.3,297.2 834.3,298.9 836.4,300.6 838.4,302.3 840.5,303.9 842.6,305.5 844.6,307 846.7,308.6 848.8,310.1 851,311.6 853.1,313.1 855.2,314.6 857.4,316.2 859.6,317.7 861.8,319.4 864,321.1 866.2,322.9 868.5,324.9 871.3,345.3 869.2,343.6 867.2,341.9 865.1,340.3 863.1,338.6 861,336.9 858.9,335.2 856.9,333.6 854.8,331.9 852.8,330.2 850.7,328.5 848.6,326.9 846.6,325.2 844.5,323.5 842.5,321.8 840.4,320.1 838.3,318.5 836.3,316.8 834.2,315.1 832.2,313.4 830.1,311.8 828,310.1 826,308.4 823.9,306.7 821.9,305.1 819.8,303.4 817.7,301.7 815.7,300 813.6,298.4 811.6,296.7 809.5,295" fill="#18d8b8" stroke="none" stroke-width="1" />
<polygon points="806.9,275.5 808.9,277.6 810.9,279.6 812.9,281.7 814.8,283.7 816.8,285.7 818.8,287.6 820.8,289.6 822.8,291.5 824.8,293.3 826.9,295.2 828.9,297 830.9,298.7 832.9,300.5 835,302.2 837,303.9 839.1,305.5 841.2,307.1 843.2,308.7 845.3,310.3 847.4,311.9 849.5,313.4 851.6,315 853.7,316.5 855.8,318 858,319.6 860.1,321.2 862.3,322.9 864.5,324.6 866.7,326.4 868.9,328.2 871.3,345.3 869.2,343.6 867.2,341.9 865.1,340.3 863.1,338.6 861,336.9 858.9,335.2 856.9,333.6 854.8,331.9 852.8,330.2 850.7,328.5 848.6,326.9 846.6,325.2 844.5,323.5 842.5,321.8 840.4,320.1 838.3,318.5 836.3,316.8 834.2,315.1 832.2,313.4 830.1,311.8 828,310.1 826,308.4 823.9,306.7 821.9,305.1 819.8,303.4 817.7,301.7 815.7,300 813.6,298.4 811.6,296.7 809.5,295" fill="#00d8f8" stroke="none" stroke-width="1" />
<polygon points="807.7,281.1 809.7,283.1 811.7,285 813.7,287 815.7,288.9 817.7,290.8 819.7,292.6 821.7,294.5 823.7,296.3 825.8,298.1 827.8,299.9 829.8,301.7 831.9,303.4 833.9,305.2 836,306.9 838,308.5 840.1,310.2 842.1,311.8 844.2,313.5 846.3,315.1 848.3,316.7 850.4,318.2 852.5,319.8 854.6,321.4 856.7,323 858.9,324.6 861,326.2 863.1,327.9 865.3,329.6 867.4,331.3 869.6,333.1 871.3,345.3 869.2,343.6 867.2,341.9 865.1,340.3 863.1,338.6 861,336.9 858.9,335.2 856.9,333.6 854.8,331.9 852.8,330.2 850.7,328.5 848.6,326.9 846.6,325.2 844.5,323.5 842.5,321.8 840.4,320.1 838.3,318.5 836.3,316.8 834.2,315.1 832.2,313.4 830.1,311.8 828,310.1 826,308.4 823.9,306.7 821.9,305.1 819.8,303.4 817.7,301.7 815.7,300 813.6,298.4 811.6,296.7 809.5,295" fill="#00a8f8" stroke="none" stroke-width="1" />
<polygon points="808.1,284.6 810.2,286.5 812.2,288.4 814.2,290.3 816.2,292.2 818.2,294 820.2,295.8 822.3,297.6 824.3,299.4 826.3,301.2 828.4,303 830.4,304.7 832.5,306.4 834.5,308.1 836.6,309.8 838.6,311.5 840.7,313.2 842.7,314.8 844.8,316.5 846.9,318.1 848.9,319.7 851,321.3 853.1,322.9 855.2,324.5 857.3,326.1 859.4,327.7 861.5,329.4 863.6,331 865.8,332.7 867.9,334.5 870,336.3 871.3,345.3 869.2,343.6 867.2,341.9 865.1,340.3 863.1,338.6 861,336.9 858.9,335.2 856.9,333.6 854.8,331.9 852.8,330.2 850.7,328.5 848.6,326.9 846.6,325.2 844.5,323.5 842.5,321.8 840.4,320.1 838.3,318.5 836.3,316.8 834.2,315.1 832.2,313.4 830.1,311.8 828,310.1 826,308.4 823.9,306.7 821.9,305.1 819.8,303.4 817.7,301.7 815.7,300 813.6,298.4 811.6,296.7 809.5,295" fill="#0050f8" stroke="none" stroke-width="1" />
<polygon points="808.6,288 810.6,289.9 812.6,291.7 814.7,293.5 816.7,295.3 818.7,297.1 820.8,298.8 822.8,300.6 824.9,302.4 826.9,304.1 828.9,305.8 831,307.6 833,309.3 835.1,311 837.1,312.7 839.2,314.3 841.3,316 843.3,317.7 845.4,319.3 847.5,321 849.5,322.6 851.6,324.2 853.7,325.8 855.8,327.5 857.8,329.1 859.9,330.7 862,332.4 864.1,334.1 866.2,335.7 868.3,337.5 870.5,339.2 871.3,345.3 869.2,343.6 867.2,341.9 865.1,340.3 863.1,338.6 861,336.9 858.9,335.2 856.9,333.6 854.8,331.9 852.8,330.2 850.7,328.5 848.6,326.9 846.6,325.2 844.5,323.5 842.5,321.8 840.4,320.1 838.3,318.5 836.3,316.8 834.2,315.1 832.2,313.4 830.1,311.8 828,310.1 826,308.4 823.9,306.7 821.9,305.1 819.8,303.4 817.7,301.7 815.7,300 813.6,298.4 811.6,296.7 809.5,295" fill="#0000f0" stroke="none" stroke-width="1" />
<polygon points="809.2,292.6 811.2,294.4 813.3,296.1 815.3,297.8 817.4,299.5 819.4,301.2 821.5,302.9 823.5,304.7 825.6,306.4 827.7,308.1 829.7,309.7 831.8,311.4 833.8,313.1 835.9,314.8 837.9,316.5 840,318.2 842.1,319.8 844.1,321.5 846.2,323.2 848.2,324.8 850.3,326.5 852.4,328.2 854.4,329.8 856.5,331.5 858.6,333.2 860.6,334.8 862.7,336.5 864.8,338.2 866.9,339.8 868.9,341.5 871,343.2 871.3,345.3 869.2,343.6 867.2,341.9 865.1,340.3 863.1,338.6 861,336.9 858.9,335.2 856.9,333.6 854.8,331.9 852.8,330.2 850.7,328.5 848.6,326.9 846.6,325.2 844.5,323.5 842.5,321.8 840.4,320.1 838.3,318.5 836.3,316.8 834.2,315.1 832.2,313.4 830.1,311.8 828,310.1 826,308.4 823.9,306.7 821.9,305.1 819.8,303.4 817.7,301.7 815.7,300 813.6,298.4 811.6,296.7 809.5,295" fill="#0c1470" stroke="none" stroke-width="1" />
<polyline points="806.1,242.6 806.6,245.5 807,248.3 807.4,251.1 807.8,253.9 808.3,256.8 808.7,259.6 809.1,262.4 809.5,265.2 810,268.1 810.4,270.9 810.8,273.7 811.2,276.6 811.7,279.4 812.1,282.2 812.5,285 812.9,287.9 813.4,290.7 813.8,293.5 814.2,296.4 814.6,299.2" fill="none" stroke="#301818" stroke-width="0.75" opacity="0.85"/>
<polyline points="810.7,249.4 811.2,252.1 811.6,254.8 812.1,257.5 812.5,260.2 813,262.9 813.4,265.6 813.9,268.3 814.3,271 814.8,273.7 815.3,276.4 815.7,279.1 816.2,281.8 816.6,284.5 817.1,287.2 817.5,289.9 818,292.6 818.4,295.3 818.9,298 819.3,300.7 819.8,303.4" fill="none" stroke="#301818" stroke-width="0.75" opacity="0.85"/>
<polyline points="815.4,255.5 815.9,258.1 816.3,260.7 816.8,263.3 817.3,265.9 817.8,268.5 818.3,271.1 818.7,273.7 819.2,276.3 819.7,278.9 820.2,281.5 820.6,284.1 821.1,286.7 821.6,289.3 822.1,292 822.6,294.6 823,297.2 823.5,299.8 824,302.4 824.5,305 825,307.6" fill="none" stroke="#301818" stroke-width="0.75" opacity="0.85"/>
<polyline points="820.2,261 820.7,263.6 821.2,266.1 821.7,268.7 822.2,271.2 822.7,273.7 823.2,276.3 823.7,278.8 824.1,281.3 824.6,283.9 825.1,286.4 825.6,288.9 826.1,291.5 826.6,294 827.1,296.6 827.6,299.1 828.1,301.6 828.6,304.2 829.1,306.7 829.6,309.2 830.1,311.8" fill="none" stroke="#301818" stroke-width="0.75" opacity="0.85"/>
<polyline points="825.1,266 825.6,268.5 826.1,271 826.6,273.5 827.1,276 827.6,278.5 828.1,281 828.6,283.5 829.2,286 829.7,288.5 830.2,291 830.7,293.5 831.2,296 831.7,298.5 832.2,301 832.7,303.5 833.2,306 833.7,308.5 834.2,311 834.7,313.5 835.2,316" fill="none" stroke="#301818" stroke-width="0.75" opacity="0.85"/>
<polyline points="830.1,270.4 830.6,272.9 831.2,275.4 831.7,277.8 832.2,280.3 832.7,282.8 833.2,285.3 833.7,287.8 834.2,290.3 834.7,292.8 835.3,295.3 835.8,297.8 836.3,300.2 836.8,302.7 837.3,305.2 837.8,307.7 838.3,310.2 838.9,312.7 839.4,315.2 839.9,317.7 840.4,320.1" fill="none" stroke="#301818" stroke-width="0.75" opacity="0.85"/>
<polyline points="835.3,274.2 835.8,276.7 836.3,279.2 836.8,281.7 837.3,284.2 837.8,286.7 838.4,289.2 838.9,291.7 839.4,294.2 839.9,296.7 840.4,299.2 840.9,301.8 841.4,304.3 842,306.8 842.5,309.3 843,311.8 843.5,314.3 844,316.8 844.5,319.3 845,321.8 845.5,324.3" fill="none" stroke="#301818" stroke-width="0.75" opacity="0.85"/>
<polyline points="840.5,277.3 841.1,279.9 841.6,282.5 842.1,285 842.6,287.6 843.1,290.1 843.6,292.7 844.1,295.3 844.6,297.8 845.1,300.4 845.6,302.9 846.1,305.5 846.6,308.1 847.1,310.6 847.7,313.2 848.2,315.7 848.7,318.3 849.2,320.9 849.7,323.4 850.2,326 850.7,328.5" fill="none" stroke="#301818" stroke-width="0.75" opacity="0.85"/>
<polyline points="845.9,279.9 846.4,282.6 846.9,285.2 847.4,287.9 847.9,290.5 848.4,293.1 848.9,295.8 849.4,298.4 849.9,301.1 850.4,303.7 850.9,306.3 851.4,309 851.9,311.6 852.4,314.3 852.9,316.9 853.4,319.5 853.9,322.2 854.4,324.8 854.9,327.4 855.4,330.1 855.8,332.7" fill="none" stroke="#301818" stroke-width="0.75" opacity="0.85"/>
<polyline points="851.4,282 851.9,284.7 852.4,287.4 852.9,290.2 853.3,292.9 853.8,295.7 854.3,298.4 854.8,301.2 855.3,303.9 855.7,306.7 856.2,309.4 856.7,312.2 857.2,314.9 857.7,317.7 858.1,320.4 858.6,323.2 859.1,325.9 859.6,328.7 860,331.4 860.5,334.2 861,336.9" fill="none" stroke="#301818" stroke-width="0.75" opacity="0.85"/>
<polyline points="857.1,283.4 857.5,286.3 858,289.1 858.4,292 858.9,294.9 859.3,297.8 859.8,300.7 860.2,303.6 860.7,306.5 861.1,309.4 861.6,312.2 862.1,315.1 862.5,318 863,320.9 863.4,323.8 863.9,326.7 864.3,329.6 864.8,332.4 865.2,335.3 865.7,338.2 866.1,341.1" fill="none" stroke="#301818" stroke-width="0.75" opacity="0.85"/>
<polyline points="802.4,240.7 804.2,243.6 806,246.4 807.8,249.1 809.7,251.7 811.5,254.3 813.4,256.7 815.3,259.1 817.2,261.4 819.1,263.5 821.1,265.7 823,267.7 825,269.6 827,271.5 829,273.2 831.1,274.9 833.1,276.5 835.2,278 837.3,279.4 839.4,280.8 841.5,282 843.6,283.2 845.8,284.2 847.9,285.2 850.1,286.1 852.3,286.9 854.5,287.7 856.8,288.3 859,288.9 861.3,289.4 863.6,289.8" fill="none" stroke="#301818" stroke-width="0.75" opacity="0.85"/>
<polyline points="803.1,246.2 804.9,248.9 806.8,251.6 808.6,254.2 810.5,256.7 812.4,259.2 814.3,261.5 816.2,263.8 818.1,266.1 820,268.2 822,270.3 824,272.3 825.9,274.2 827.9,276 830,277.7 832,279.4 834,281 836.1,282.5 838.2,284 840.3,285.4 842.4,286.7 844.5,287.9 846.7,289 848.8,290.1 851,291 853.2,291.9 855.4,292.8 857.6,293.5 859.8,294.2 862.1,294.8 864.3,295.3" fill="none" stroke="#301818" stroke-width="0.75" opacity="0.85"/>
<polyline points="803.8,251.6 805.7,254.2 807.5,256.8 809.4,259.3 811.3,261.7 813.2,264.1 815.1,266.4 817,268.6 819,270.8 820.9,272.9 822.9,274.9 824.9,276.8 826.9,278.7 828.9,280.5 830.9,282.3 832.9,283.9 835,285.6 837,287.1 839.1,288.6 841.2,290 843.3,291.3 845.4,292.6 847.6,293.8 849.7,294.9 851.9,296 854,296.9 856.2,297.9 858.4,298.7 860.6,299.5 862.9,300.2 865.1,300.9" fill="none" stroke="#301818" stroke-width="0.75" opacity="0.85"/>
<polyline points="804.5,257 806.4,259.5 808.3,262 810.2,264.4 812.1,266.7 814,269 815.9,271.2 817.9,273.4 819.8,275.5 821.8,277.5 823.8,279.5 825.8,281.4 827.8,283.3 829.8,285.1 831.8,286.8 833.9,288.5 835.9,290.1 838,291.6 840.1,293.1 842.1,294.6 844.2,296 846.3,297.3 848.5,298.5 850.6,299.7 852.8,300.9 854.9,301.9 857.1,303 859.3,303.9 861.5,304.8 863.7,305.6 865.9,306.4" fill="none" stroke="#301818" stroke-width="0.75" opacity="0.85"/>
<polyline points="805.2,262.4 807.1,264.8 809.1,267.2 811,269.5 812.9,271.7 814.8,273.9 816.8,276.1 818.7,278.1 820.7,280.2 822.7,282.2 824.7,284.1 826.7,286 828.7,287.8 830.7,289.6 832.8,291.3 834.8,293 836.8,294.6 838.9,296.2 841,297.7 843.1,299.2 845.2,300.6 847.3,302 849.4,303.3 851.5,304.6 853.6,305.8 855.8,306.9 857.9,308 860.1,309.1 862.3,310.1 864.5,311.1 866.7,312" fill="none" stroke="#301818" stroke-width="0.75" opacity="0.85"/>
<polyline points="806,267.9 807.9,270.1 809.8,272.4 811.8,274.6 813.7,276.7 815.7,278.8 817.6,280.9 819.6,282.9 821.6,284.9 823.6,286.8 825.6,288.7 827.6,290.6 829.6,292.4 831.6,294.1 833.7,295.8 835.7,297.5 837.8,299.2 839.8,300.8 841.9,302.3 844,303.8 846.1,305.3 848.2,306.7 850.3,308.1 852.4,309.4 854.5,310.7 856.7,311.9 858.8,313.1 860.9,314.3 863.1,315.4 865.3,316.5 867.4,317.5" fill="none" stroke="#301818" stroke-width="0.75" opacity="0.85"/>
<polyline points="806.7,273.3 808.6,275.4 810.6,277.6 812.5,279.7 814.5,281.7 816.5,283.7 818.5,285.7 820.5,287.7 822.5,289.6 824.5,291.5 826.5,293.3 828.5,295.1 830.5,296.9 832.6,298.7 834.6,300.4 836.7,302.1 838.7,303.7 840.8,305.3 842.8,306.9 844.9,308.4 847,309.9 849.1,311.4 851.2,312.8 853.3,314.2 855.4,315.6 857.5,316.9 859.6,318.2 861.8,319.5 863.9,320.7 866.1,321.9 868.2,323.1" fill="none" stroke="#301818" stroke-width="0.75" opacity="0.85"/>
<polyline points="807.4,278.7 809.4,280.8 811.3,282.8 813.3,284.8 815.3,286.7 817.3,288.6 819.3,290.6 821.3,292.4 823.3,294.3 825.4,296.1 827.4,297.9 829.4,299.7 831.5,301.5 833.5,303.2 835.5,304.9 837.6,306.6 839.7,308.2 841.7,309.9 843.8,311.5 845.9,313 847.9,314.6 850,316.1 852.1,317.6 854.2,319.1 856.3,320.5 858.4,321.9 860.5,323.3 862.6,324.7 864.7,326 866.9,327.3 869,328.6" fill="none" stroke="#301818" stroke-width="0.75" opacity="0.85"/>
<polyline points="808.1,284.1 810.1,286.1 812.1,288 814.1,289.8 816.1,291.7 818.1,293.6 820.2,295.4 822.2,297.2 824.2,299 826.3,300.8 828.3,302.5 830.3,304.3 832.4,306 834.4,307.7 836.5,309.4 838.5,311.1 840.6,312.8 842.7,314.4 844.7,316 846.8,317.6 848.9,319.2 850.9,320.8 853,322.4 855.1,323.9 857.2,325.4 859.3,326.9 861.4,328.4 863.4,329.9 865.5,331.3 867.6,332.8 869.8,334.2" fill="none" stroke="#301818" stroke-width="0.75" opacity="0.85"/>
<polyline points="808.8,289.6 810.8,291.4 812.9,293.2 814.9,294.9 816.9,296.7 819,298.5 821,300.2 823.1,302 825.1,303.7 827.1,305.4 829.2,307.2 831.2,308.9 833.3,310.6 835.4,312.3 837.4,313.9 839.5,315.6 841.5,317.3 843.6,319 845.6,320.6 847.7,322.2 849.8,323.9 851.8,325.5 853.9,327.1 856,328.7 858.1,330.3 860.1,331.9 862.2,333.5 864.3,335.1 866.4,336.6 868.4,338.2 870.5,339.7" fill="none" stroke="#301818" stroke-width="0.75" opacity="0.85"/>
<line x1="533.3" y1="338.3" x2="548.6" y2="334.1" stroke="#c020d0" stroke-width="1.05" />
<line x1="548.6" y1="334.1" x2="564" y2="329.9" stroke="#e02090" stroke-width="1.05" />
<line x1="564" y1="329.9" x2="579.3" y2="325.7" stroke="#ff2040" stroke-width="1.05" />
<line x1="579.3" y1="325.7" x2="594.7" y2="321.5" stroke="#ff3030" stroke-width="1.05" />
<line x1="594.7" y1="321.5" x2="610" y2="317.3" stroke="#ff4020" stroke-width="1.05" />
<line x1="610" y1="317.3" x2="625.4" y2="313.1" stroke="#ff5020" stroke-width="1.05" />
<line x1="625.4" y1="313.1" x2="670" y2="297.2" stroke="#ff5a20" stroke-width="1.05" />
<line x1="670" y1="297.2" x2="715.2" y2="279.2" stroke="#ff5a20" stroke-width="1.05" />
<line x1="715.2" y1="279.2" x2="729.6" y2="271.9" stroke="#ff5020" stroke-width="1.05" />
<line x1="729.6" y1="271.9" x2="744" y2="264.6" stroke="#ff4020" stroke-width="1.05" />
<line x1="744" y1="264.6" x2="758.5" y2="257.2" stroke="#ff3030" stroke-width="1.05" />
<line x1="758.5" y1="257.2" x2="772.9" y2="249.9" stroke="#ff2040" stroke-width="1.05" />
<line x1="772.9" y1="249.9" x2="787.3" y2="242.6" stroke="#e02090" stroke-width="1.05" />
<line x1="787.3" y1="242.6" x2="801.7" y2="235.3" stroke="#c020d0" stroke-width="1.05" />
<line x1="592.3" y1="387" x2="607.2" y2="382.3" stroke="#c020d0" stroke-width="1.05" />
<line x1="607.2" y1="382.3" x2="622.1" y2="377.7" stroke="#e02090" stroke-width="1.05" />
<line x1="622.1" y1="377.7" x2="637" y2="373" stroke="#ff2040" stroke-width="1.05" />
<line x1="637" y1="373" x2="651.9" y2="368.3" stroke="#ff3030" stroke-width="1.05" />
<line x1="651.9" y1="368.3" x2="666.8" y2="363.7" stroke="#ff4020" stroke-width="1.05" />
<line x1="666.8" y1="363.7" x2="681.7" y2="359" stroke="#ff5020" stroke-width="1.05" />
<line x1="681.7" y1="359" x2="726" y2="342.5" stroke="#ff5a20" stroke-width="1.05" />
<line x1="726" y1="342.5" x2="770.8" y2="324.9" stroke="#ff5a20" stroke-width="1.05" />
<line x1="770.8" y1="324.9" x2="786.1" y2="318.1" stroke="#ff5020" stroke-width="1.05" />
<line x1="786.1" y1="318.1" x2="801.5" y2="311.3" stroke="#ff4020" stroke-width="1.05" />
<line x1="801.5" y1="311.3" x2="816.8" y2="304.5" stroke="#ff3030" stroke-width="1.05" />
<line x1="816.8" y1="304.5" x2="832.1" y2="297.8" stroke="#ff2040" stroke-width="1.05" />
<line x1="832.1" y1="297.8" x2="847.5" y2="291" stroke="#e02090" stroke-width="1.05" />
<line x1="847.5" y1="291" x2="862.8" y2="284.2" stroke="#c020d0" stroke-width="1.05" />
<path d="M625.4,313.1 C637.4,327.1 665.7,349 681.7,359" stroke="#ff5a20" stroke-width="1.05" fill="none"/>
<path d="M715.2,279.2 C727.2,293.2 754.8,314.9 770.8,324.9" stroke="#ff5a20" stroke-width="1.05" fill="none"/>
<line x1="625.4" y1="313.1" x2="627" y2="321.9" stroke="#f0c020" stroke-width="1.1" />
<line x1="627" y1="321.9" x2="628.7" y2="330.7" stroke="#c0e020" stroke-width="1.1" />
<line x1="628.7" y1="330.7" x2="630.3" y2="339.6" stroke="#60e040" stroke-width="1.1" />
<line x1="630.3" y1="339.6" x2="631.9" y2="348.4" stroke="#20d0a0" stroke-width="1.1" />
<line x1="631.9" y1="348.4" x2="633.6" y2="357.2" stroke="#20a0e0" stroke-width="1.1" />
<line x1="633.6" y1="357.2" x2="635.2" y2="366" stroke="#2040d0" stroke-width="1.1" />
<polygon points="631.9,364.5 629.9,370.7 635.4,368.5" fill="none" stroke="#40b040" stroke-width="0.9" />
<polygon points="638.9,364.5 638,371.9 635.1,368.1" fill="none" stroke="#40b040" stroke-width="0.9" />
<circle cx="625.4" cy="313.1" r="1.5" fill="#70d070"/>
<line x1="681.7" y1="359" x2="683.3" y2="367.8" stroke="#f0c020" stroke-width="1.1" />
<line x1="683.3" y1="367.8" x2="684.9" y2="376.6" stroke="#c0e020" stroke-width="1.1" />
<line x1="684.9" y1="376.6" x2="686.5" y2="385.4" stroke="#60e040" stroke-width="1.1" />
<line x1="686.5" y1="385.4" x2="688.1" y2="394.2" stroke="#20d0a0" stroke-width="1.1" />
<line x1="688.1" y1="394.2" x2="689.7" y2="403" stroke="#20a0e0" stroke-width="1.1" />
<line x1="689.7" y1="403" x2="691.3" y2="411.8" stroke="#2040d0" stroke-width="1.1" />
<polygon points="688,410.3 686,416.5 691.5,414.3" fill="none" stroke="#40b040" stroke-width="0.9" />
<polygon points="695,410.3 694.1,417.7 691.2,413.9" fill="none" stroke="#40b040" stroke-width="0.9" />
<circle cx="681.7" cy="359" r="1.5" fill="#70d070"/>
<line x1="715.2" y1="279.2" x2="716.5" y2="288.1" stroke="#f0c020" stroke-width="1.1" />
<line x1="716.5" y1="288.1" x2="717.7" y2="296.9" stroke="#c0e020" stroke-width="1.1" />
<line x1="717.7" y1="296.9" x2="719" y2="305.8" stroke="#60e040" stroke-width="1.1" />
<line x1="719" y1="305.8" x2="720.2" y2="314.6" stroke="#20d0a0" stroke-width="1.1" />
<line x1="720.2" y1="314.6" x2="721.5" y2="323.4" stroke="#20a0e0" stroke-width="1.1" />
<line x1="721.5" y1="323.4" x2="722.7" y2="332.3" stroke="#2040d0" stroke-width="1.1" />
<polygon points="719.4,330.8 717.4,337 722.9,334.8" fill="none" stroke="#40b040" stroke-width="0.9" />
<polygon points="726.4,330.8 725.5,338.2 722.6,334.4" fill="none" stroke="#40b040" stroke-width="0.9" />
<circle cx="715.2" cy="279.2" r="1.5" fill="#70d070"/>
<line x1="770.8" y1="324.9" x2="772.3" y2="333.8" stroke="#f0c020" stroke-width="1.1" />
<line x1="772.3" y1="333.8" x2="773.8" y2="342.6" stroke="#c0e020" stroke-width="1.1" />
<line x1="773.8" y1="342.6" x2="775.3" y2="351.4" stroke="#60e040" stroke-width="1.1" />
<line x1="775.3" y1="351.4" x2="776.8" y2="360.3" stroke="#20d0a0" stroke-width="1.1" />
<line x1="776.8" y1="360.3" x2="778.3" y2="369.1" stroke="#20a0e0" stroke-width="1.1" />
<line x1="778.3" y1="369.1" x2="779.8" y2="378" stroke="#2040d0" stroke-width="1.1" />
<polygon points="776.5,376.5 774.5,382.7 780,380.5" fill="none" stroke="#40b040" stroke-width="0.9" />
<polygon points="783.5,376.5 782.6,383.9 779.7,380.1" fill="none" stroke="#40b040" stroke-width="0.9" />
<circle cx="770.8" cy="324.9" r="1.5" fill="#70d070"/>
<polygon points="575.8,460.3 598.1,452.7 598.6,454.3 603,448.5 596,446.6 596.5,448.2 574.2,455.7" fill="#f58a8a" stroke="none" stroke-width="1" />
<polygon points="576.5,456.1 563.2,445.4 564.2,444.1 557,443.5 559.1,450.4 560.2,449.1 573.5,459.9" fill="#f58a8a" stroke="none" stroke-width="1" />
</g>
<g class="tx">
<text x="4" y="10" font-size="7.6" fill="#404040" text-anchor="start" font-weight="normal" textLength="39" lengthAdjust="spacingAndGlyphs">Analiz Modeli</text>
<rect x="432" y="2.2" width="30" height="8.5" fill="#c4c4c4"/>
<rect x="432" y="2.2" width="1.2" height="8.5" fill="#3a3a3a"/>
<rect x="442" y="2.2" width="1.2" height="8.5" fill="#3a3a3a"/>
<rect x="452" y="2.2" width="1.2" height="8.5" fill="#3a3a3a"/>
<rect x="432" y="9.9" width="30" height="0.9" fill="#3a3a3a"/>
<path d="M434.5,3.7 L437,6.7 L437,9.2 M437,6.7 L440.5,3.4" stroke="#222" stroke-width="1" fill="none"/>
<path d="M444.5,9.2 L444.5,3.7 L449.5,9.2 L449.5,3.7" stroke="#222" stroke-width="1" fill="none"/>
<path d="M454.5,9.2 L457,3.7 L459.5,9.2" stroke="#222" stroke-width="1" fill="none"/>
<rect x="431.5" y="237.2" width="30" height="8.5" fill="#c4c4c4"/>
<rect x="431.5" y="237.2" width="1.2" height="8.5" fill="#3a3a3a"/>
<rect x="441.5" y="237.2" width="1.2" height="8.5" fill="#3a3a3a"/>
<rect x="451.5" y="237.2" width="1.2" height="8.5" fill="#3a3a3a"/>
<rect x="431.5" y="244.9" width="30" height="0.9" fill="#3a3a3a"/>
<path d="M434,238.7 L436.5,241.7 L436.5,244.2 M436.5,241.7 L440,238.4" stroke="#222" stroke-width="1" fill="none"/>
<path d="M444,244.2 L444,238.7 L449,244.2 L449,238.7" stroke="#222" stroke-width="1" fill="none"/>
<path d="M454,244.2 L456.5,238.7 L459,244.2" stroke="#222" stroke-width="1" fill="none"/>
<text x="467.5" y="9.8" font-size="7.6" fill="#505050" text-anchor="start" font-weight="normal" textLength="53" lengthAdjust="spacingAndGlyphs">Deformasyon : Ey</text>
<text x="467.3" y="21" font-size="7.8" fill="#000000" text-anchor="start" font-weight="normal" textLength="16.5" lengthAdjust="spacingAndGlyphs">[mm]</text>
<rect x="467" y="30" width="14" height="13.2" fill="#0c1470"/>
<rect x="467" y="42.9" width="14" height="13.2" fill="#0000f0"/>
<rect x="467" y="55.8" width="14" height="13.2" fill="#0050f8"/>
<rect x="467" y="68.7" width="14" height="13.2" fill="#00a8f8"/>
<rect x="467" y="81.6" width="14" height="13.2" fill="#00d8f8"/>
<rect x="467" y="94.5" width="14" height="13.2" fill="#18d8b8"/>
<rect x="467" y="107.3" width="14" height="13.2" fill="#00f880"/>
<rect x="467" y="120.2" width="14" height="13.2" fill="#20f040"/>
<rect x="467" y="133.1" width="14" height="13.2" fill="#60f000"/>
<rect x="467" y="146" width="14" height="13.2" fill="#b0f000"/>
<rect x="467" y="158.9" width="14" height="13.2" fill="#ffff00"/>
<rect x="467" y="171.8" width="14" height="13.2" fill="#ffa000"/>
<rect x="467" y="184.7" width="14" height="13.2" fill="#ff5000"/>
<rect x="467" y="197.6" width="14" height="13.2" fill="#ff0000"/>
<rect x="467" y="210.5" width="14" height="13.2" fill="#c000c8"/>
<text x="481.3" y="32.2" font-size="7.6" fill="#282828" text-anchor="start" font-weight="normal" textLength="4.3" lengthAdjust="spacingAndGlyphs">0</text>
<text x="481.3" y="45.1" font-size="7.6" fill="#282828" text-anchor="start" font-weight="normal" textLength="18.3" lengthAdjust="spacingAndGlyphs">0.002</text>
<text x="481.3" y="58" font-size="7.6" fill="#282828" text-anchor="start" font-weight="normal" textLength="18.3" lengthAdjust="spacingAndGlyphs">0.005</text>
<text x="481.3" y="70.9" font-size="7.6" fill="#282828" text-anchor="start" font-weight="normal" textLength="18.3" lengthAdjust="spacingAndGlyphs">0.007</text>
<text x="481.3" y="83.8" font-size="7.6" fill="#282828" text-anchor="start" font-weight="normal" textLength="18.3" lengthAdjust="spacingAndGlyphs">0.009</text>
<text x="481.3" y="96.7" font-size="7.6" fill="#282828" text-anchor="start" font-weight="normal" textLength="18.3" lengthAdjust="spacingAndGlyphs">0.012</text>
<text x="481.3" y="109.5" font-size="7.6" fill="#282828" text-anchor="start" font-weight="normal" textLength="18.3" lengthAdjust="spacingAndGlyphs">0.014</text>
<text x="481.3" y="122.4" font-size="7.6" fill="#282828" text-anchor="start" font-weight="normal" textLength="18.3" lengthAdjust="spacingAndGlyphs">0.016</text>
<text x="481.3" y="135.3" font-size="7.6" fill="#282828" text-anchor="start" font-weight="normal" textLength="18.3" lengthAdjust="spacingAndGlyphs">0.019</text>
<text x="481.3" y="148.2" font-size="7.6" fill="#282828" text-anchor="start" font-weight="normal" textLength="18.3" lengthAdjust="spacingAndGlyphs">0.021</text>
<text x="481.3" y="161.1" font-size="7.6" fill="#282828" text-anchor="start" font-weight="normal" textLength="18.3" lengthAdjust="spacingAndGlyphs">0.023</text>
<text x="481.3" y="174" font-size="7.6" fill="#282828" text-anchor="start" font-weight="normal" textLength="18.3" lengthAdjust="spacingAndGlyphs">0.025</text>
<text x="481.3" y="186.9" font-size="7.6" fill="#282828" text-anchor="start" font-weight="normal" textLength="18.3" lengthAdjust="spacingAndGlyphs">0.028</text>
<text x="481.3" y="199.8" font-size="7.6" fill="#282828" text-anchor="start" font-weight="normal" textLength="13.6" lengthAdjust="spacingAndGlyphs">0.03</text>
<text x="481.3" y="212.7" font-size="7.6" fill="#282828" text-anchor="start" font-weight="normal" textLength="18.3" lengthAdjust="spacingAndGlyphs">0.032</text>
<text x="481.3" y="225.6" font-size="7.6" fill="#282828" text-anchor="start" font-weight="normal" textLength="18.3" lengthAdjust="spacingAndGlyphs">0.035</text>
<text x="3.8" y="243" font-size="7.6" fill="#ff0000" text-anchor="start" font-weight="normal" textLength="53" lengthAdjust="spacingAndGlyphs">Deformasyon : Ey</text>
<text x="3.6" y="254" font-size="7.8" fill="#000000" text-anchor="start" font-weight="normal" textLength="16.5" lengthAdjust="spacingAndGlyphs">[mm]</text>
<rect x="3.3" y="262.9" width="14" height="12.6" fill="#0c1470"/>
<rect x="3.3" y="275.2" width="14" height="12.6" fill="#0000f0"/>
<rect x="3.3" y="287.6" width="14" height="12.6" fill="#0050f8"/>
<rect x="3.3" y="299.9" width="14" height="12.6" fill="#00a8f8"/>
<rect x="3.3" y="312.2" width="14" height="12.6" fill="#00d8f8"/>
<rect x="3.3" y="324.5" width="14" height="12.6" fill="#18d8b8"/>
<rect x="3.3" y="336.9" width="14" height="12.6" fill="#00f880"/>
<rect x="3.3" y="349.2" width="14" height="12.6" fill="#20f040"/>
<rect x="3.3" y="361.5" width="14" height="12.6" fill="#60f000"/>
<rect x="3.3" y="373.9" width="14" height="12.6" fill="#b0f000"/>
<rect x="3.3" y="386.2" width="14" height="12.6" fill="#ffff00"/>
<rect x="3.3" y="398.5" width="14" height="12.6" fill="#ffa000"/>
<rect x="3.3" y="410.9" width="14" height="12.6" fill="#ff5000"/>
<rect x="3.3" y="423.2" width="14" height="12.6" fill="#ff0000"/>
<rect x="3.3" y="435.5" width="14" height="12.6" fill="#c000c8"/>
<text x="17.6" y="265.1" font-size="7.6" fill="#282828" text-anchor="start" font-weight="normal" textLength="4.3" lengthAdjust="spacingAndGlyphs">0</text>
<text x="17.6" y="277.4" font-size="7.6" fill="#282828" text-anchor="start" font-weight="normal" textLength="18.3" lengthAdjust="spacingAndGlyphs">0.002</text>
<text x="17.6" y="289.8" font-size="7.6" fill="#282828" text-anchor="start" font-weight="normal" textLength="18.3" lengthAdjust="spacingAndGlyphs">0.005</text>
<text x="17.6" y="302.1" font-size="7.6" fill="#282828" text-anchor="start" font-weight="normal" textLength="18.3" lengthAdjust="spacingAndGlyphs">0.007</text>
<text x="17.6" y="314.4" font-size="7.6" fill="#282828" text-anchor="start" font-weight="normal" textLength="18.3" lengthAdjust="spacingAndGlyphs">0.009</text>
<text x="17.6" y="326.7" font-size="7.6" fill="#282828" text-anchor="start" font-weight="normal" textLength="18.3" lengthAdjust="spacingAndGlyphs">0.012</text>
<text x="17.6" y="339.1" font-size="7.6" fill="#282828" text-anchor="start" font-weight="normal" textLength="18.3" lengthAdjust="spacingAndGlyphs">0.014</text>
<text x="17.6" y="351.4" font-size="7.6" fill="#282828" text-anchor="start" font-weight="normal" textLength="18.3" lengthAdjust="spacingAndGlyphs">0.016</text>
<text x="17.6" y="363.7" font-size="7.6" fill="#282828" text-anchor="start" font-weight="normal" textLength="18.3" lengthAdjust="spacingAndGlyphs">0.019</text>
<text x="17.6" y="376.1" font-size="7.6" fill="#282828" text-anchor="start" font-weight="normal" textLength="18.3" lengthAdjust="spacingAndGlyphs">0.021</text>
<text x="17.6" y="388.4" font-size="7.6" fill="#282828" text-anchor="start" font-weight="normal" textLength="18.3" lengthAdjust="spacingAndGlyphs">0.023</text>
<text x="17.6" y="400.7" font-size="7.6" fill="#282828" text-anchor="start" font-weight="normal" textLength="18.3" lengthAdjust="spacingAndGlyphs">0.025</text>
<text x="17.6" y="413.1" font-size="7.6" fill="#282828" text-anchor="start" font-weight="normal" textLength="18.3" lengthAdjust="spacingAndGlyphs">0.028</text>
<text x="17.6" y="425.4" font-size="7.6" fill="#282828" text-anchor="start" font-weight="normal" textLength="13.6" lengthAdjust="spacingAndGlyphs">0.03</text>
<text x="17.6" y="437.7" font-size="7.6" fill="#282828" text-anchor="start" font-weight="normal" textLength="18.3" lengthAdjust="spacingAndGlyphs">0.032</text>
<text x="17.6" y="450" font-size="7.6" fill="#282828" text-anchor="start" font-weight="normal" textLength="18.3" lengthAdjust="spacingAndGlyphs">0.035</text>
<text x="467.5" y="243" font-size="7.6" fill="#ff0000" text-anchor="start" font-weight="normal" textLength="53" lengthAdjust="spacingAndGlyphs">Deformasyon : Ey</text>
<text x="467.3" y="254" font-size="7.8" fill="#000000" text-anchor="start" font-weight="normal" textLength="16.5" lengthAdjust="spacingAndGlyphs">[mm]</text>
<rect x="467" y="262.5" width="14" height="12.6" fill="#0c1470"/>
<rect x="467" y="274.8" width="14" height="12.6" fill="#0000f0"/>
<rect x="467" y="287.2" width="14" height="12.6" fill="#0050f8"/>
<rect x="467" y="299.5" width="14" height="12.6" fill="#00a8f8"/>
<rect x="467" y="311.8" width="14" height="12.6" fill="#00d8f8"/>
<rect x="467" y="324.1" width="14" height="12.6" fill="#18d8b8"/>
<rect x="467" y="336.5" width="14" height="12.6" fill="#00f880"/>
<rect x="467" y="348.8" width="14" height="12.6" fill="#20f040"/>
<rect x="467" y="361.1" width="14" height="12.6" fill="#60f000"/>
<rect x="467" y="373.5" width="14" height="12.6" fill="#b0f000"/>
<rect x="467" y="385.8" width="14" height="12.6" fill="#ffff00"/>
<rect x="467" y="398.1" width="14" height="12.6" fill="#ffa000"/>
<rect x="467" y="410.5" width="14" height="12.6" fill="#ff5000"/>
<rect x="467" y="422.8" width="14" height="12.6" fill="#ff0000"/>
<rect x="467" y="435.1" width="14" height="12.6" fill="#c000c8"/>
<text x="481.3" y="264.7" font-size="7.6" fill="#282828" text-anchor="start" font-weight="normal" textLength="4.3" lengthAdjust="spacingAndGlyphs">0</text>
<text x="481.3" y="277" font-size="7.6" fill="#282828" text-anchor="start" font-weight="normal" textLength="18.3" lengthAdjust="spacingAndGlyphs">0.002</text>
<text x="481.3" y="289.4" font-size="7.6" fill="#282828" text-anchor="start" font-weight="normal" textLength="18.3" lengthAdjust="spacingAndGlyphs">0.005</text>
<text x="481.3" y="301.7" font-size="7.6" fill="#282828" text-anchor="start" font-weight="normal" textLength="18.3" lengthAdjust="spacingAndGlyphs">0.007</text>
<text x="481.3" y="314" font-size="7.6" fill="#282828" text-anchor="start" font-weight="normal" textLength="18.3" lengthAdjust="spacingAndGlyphs">0.009</text>
<text x="481.3" y="326.3" font-size="7.6" fill="#282828" text-anchor="start" font-weight="normal" textLength="18.3" lengthAdjust="spacingAndGlyphs">0.012</text>
<text x="481.3" y="338.7" font-size="7.6" fill="#282828" text-anchor="start" font-weight="normal" textLength="18.3" lengthAdjust="spacingAndGlyphs">0.014</text>
<text x="481.3" y="351" font-size="7.6" fill="#282828" text-anchor="start" font-weight="normal" textLength="18.3" lengthAdjust="spacingAndGlyphs">0.016</text>
<text x="481.3" y="363.3" font-size="7.6" fill="#282828" text-anchor="start" font-weight="normal" textLength="18.3" lengthAdjust="spacingAndGlyphs">0.019</text>
<text x="481.3" y="375.7" font-size="7.6" fill="#282828" text-anchor="start" font-weight="normal" textLength="18.3" lengthAdjust="spacingAndGlyphs">0.021</text>
<text x="481.3" y="388" font-size="7.6" fill="#282828" text-anchor="start" font-weight="normal" textLength="18.3" lengthAdjust="spacingAndGlyphs">0.023</text>
<text x="481.3" y="400.3" font-size="7.6" fill="#282828" text-anchor="start" font-weight="normal" textLength="18.3" lengthAdjust="spacingAndGlyphs">0.025</text>
<text x="481.3" y="412.7" font-size="7.6" fill="#282828" text-anchor="start" font-weight="normal" textLength="18.3" lengthAdjust="spacingAndGlyphs">0.028</text>
<text x="481.3" y="425" font-size="7.6" fill="#282828" text-anchor="start" font-weight="normal" textLength="13.6" lengthAdjust="spacingAndGlyphs">0.03</text>
<text x="481.3" y="437.3" font-size="7.6" fill="#282828" text-anchor="start" font-weight="normal" textLength="18.3" lengthAdjust="spacingAndGlyphs">0.032</text>
<text x="481.3" y="449.6" font-size="7.6" fill="#282828" text-anchor="start" font-weight="normal" textLength="18.3" lengthAdjust="spacingAndGlyphs">0.035</text>
</g>
</svg></body></html>
